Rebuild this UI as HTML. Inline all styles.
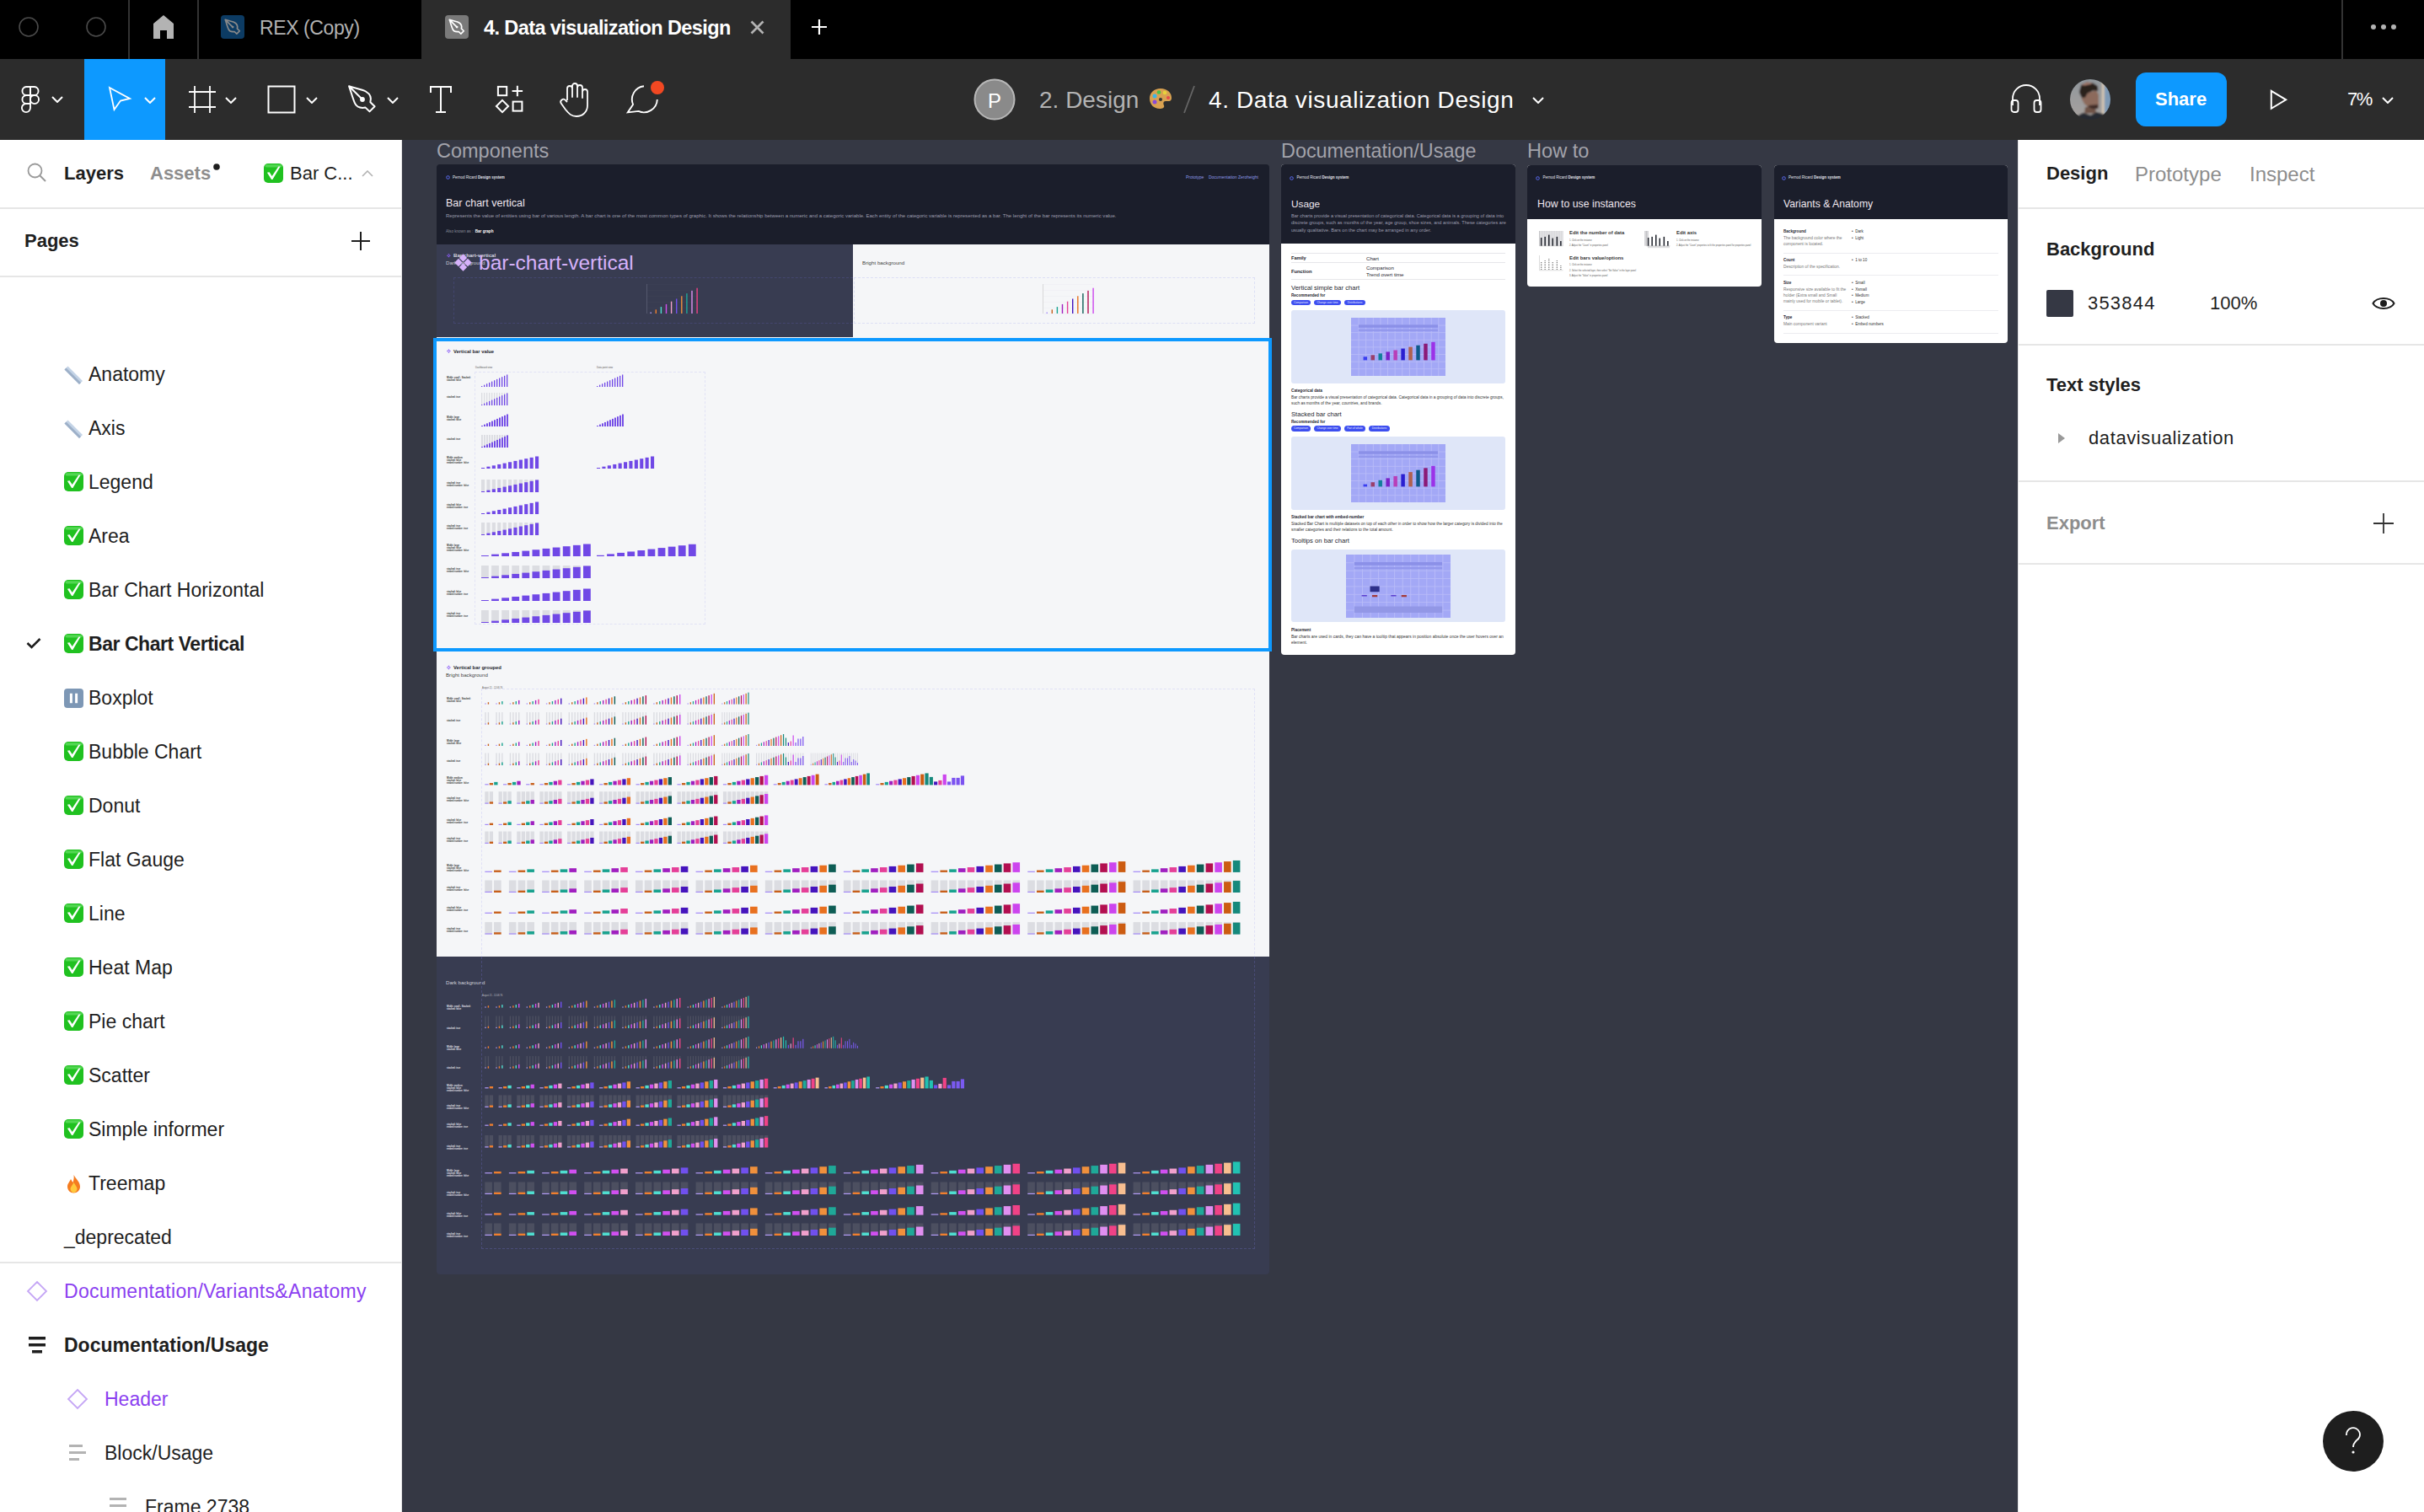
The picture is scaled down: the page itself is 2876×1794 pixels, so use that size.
<!DOCTYPE html>
<html><head><meta charset="utf-8"><title>Figma</title>
<style>
html,body{margin:0;padding:0;width:2876px;height:1794px;overflow:hidden;background:#353844}
body{position:relative;font-family:"Liberation Sans", sans-serif;}
.t{position:absolute;white-space:nowrap;}
.r{position:absolute;}
svg.r{display:block}
</style></head><body>
<div class="r" style="left:477px;top:166px;width:1917px;height:1628px;background:#353844;"></div>
<div class="t" style="left:518px;top:163.0px;font-size:23.5px;line-height:32px;color:#a3a3ab;font-weight:400;">Components</div>
<div class="t" style="left:1520px;top:163.0px;font-size:23.4px;line-height:32px;color:#a3a3ab;font-weight:400;">Documentation/Usage</div>
<div class="t" style="left:1812px;top:162.5px;font-size:23.6px;line-height:33px;color:#a3a3ab;font-weight:400;">How to</div>
<div class="r" style="left:518px;top:195px;width:988px;height:95px;background:#1b1e2b;border-radius:4px 4px 0 0"></div>
<svg class="r" style="left:529px;top:208px;overflow:visible" width="5" height="5" viewBox="0 0 5 5"><circle cx="2.5" cy="2.5" r="1.8" fill="none" stroke="#5b6cf5" stroke-width="1"/></svg>
<div class="t" style="left:537px;top:207.6px;font-size:4.5px;line-height:6px;color:#e6e6ee;font-weight:400;">Pernod Ricard <b>Design system</b></div>
<div class="t" style="left:1407px;top:207.1px;font-size:5.0px;line-height:7px;color:#8e9ae6;font-weight:400;">Prototype &nbsp;&nbsp; Documentation Zeroheight</div>
<div class="t" style="left:529px;top:233.1px;font-size:12.5px;line-height:17px;color:#f0e8f0;font-weight:400;">Bar chart vertical</div>
<div class="t" style="left:529px;top:252.0px;font-size:6.05px;line-height:8px;color:#9b9cad;font-weight:400;white-space:nowrap">Represents the value of entities using bar of various length. A bar chart is one of the most common types of graphic. It shows the relationship between a numeric and a categoric variable. Each entity of the categoric variable is represented as a bar. The lenght of the bar represents its numeric value.</div>
<div class="t" style="left:529px;top:272.2px;font-size:4.6px;line-height:6px;color:#8a8b99;font-weight:400;">Also known as : &nbsp;<span style="color:#fff;font-weight:700">Bar graph</span></div>
<div class="r" style="left:518px;top:290px;width:494px;height:110px;background:#383c51;"></div>
<div class="r" style="left:1012px;top:290px;width:494px;height:110px;background:#f5f6f8;"></div>
<div class="t" style="left:538px;top:299.4px;font-size:6.1px;line-height:8px;color:#d8d8e0;font-weight:700;">Bar chart-vertical</div>
<div class="t" style="left:529px;top:308.0px;font-size:6.1px;line-height:8px;color:#c9c9d3;font-weight:400;">Dark background</div>
<div class="t" style="left:1023px;top:308.0px;font-size:6.2px;line-height:8px;color:#444;font-weight:400;">Bright background</div>
<div class="r" style="left:538px;top:328.6px;width:474px;height:55.5px;background:transparent;border:1px dashed #43466e;border-right:none;box-sizing:border-box"></div>
<div class="r" style="left:1013px;top:328.6px;width:476px;height:55.5px;background:transparent;border:1px dashed #dcdff5;box-sizing:border-box"></div>
<svg class="r" style="left:0px;top:0px;overflow:visible" width="2876" height="1794" viewBox="0 0 2876 1794"><rect x="767.00" y="337.00" width="0.50" height="35.00" fill="#70728a"/><rect x="768.00" y="337.00" width="60.00" height="0.30" fill="#45485c"/><rect x="768.00" y="344.00" width="60.00" height="0.30" fill="#45485c"/><rect x="768.00" y="351.00" width="60.00" height="0.30" fill="#45485c"/><rect x="768.00" y="358.00" width="60.00" height="0.30" fill="#45485c"/><rect x="768.00" y="365.00" width="60.00" height="0.30" fill="#45485c"/><rect x="768.00" y="372.00" width="60.00" height="0.30" fill="#45485c"/><rect x="771.50" y="370.50" width="1.40" height="1.50" fill="#b49cf7"/><rect x="777.60" y="367.30" width="1.40" height="4.70" fill="#f07f2e"/><rect x="783.70" y="364.10" width="1.40" height="7.90" fill="#4fded0"/><rect x="789.80" y="360.90" width="1.40" height="11.10" fill="#d04ff0"/><rect x="795.90" y="357.70" width="1.40" height="14.30" fill="#f0a0cc"/><rect x="802.00" y="354.50" width="1.40" height="17.50" fill="#7050ee"/><rect x="808.10" y="351.30" width="1.40" height="20.70" fill="#f0903c"/><rect x="814.20" y="348.10" width="1.40" height="23.90" fill="#1fa898"/><rect x="820.30" y="344.90" width="1.40" height="27.10" fill="#e08ff0"/><rect x="826.40" y="341.70" width="1.40" height="30.30" fill="#f04286"/><rect x="1237.00" y="337.00" width="0.50" height="35.00" fill="#bbb"/><rect x="1238.00" y="337.00" width="60.00" height="0.30" fill="#e6e7ee"/><rect x="1238.00" y="344.00" width="60.00" height="0.30" fill="#e6e7ee"/><rect x="1238.00" y="351.00" width="60.00" height="0.30" fill="#e6e7ee"/><rect x="1238.00" y="358.00" width="60.00" height="0.30" fill="#e6e7ee"/><rect x="1238.00" y="365.00" width="60.00" height="0.30" fill="#e6e7ee"/><rect x="1238.00" y="372.00" width="60.00" height="0.30" fill="#e6e7ee"/><rect x="1241.50" y="370.50" width="1.40" height="1.50" fill="#a48af7"/><rect x="1247.60" y="367.30" width="1.40" height="4.70" fill="#c75f1a"/><rect x="1253.70" y="364.10" width="1.40" height="7.90" fill="#18a28f"/><rect x="1259.80" y="360.90" width="1.40" height="11.10" fill="#a01fc0"/><rect x="1265.90" y="357.70" width="1.40" height="14.30" fill="#e53f98"/><rect x="1272.00" y="354.50" width="1.40" height="17.50" fill="#4514bd"/><rect x="1278.10" y="351.30" width="1.40" height="20.70" fill="#e8701f"/><rect x="1284.20" y="348.10" width="1.40" height="23.90" fill="#0e5d55"/><rect x="1290.30" y="344.90" width="1.40" height="27.10" fill="#b20f50"/><rect x="1296.40" y="341.70" width="1.40" height="30.30" fill="#cc45ee"/></svg>
<svg class="r" style="left:0px;top:0px;overflow:visible" width="1" height="1"><path d="M532.40 300.90 L533.35 301.85 L532.40 302.79 L531.45 301.85 Z M532.40 303.61 L533.35 304.55 L532.40 305.50 L531.45 304.55 Z M531.05 302.25 L532.00 303.20 L531.05 304.14 L530.10 303.20 Z M533.75 302.25 L534.70 303.20 L533.75 304.14 L532.80 303.20 Z " fill="#8b5cf6"/></svg>
<svg class="r" style="left:539px;top:301.4px;overflow:visible" width="21" height="21" viewBox="0 0 21 21"><g fill="#d6b2fb"><path d="M10.5 0.3 L15.2 5 L10.5 9.7 L5.8 5Z"/><path d="M10.5 11.3 L15.2 16 L10.5 20.7 L5.8 16Z"/><path d="M5 5.8 L9.7 10.5 L5 15.2 L0.3 10.5Z"/><path d="M16 5.8 L20.7 10.5 L16 15.2 L11.3 10.5Z"/></g></svg>
<div class="t" style="left:568px;top:295.0px;font-size:24.5px;line-height:34px;color:#d6b2fb;font-weight:400;">bar-chart-vertical</div>
<div class="r" style="left:518px;top:400px;width:988px;height:373px;background:#f5f6f8;"></div>
<svg class="r" style="left:0px;top:0px;overflow:visible" width="1" height="1"><path d="M532.40 414.22 L533.38 415.20 L532.40 416.18 L531.42 415.20 Z M532.40 417.02 L533.38 418.00 L532.40 418.98 L531.42 418.00 Z M531.00 415.62 L531.98 416.60 L531.00 417.58 L530.02 416.60 Z M533.80 415.62 L534.78 416.60 L533.80 417.58 L532.82 416.60 Z " fill="#8b5cf6"/></svg>
<div class="t" style="left:538px;top:412.6px;font-size:5.85px;line-height:8px;color:#1e1e2e;font-weight:700;">Vertical bar value</div>
<div class="t" style="left:564px;top:434.5px;font-size:2.8px;line-height:3px;color:#555;font-weight:400;">Dashboard view</div>
<div class="t" style="left:708px;top:434.5px;font-size:2.8px;line-height:3px;color:#555;font-weight:400;">Data point view</div>
<div class="r" style="left:563px;top:441px;width:274px;height:300px;background:transparent;border:1px dashed #e2e3f6;box-sizing:border-box"></div>
<svg class="r" style="left:0px;top:0px;overflow:visible" width="2876" height="1794" viewBox="0 0 2876 1794"><rect x="571.00" y="458.00" width="1.30" height="1.00" fill="#7048e6"/><rect x="574.00" y="456.65" width="1.30" height="2.35" fill="#7048e6"/><rect x="577.00" y="455.30" width="1.30" height="3.70" fill="#7048e6"/><rect x="580.00" y="453.95" width="1.30" height="5.05" fill="#7048e6"/><rect x="583.00" y="452.60" width="1.30" height="6.40" fill="#7048e6"/><rect x="586.00" y="451.25" width="1.30" height="7.75" fill="#7048e6"/><rect x="589.00" y="449.90" width="1.30" height="9.10" fill="#7048e6"/><rect x="592.00" y="448.55" width="1.30" height="10.45" fill="#7048e6"/><rect x="595.00" y="447.20" width="1.30" height="11.80" fill="#7048e6"/><rect x="598.00" y="445.85" width="1.30" height="13.15" fill="#7048e6"/><rect x="601.00" y="444.50" width="1.30" height="14.50" fill="#7048e6"/><rect x="708.00" y="458.00" width="1.30" height="1.00" fill="#7048e6"/><rect x="711.00" y="456.65" width="1.30" height="2.35" fill="#7048e6"/><rect x="714.00" y="455.30" width="1.30" height="3.70" fill="#7048e6"/><rect x="717.00" y="453.95" width="1.30" height="5.05" fill="#7048e6"/><rect x="720.00" y="452.60" width="1.30" height="6.40" fill="#7048e6"/><rect x="723.00" y="451.25" width="1.30" height="7.75" fill="#7048e6"/><rect x="726.00" y="449.90" width="1.30" height="9.10" fill="#7048e6"/><rect x="729.00" y="448.55" width="1.30" height="10.45" fill="#7048e6"/><rect x="732.00" y="447.20" width="1.30" height="11.80" fill="#7048e6"/><rect x="735.00" y="445.85" width="1.30" height="13.15" fill="#7048e6"/><rect x="738.00" y="444.50" width="1.30" height="14.50" fill="#7048e6"/><rect x="571.00" y="466.00" width="1.30" height="15.00" fill="#dcdde2"/><rect x="571.00" y="480.00" width="1.30" height="1.00" fill="#7048e6"/><rect x="574.00" y="466.00" width="1.30" height="15.00" fill="#dcdde2"/><rect x="574.00" y="478.65" width="1.30" height="2.35" fill="#7048e6"/><rect x="577.00" y="466.00" width="1.30" height="15.00" fill="#dcdde2"/><rect x="577.00" y="477.30" width="1.30" height="3.70" fill="#7048e6"/><rect x="580.00" y="466.00" width="1.30" height="15.00" fill="#dcdde2"/><rect x="580.00" y="475.95" width="1.30" height="5.05" fill="#7048e6"/><rect x="583.00" y="466.00" width="1.30" height="15.00" fill="#dcdde2"/><rect x="583.00" y="474.60" width="1.30" height="6.40" fill="#7048e6"/><rect x="586.00" y="466.00" width="1.30" height="15.00" fill="#dcdde2"/><rect x="586.00" y="473.25" width="1.30" height="7.75" fill="#7048e6"/><rect x="589.00" y="466.00" width="1.30" height="15.00" fill="#dcdde2"/><rect x="589.00" y="471.90" width="1.30" height="9.10" fill="#7048e6"/><rect x="592.00" y="466.00" width="1.30" height="15.00" fill="#dcdde2"/><rect x="592.00" y="470.55" width="1.30" height="10.45" fill="#7048e6"/><rect x="595.00" y="466.00" width="1.30" height="15.00" fill="#dcdde2"/><rect x="595.00" y="469.20" width="1.30" height="11.80" fill="#7048e6"/><rect x="598.00" y="466.00" width="1.30" height="15.00" fill="#dcdde2"/><rect x="598.00" y="467.85" width="1.30" height="13.15" fill="#7048e6"/><rect x="601.00" y="466.00" width="1.30" height="15.00" fill="#dcdde2"/><rect x="601.00" y="466.50" width="1.30" height="14.50" fill="#7048e6"/><rect x="571.00" y="505.00" width="1.90" height="1.00" fill="#7048e6"/><rect x="574.00" y="503.65" width="1.90" height="2.35" fill="#7048e6"/><rect x="577.00" y="502.30" width="1.90" height="3.70" fill="#7048e6"/><rect x="580.00" y="500.95" width="1.90" height="5.05" fill="#7048e6"/><rect x="583.00" y="499.60" width="1.90" height="6.40" fill="#7048e6"/><rect x="586.00" y="498.25" width="1.90" height="7.75" fill="#7048e6"/><rect x="589.00" y="496.90" width="1.90" height="9.10" fill="#7048e6"/><rect x="592.00" y="495.55" width="1.90" height="10.45" fill="#7048e6"/><rect x="595.00" y="494.20" width="1.90" height="11.80" fill="#7048e6"/><rect x="598.00" y="492.85" width="1.90" height="13.15" fill="#7048e6"/><rect x="601.00" y="491.50" width="1.90" height="14.50" fill="#7048e6"/><rect x="708.00" y="505.00" width="1.90" height="1.00" fill="#7048e6"/><rect x="711.00" y="503.65" width="1.90" height="2.35" fill="#7048e6"/><rect x="714.00" y="502.30" width="1.90" height="3.70" fill="#7048e6"/><rect x="717.00" y="500.95" width="1.90" height="5.05" fill="#7048e6"/><rect x="720.00" y="499.60" width="1.90" height="6.40" fill="#7048e6"/><rect x="723.00" y="498.25" width="1.90" height="7.75" fill="#7048e6"/><rect x="726.00" y="496.90" width="1.90" height="9.10" fill="#7048e6"/><rect x="729.00" y="495.55" width="1.90" height="10.45" fill="#7048e6"/><rect x="732.00" y="494.20" width="1.90" height="11.80" fill="#7048e6"/><rect x="735.00" y="492.85" width="1.90" height="13.15" fill="#7048e6"/><rect x="738.00" y="491.50" width="1.90" height="14.50" fill="#7048e6"/><rect x="571.00" y="516.00" width="1.90" height="15.00" fill="#dcdde2"/><rect x="571.00" y="530.00" width="1.90" height="1.00" fill="#7048e6"/><rect x="574.00" y="516.00" width="1.90" height="15.00" fill="#dcdde2"/><rect x="574.00" y="528.65" width="1.90" height="2.35" fill="#7048e6"/><rect x="577.00" y="516.00" width="1.90" height="15.00" fill="#dcdde2"/><rect x="577.00" y="527.30" width="1.90" height="3.70" fill="#7048e6"/><rect x="580.00" y="516.00" width="1.90" height="15.00" fill="#dcdde2"/><rect x="580.00" y="525.95" width="1.90" height="5.05" fill="#7048e6"/><rect x="583.00" y="516.00" width="1.90" height="15.00" fill="#dcdde2"/><rect x="583.00" y="524.60" width="1.90" height="6.40" fill="#7048e6"/><rect x="586.00" y="516.00" width="1.90" height="15.00" fill="#dcdde2"/><rect x="586.00" y="523.25" width="1.90" height="7.75" fill="#7048e6"/><rect x="589.00" y="516.00" width="1.90" height="15.00" fill="#dcdde2"/><rect x="589.00" y="521.90" width="1.90" height="9.10" fill="#7048e6"/><rect x="592.00" y="516.00" width="1.90" height="15.00" fill="#dcdde2"/><rect x="592.00" y="520.55" width="1.90" height="10.45" fill="#7048e6"/><rect x="595.00" y="516.00" width="1.90" height="15.00" fill="#dcdde2"/><rect x="595.00" y="519.20" width="1.90" height="11.80" fill="#7048e6"/><rect x="598.00" y="516.00" width="1.90" height="15.00" fill="#dcdde2"/><rect x="598.00" y="517.85" width="1.90" height="13.15" fill="#7048e6"/><rect x="601.00" y="516.00" width="1.90" height="15.00" fill="#dcdde2"/><rect x="601.00" y="516.50" width="1.90" height="14.50" fill="#7048e6"/><rect x="571.00" y="555.00" width="4.10" height="1.00" fill="#7048e6"/><rect x="577.40" y="553.65" width="4.10" height="2.35" fill="#7048e6"/><rect x="583.80" y="552.30" width="4.10" height="3.70" fill="#7048e6"/><rect x="590.20" y="550.95" width="4.10" height="5.05" fill="#7048e6"/><rect x="596.60" y="549.60" width="4.10" height="6.40" fill="#7048e6"/><rect x="603.00" y="548.25" width="4.10" height="7.75" fill="#7048e6"/><rect x="609.40" y="546.90" width="4.10" height="9.10" fill="#7048e6"/><rect x="615.80" y="545.55" width="4.10" height="10.45" fill="#7048e6"/><rect x="622.20" y="544.20" width="4.10" height="11.80" fill="#7048e6"/><rect x="628.60" y="542.85" width="4.10" height="13.15" fill="#7048e6"/><rect x="635.00" y="541.50" width="4.10" height="14.50" fill="#7048e6"/><rect x="708.00" y="555.00" width="4.10" height="1.00" fill="#7048e6"/><rect x="714.40" y="553.65" width="4.10" height="2.35" fill="#7048e6"/><rect x="720.80" y="552.30" width="4.10" height="3.70" fill="#7048e6"/><rect x="727.20" y="550.95" width="4.10" height="5.05" fill="#7048e6"/><rect x="733.60" y="549.60" width="4.10" height="6.40" fill="#7048e6"/><rect x="740.00" y="548.25" width="4.10" height="7.75" fill="#7048e6"/><rect x="746.40" y="546.90" width="4.10" height="9.10" fill="#7048e6"/><rect x="752.80" y="545.55" width="4.10" height="10.45" fill="#7048e6"/><rect x="759.20" y="544.20" width="4.10" height="11.80" fill="#7048e6"/><rect x="765.60" y="542.85" width="4.10" height="13.15" fill="#7048e6"/><rect x="772.00" y="541.50" width="4.10" height="14.50" fill="#7048e6"/><rect x="571.00" y="569.00" width="4.10" height="15.00" fill="#dcdde2"/><rect x="571.00" y="583.00" width="4.10" height="1.00" fill="#7048e6"/><rect x="577.40" y="569.00" width="4.10" height="15.00" fill="#dcdde2"/><rect x="577.40" y="581.65" width="4.10" height="2.35" fill="#7048e6"/><rect x="583.80" y="569.00" width="4.10" height="15.00" fill="#dcdde2"/><rect x="583.80" y="580.30" width="4.10" height="3.70" fill="#7048e6"/><rect x="590.20" y="569.00" width="4.10" height="15.00" fill="#dcdde2"/><rect x="590.20" y="578.95" width="4.10" height="5.05" fill="#7048e6"/><rect x="596.60" y="569.00" width="4.10" height="15.00" fill="#dcdde2"/><rect x="596.60" y="577.60" width="4.10" height="6.40" fill="#7048e6"/><rect x="603.00" y="569.00" width="4.10" height="15.00" fill="#dcdde2"/><rect x="603.00" y="576.25" width="4.10" height="7.75" fill="#7048e6"/><rect x="609.40" y="569.00" width="4.10" height="15.00" fill="#dcdde2"/><rect x="609.40" y="574.90" width="4.10" height="9.10" fill="#7048e6"/><rect x="615.80" y="569.00" width="4.10" height="15.00" fill="#dcdde2"/><rect x="615.80" y="573.55" width="4.10" height="10.45" fill="#7048e6"/><rect x="622.20" y="569.00" width="4.10" height="15.00" fill="#dcdde2"/><rect x="622.20" y="572.20" width="4.10" height="11.80" fill="#7048e6"/><rect x="628.60" y="569.00" width="4.10" height="15.00" fill="#dcdde2"/><rect x="628.60" y="570.85" width="4.10" height="13.15" fill="#7048e6"/><rect x="635.00" y="569.00" width="4.10" height="15.00" fill="#dcdde2"/><rect x="635.00" y="569.50" width="4.10" height="14.50" fill="#7048e6"/><rect x="571.00" y="609.00" width="4.10" height="1.00" fill="#7048e6"/><rect x="577.40" y="607.65" width="4.10" height="2.35" fill="#7048e6"/><rect x="583.80" y="606.30" width="4.10" height="3.70" fill="#7048e6"/><rect x="590.20" y="604.95" width="4.10" height="5.05" fill="#7048e6"/><rect x="596.60" y="603.60" width="4.10" height="6.40" fill="#7048e6"/><rect x="603.00" y="602.25" width="4.10" height="7.75" fill="#7048e6"/><rect x="609.40" y="600.90" width="4.10" height="9.10" fill="#7048e6"/><rect x="615.80" y="599.55" width="4.10" height="10.45" fill="#7048e6"/><rect x="622.20" y="598.20" width="4.10" height="11.80" fill="#7048e6"/><rect x="628.60" y="596.85" width="4.10" height="13.15" fill="#7048e6"/><rect x="635.00" y="595.50" width="4.10" height="14.50" fill="#7048e6"/><rect x="571.00" y="620.00" width="4.10" height="15.00" fill="#dcdde2"/><rect x="571.00" y="634.00" width="4.10" height="1.00" fill="#7048e6"/><rect x="577.40" y="620.00" width="4.10" height="15.00" fill="#dcdde2"/><rect x="577.40" y="632.65" width="4.10" height="2.35" fill="#7048e6"/><rect x="583.80" y="620.00" width="4.10" height="15.00" fill="#dcdde2"/><rect x="583.80" y="631.30" width="4.10" height="3.70" fill="#7048e6"/><rect x="590.20" y="620.00" width="4.10" height="15.00" fill="#dcdde2"/><rect x="590.20" y="629.95" width="4.10" height="5.05" fill="#7048e6"/><rect x="596.60" y="620.00" width="4.10" height="15.00" fill="#dcdde2"/><rect x="596.60" y="628.60" width="4.10" height="6.40" fill="#7048e6"/><rect x="603.00" y="620.00" width="4.10" height="15.00" fill="#dcdde2"/><rect x="603.00" y="627.25" width="4.10" height="7.75" fill="#7048e6"/><rect x="609.40" y="620.00" width="4.10" height="15.00" fill="#dcdde2"/><rect x="609.40" y="625.90" width="4.10" height="9.10" fill="#7048e6"/><rect x="615.80" y="620.00" width="4.10" height="15.00" fill="#dcdde2"/><rect x="615.80" y="624.55" width="4.10" height="10.45" fill="#7048e6"/><rect x="622.20" y="620.00" width="4.10" height="15.00" fill="#dcdde2"/><rect x="622.20" y="623.20" width="4.10" height="11.80" fill="#7048e6"/><rect x="628.60" y="620.00" width="4.10" height="15.00" fill="#dcdde2"/><rect x="628.60" y="621.85" width="4.10" height="13.15" fill="#7048e6"/><rect x="635.00" y="620.00" width="4.10" height="15.00" fill="#dcdde2"/><rect x="635.00" y="620.50" width="4.10" height="14.50" fill="#7048e6"/><rect x="571.00" y="659.00" width="8.80" height="1.00" fill="#7048e6"/><rect x="583.10" y="657.65" width="8.80" height="2.35" fill="#7048e6"/><rect x="595.20" y="656.30" width="8.80" height="3.70" fill="#7048e6"/><rect x="607.30" y="654.95" width="8.80" height="5.05" fill="#7048e6"/><rect x="619.40" y="653.60" width="8.80" height="6.40" fill="#7048e6"/><rect x="631.50" y="652.25" width="8.80" height="7.75" fill="#7048e6"/><rect x="643.60" y="650.90" width="8.80" height="9.10" fill="#7048e6"/><rect x="655.70" y="649.55" width="8.80" height="10.45" fill="#7048e6"/><rect x="667.80" y="648.20" width="8.80" height="11.80" fill="#7048e6"/><rect x="679.90" y="646.85" width="8.80" height="13.15" fill="#7048e6"/><rect x="692.00" y="645.50" width="8.80" height="14.50" fill="#7048e6"/><rect x="708.00" y="658.80" width="8.80" height="1.20" fill="#7048e6"/><rect x="720.10" y="657.35" width="8.80" height="2.65" fill="#7048e6"/><rect x="732.20" y="655.90" width="8.80" height="4.10" fill="#7048e6"/><rect x="744.30" y="654.45" width="8.80" height="5.55" fill="#7048e6"/><rect x="756.40" y="653.00" width="8.80" height="7.00" fill="#7048e6"/><rect x="768.50" y="651.55" width="8.80" height="8.45" fill="#7048e6"/><rect x="780.60" y="650.10" width="8.80" height="9.90" fill="#7048e6"/><rect x="792.70" y="648.65" width="8.80" height="11.35" fill="#7048e6"/><rect x="804.80" y="647.20" width="8.80" height="12.80" fill="#7048e6"/><rect x="816.90" y="645.75" width="8.80" height="14.25" fill="#7048e6"/><rect x="571.00" y="671.00" width="8.80" height="15.00" fill="#dcdde2"/><rect x="571.00" y="685.00" width="8.80" height="1.00" fill="#7048e6"/><rect x="583.10" y="671.00" width="8.80" height="15.00" fill="#dcdde2"/><rect x="583.10" y="683.65" width="8.80" height="2.35" fill="#7048e6"/><rect x="595.20" y="671.00" width="8.80" height="15.00" fill="#dcdde2"/><rect x="595.20" y="682.30" width="8.80" height="3.70" fill="#7048e6"/><rect x="607.30" y="671.00" width="8.80" height="15.00" fill="#dcdde2"/><rect x="607.30" y="680.95" width="8.80" height="5.05" fill="#7048e6"/><rect x="619.40" y="671.00" width="8.80" height="15.00" fill="#dcdde2"/><rect x="619.40" y="679.60" width="8.80" height="6.40" fill="#7048e6"/><rect x="631.50" y="671.00" width="8.80" height="15.00" fill="#dcdde2"/><rect x="631.50" y="678.25" width="8.80" height="7.75" fill="#7048e6"/><rect x="643.60" y="671.00" width="8.80" height="15.00" fill="#dcdde2"/><rect x="643.60" y="676.90" width="8.80" height="9.10" fill="#7048e6"/><rect x="655.70" y="671.00" width="8.80" height="15.00" fill="#dcdde2"/><rect x="655.70" y="675.55" width="8.80" height="10.45" fill="#7048e6"/><rect x="667.80" y="671.00" width="8.80" height="15.00" fill="#dcdde2"/><rect x="667.80" y="674.20" width="8.80" height="11.80" fill="#7048e6"/><rect x="679.90" y="671.00" width="8.80" height="15.00" fill="#dcdde2"/><rect x="679.90" y="672.85" width="8.80" height="13.15" fill="#7048e6"/><rect x="692.00" y="671.00" width="8.80" height="15.00" fill="#dcdde2"/><rect x="692.00" y="671.50" width="8.80" height="14.50" fill="#7048e6"/><rect x="571.00" y="712.00" width="8.80" height="1.00" fill="#7048e6"/><rect x="583.10" y="710.65" width="8.80" height="2.35" fill="#7048e6"/><rect x="595.20" y="709.30" width="8.80" height="3.70" fill="#7048e6"/><rect x="607.30" y="707.95" width="8.80" height="5.05" fill="#7048e6"/><rect x="619.40" y="706.60" width="8.80" height="6.40" fill="#7048e6"/><rect x="631.50" y="705.25" width="8.80" height="7.75" fill="#7048e6"/><rect x="643.60" y="703.90" width="8.80" height="9.10" fill="#7048e6"/><rect x="655.70" y="702.55" width="8.80" height="10.45" fill="#7048e6"/><rect x="667.80" y="701.20" width="8.80" height="11.80" fill="#7048e6"/><rect x="679.90" y="699.85" width="8.80" height="13.15" fill="#7048e6"/><rect x="692.00" y="698.50" width="8.80" height="14.50" fill="#7048e6"/><rect x="571.00" y="724.00" width="8.80" height="15.00" fill="#dcdde2"/><rect x="571.00" y="738.00" width="8.80" height="1.00" fill="#7048e6"/><rect x="583.10" y="724.00" width="8.80" height="15.00" fill="#dcdde2"/><rect x="583.10" y="736.65" width="8.80" height="2.35" fill="#7048e6"/><rect x="595.20" y="724.00" width="8.80" height="15.00" fill="#dcdde2"/><rect x="595.20" y="735.30" width="8.80" height="3.70" fill="#7048e6"/><rect x="607.30" y="724.00" width="8.80" height="15.00" fill="#dcdde2"/><rect x="607.30" y="733.95" width="8.80" height="5.05" fill="#7048e6"/><rect x="619.40" y="724.00" width="8.80" height="15.00" fill="#dcdde2"/><rect x="619.40" y="732.60" width="8.80" height="6.40" fill="#7048e6"/><rect x="631.50" y="724.00" width="8.80" height="15.00" fill="#dcdde2"/><rect x="631.50" y="731.25" width="8.80" height="7.75" fill="#7048e6"/><rect x="643.60" y="724.00" width="8.80" height="15.00" fill="#dcdde2"/><rect x="643.60" y="729.90" width="8.80" height="9.10" fill="#7048e6"/><rect x="655.70" y="724.00" width="8.80" height="15.00" fill="#dcdde2"/><rect x="655.70" y="728.55" width="8.80" height="10.45" fill="#7048e6"/><rect x="667.80" y="724.00" width="8.80" height="15.00" fill="#dcdde2"/><rect x="667.80" y="727.20" width="8.80" height="11.80" fill="#7048e6"/><rect x="679.90" y="724.00" width="8.80" height="15.00" fill="#dcdde2"/><rect x="679.90" y="725.85" width="8.80" height="13.15" fill="#7048e6"/><rect x="692.00" y="724.00" width="8.80" height="15.00" fill="#dcdde2"/><rect x="692.00" y="724.50" width="8.80" height="14.50" fill="#7048e6"/></svg>
<div class="t" style="left:530px;top:446.5px;font-size:2.6px;line-height:3px;color:#333;font-weight:700">Width: small - Stacked:<br>stacked: false</div>
<div class="t" style="left:530px;top:470.0px;font-size:2.6px;line-height:3px;color:#333;font-weight:700">stacked: true</div>
<div class="t" style="left:530px;top:493.5px;font-size:2.6px;line-height:3px;color:#333;font-weight:700">Width: large<br>stacked: false</div>
<div class="t" style="left:530px;top:520.0px;font-size:2.6px;line-height:3px;color:#333;font-weight:700">stacked: true</div>
<div class="t" style="left:530px;top:542.0px;font-size:2.6px;line-height:3px;color:#333;font-weight:700">Width: medium<br>stacked: false<br>embed number: false</div>
<div class="t" style="left:530px;top:571.5px;font-size:2.6px;line-height:3px;color:#333;font-weight:700">stacked: true<br>embed number: false</div>
<div class="t" style="left:530px;top:597.5px;font-size:2.6px;line-height:3px;color:#333;font-weight:700">stacked: false<br>embed number: true</div>
<div class="t" style="left:530px;top:622.5px;font-size:2.6px;line-height:3px;color:#333;font-weight:700">stacked: true<br>embed number: true</div>
<div class="t" style="left:530px;top:646.0px;font-size:2.6px;line-height:3px;color:#333;font-weight:700">Width: large<br>stacked: false<br>embed number: false</div>
<div class="t" style="left:530px;top:673.5px;font-size:2.6px;line-height:3px;color:#333;font-weight:700">stacked: true<br>embed number: false</div>
<div class="t" style="left:530px;top:700.5px;font-size:2.6px;line-height:3px;color:#333;font-weight:700">stacked: false<br>embed number: true</div>
<div class="t" style="left:530px;top:726.5px;font-size:2.6px;line-height:3px;color:#333;font-weight:700">stacked: true<br>embed number: true</div>
<div class="r" style="left:518px;top:773px;width:988px;height:362px;background:#f5f6f8;"></div>
<svg class="r" style="left:0px;top:0px;overflow:visible" width="1" height="1"><path d="M532.40 789.62 L533.38 790.60 L532.40 791.58 L531.42 790.60 Z M532.40 792.42 L533.38 793.40 L532.40 794.38 L531.42 793.40 Z M531.00 791.02 L531.98 792.00 L531.00 792.98 L530.02 792.00 Z M533.80 791.02 L534.78 792.00 L533.80 792.98 L532.82 792.00 Z " fill="#8b5cf6"/></svg>
<div class="t" style="left:538px;top:788.0px;font-size:5.9px;line-height:8px;color:#1e1e2e;font-weight:700;">Vertical bar grouped</div>
<div class="t" style="left:529px;top:796.7px;font-size:6.15px;line-height:8px;color:#444;font-weight:400;">Bright background</div>
<div class="r" style="left:571px;top:817px;width:918px;height:330px;background:transparent;border-left:1px dashed #e0e1f6;border-top:1px dashed #e0e1f6;border-right:1px dashed #e0e1f6;box-sizing:border-box"></div>
<div class="t" style="left:572px;top:815.0px;font-size:2.6px;line-height:3px;color:#555;font-weight:400;">August 21 - 12.08.76</div>
<svg class="r" style="left:0px;top:0px;overflow:visible" width="2876" height="1794" viewBox="0 0 2876 1794"><rect x="575.30" y="834.40" width="1.40" height="1.20" fill="#a48af7"/><rect x="578.72" y="833.24" width="1.40" height="2.36" fill="#c75f1a"/><rect x="588.32" y="834.40" width="1.40" height="1.20" fill="#a48af7"/><rect x="591.74" y="833.24" width="1.40" height="2.36" fill="#c75f1a"/><rect x="595.16" y="832.08" width="1.40" height="3.52" fill="#18a28f"/><rect x="604.76" y="834.40" width="1.40" height="1.20" fill="#a48af7"/><rect x="608.18" y="833.24" width="1.40" height="2.36" fill="#c75f1a"/><rect x="611.60" y="832.08" width="1.40" height="3.52" fill="#18a28f"/><rect x="615.02" y="830.92" width="1.40" height="4.68" fill="#a01fc0"/><rect x="624.62" y="834.40" width="1.40" height="1.20" fill="#a48af7"/><rect x="628.04" y="833.24" width="1.40" height="2.36" fill="#c75f1a"/><rect x="631.46" y="832.08" width="1.40" height="3.52" fill="#18a28f"/><rect x="634.88" y="830.92" width="1.40" height="4.68" fill="#a01fc0"/><rect x="638.30" y="829.76" width="1.40" height="5.84" fill="#e53f98"/><rect x="647.90" y="834.40" width="1.40" height="1.20" fill="#a48af7"/><rect x="651.32" y="833.24" width="1.40" height="2.36" fill="#c75f1a"/><rect x="654.74" y="832.08" width="1.40" height="3.52" fill="#18a28f"/><rect x="658.16" y="830.92" width="1.40" height="4.68" fill="#a01fc0"/><rect x="661.58" y="829.76" width="1.40" height="5.84" fill="#e53f98"/><rect x="665.00" y="828.60" width="1.40" height="7.00" fill="#4514bd"/><rect x="674.60" y="834.40" width="1.40" height="1.20" fill="#a48af7"/><rect x="678.02" y="833.24" width="1.40" height="2.36" fill="#c75f1a"/><rect x="681.44" y="832.08" width="1.40" height="3.52" fill="#18a28f"/><rect x="684.86" y="830.92" width="1.40" height="4.68" fill="#a01fc0"/><rect x="688.28" y="829.76" width="1.40" height="5.84" fill="#e53f98"/><rect x="691.70" y="828.60" width="1.40" height="7.00" fill="#4514bd"/><rect x="695.12" y="827.44" width="1.40" height="8.16" fill="#e8701f"/><rect x="704.72" y="834.40" width="1.40" height="1.20" fill="#a48af7"/><rect x="708.14" y="833.24" width="1.40" height="2.36" fill="#c75f1a"/><rect x="711.56" y="832.08" width="1.40" height="3.52" fill="#18a28f"/><rect x="714.98" y="830.92" width="1.40" height="4.68" fill="#a01fc0"/><rect x="718.40" y="829.76" width="1.40" height="5.84" fill="#e53f98"/><rect x="721.82" y="828.60" width="1.40" height="7.00" fill="#4514bd"/><rect x="725.24" y="827.44" width="1.40" height="8.16" fill="#e8701f"/><rect x="728.66" y="826.28" width="1.40" height="9.32" fill="#0e5d55"/><rect x="738.26" y="834.40" width="1.40" height="1.20" fill="#a48af7"/><rect x="741.68" y="833.24" width="1.40" height="2.36" fill="#c75f1a"/><rect x="745.10" y="832.08" width="1.40" height="3.52" fill="#18a28f"/><rect x="748.52" y="830.92" width="1.40" height="4.68" fill="#a01fc0"/><rect x="751.94" y="829.76" width="1.40" height="5.84" fill="#e53f98"/><rect x="755.36" y="828.60" width="1.40" height="7.00" fill="#4514bd"/><rect x="758.78" y="827.44" width="1.40" height="8.16" fill="#e8701f"/><rect x="762.20" y="826.28" width="1.40" height="9.32" fill="#0e5d55"/><rect x="765.62" y="825.12" width="1.40" height="10.48" fill="#b20f50"/><rect x="775.22" y="834.40" width="1.40" height="1.20" fill="#a48af7"/><rect x="778.64" y="833.24" width="1.40" height="2.36" fill="#c75f1a"/><rect x="782.06" y="832.08" width="1.40" height="3.52" fill="#18a28f"/><rect x="785.48" y="830.92" width="1.40" height="4.68" fill="#a01fc0"/><rect x="788.90" y="829.76" width="1.40" height="5.84" fill="#e53f98"/><rect x="792.32" y="828.60" width="1.40" height="7.00" fill="#4514bd"/><rect x="795.74" y="827.44" width="1.40" height="8.16" fill="#e8701f"/><rect x="799.16" y="826.28" width="1.40" height="9.32" fill="#0e5d55"/><rect x="802.58" y="825.12" width="1.40" height="10.48" fill="#b20f50"/><rect x="806.00" y="823.96" width="1.40" height="11.64" fill="#cc45ee"/><rect x="815.60" y="834.40" width="1.27" height="1.20" fill="#a48af7"/><rect x="818.71" y="833.24" width="1.27" height="2.36" fill="#c75f1a"/><rect x="821.82" y="832.08" width="1.27" height="3.52" fill="#18a28f"/><rect x="824.93" y="830.92" width="1.27" height="4.68" fill="#a01fc0"/><rect x="828.04" y="829.76" width="1.27" height="5.84" fill="#e53f98"/><rect x="831.15" y="828.60" width="1.27" height="7.00" fill="#4514bd"/><rect x="834.26" y="827.44" width="1.27" height="8.16" fill="#e8701f"/><rect x="837.37" y="826.28" width="1.27" height="9.32" fill="#0e5d55"/><rect x="840.48" y="825.12" width="1.27" height="10.48" fill="#b20f50"/><rect x="843.59" y="823.96" width="1.27" height="11.64" fill="#cc45ee"/><rect x="846.70" y="822.80" width="1.27" height="12.80" fill="#cc5c12"/><rect x="856.30" y="834.40" width="1.16" height="1.20" fill="#a48af7"/><rect x="859.13" y="833.24" width="1.16" height="2.36" fill="#c75f1a"/><rect x="861.95" y="832.08" width="1.16" height="3.52" fill="#18a28f"/><rect x="864.78" y="830.92" width="1.16" height="4.68" fill="#a01fc0"/><rect x="867.61" y="829.76" width="1.16" height="5.84" fill="#e53f98"/><rect x="870.44" y="828.60" width="1.16" height="7.00" fill="#4514bd"/><rect x="873.26" y="827.44" width="1.16" height="8.16" fill="#e8701f"/><rect x="876.09" y="826.28" width="1.16" height="9.32" fill="#0e5d55"/><rect x="878.92" y="825.12" width="1.16" height="10.48" fill="#b20f50"/><rect x="881.75" y="823.96" width="1.16" height="11.64" fill="#cc45ee"/><rect x="884.57" y="822.80" width="1.16" height="12.80" fill="#cc5c12"/><rect x="887.40" y="821.64" width="1.16" height="13.96" fill="#15897c"/><rect x="575.30" y="845.10" width="1.40" height="14.50" fill="#dcdde2"/><rect x="575.30" y="858.40" width="1.40" height="1.20" fill="#a48af7"/><rect x="578.72" y="845.10" width="1.40" height="14.50" fill="#dcdde2"/><rect x="578.72" y="857.24" width="1.40" height="2.36" fill="#c75f1a"/><rect x="588.32" y="845.10" width="1.40" height="14.50" fill="#dcdde2"/><rect x="588.32" y="858.40" width="1.40" height="1.20" fill="#a48af7"/><rect x="591.74" y="845.10" width="1.40" height="14.50" fill="#dcdde2"/><rect x="591.74" y="857.24" width="1.40" height="2.36" fill="#c75f1a"/><rect x="595.16" y="845.10" width="1.40" height="14.50" fill="#dcdde2"/><rect x="595.16" y="856.08" width="1.40" height="3.52" fill="#18a28f"/><rect x="604.76" y="845.10" width="1.40" height="14.50" fill="#dcdde2"/><rect x="604.76" y="858.40" width="1.40" height="1.20" fill="#a48af7"/><rect x="608.18" y="845.10" width="1.40" height="14.50" fill="#dcdde2"/><rect x="608.18" y="857.24" width="1.40" height="2.36" fill="#c75f1a"/><rect x="611.60" y="845.10" width="1.40" height="14.50" fill="#dcdde2"/><rect x="611.60" y="856.08" width="1.40" height="3.52" fill="#18a28f"/><rect x="615.02" y="845.10" width="1.40" height="14.50" fill="#dcdde2"/><rect x="615.02" y="854.92" width="1.40" height="4.68" fill="#a01fc0"/><rect x="624.62" y="845.10" width="1.40" height="14.50" fill="#dcdde2"/><rect x="624.62" y="858.40" width="1.40" height="1.20" fill="#a48af7"/><rect x="628.04" y="845.10" width="1.40" height="14.50" fill="#dcdde2"/><rect x="628.04" y="857.24" width="1.40" height="2.36" fill="#c75f1a"/><rect x="631.46" y="845.10" width="1.40" height="14.50" fill="#dcdde2"/><rect x="631.46" y="856.08" width="1.40" height="3.52" fill="#18a28f"/><rect x="634.88" y="845.10" width="1.40" height="14.50" fill="#dcdde2"/><rect x="634.88" y="854.92" width="1.40" height="4.68" fill="#a01fc0"/><rect x="638.30" y="845.10" width="1.40" height="14.50" fill="#dcdde2"/><rect x="638.30" y="853.76" width="1.40" height="5.84" fill="#e53f98"/><rect x="647.90" y="845.10" width="1.40" height="14.50" fill="#dcdde2"/><rect x="647.90" y="858.40" width="1.40" height="1.20" fill="#a48af7"/><rect x="651.32" y="845.10" width="1.40" height="14.50" fill="#dcdde2"/><rect x="651.32" y="857.24" width="1.40" height="2.36" fill="#c75f1a"/><rect x="654.74" y="845.10" width="1.40" height="14.50" fill="#dcdde2"/><rect x="654.74" y="856.08" width="1.40" height="3.52" fill="#18a28f"/><rect x="658.16" y="845.10" width="1.40" height="14.50" fill="#dcdde2"/><rect x="658.16" y="854.92" width="1.40" height="4.68" fill="#a01fc0"/><rect x="661.58" y="845.10" width="1.40" height="14.50" fill="#dcdde2"/><rect x="661.58" y="853.76" width="1.40" height="5.84" fill="#e53f98"/><rect x="665.00" y="845.10" width="1.40" height="14.50" fill="#dcdde2"/><rect x="665.00" y="852.60" width="1.40" height="7.00" fill="#4514bd"/><rect x="674.60" y="845.10" width="1.40" height="14.50" fill="#dcdde2"/><rect x="674.60" y="858.40" width="1.40" height="1.20" fill="#a48af7"/><rect x="678.02" y="845.10" width="1.40" height="14.50" fill="#dcdde2"/><rect x="678.02" y="857.24" width="1.40" height="2.36" fill="#c75f1a"/><rect x="681.44" y="845.10" width="1.40" height="14.50" fill="#dcdde2"/><rect x="681.44" y="856.08" width="1.40" height="3.52" fill="#18a28f"/><rect x="684.86" y="845.10" width="1.40" height="14.50" fill="#dcdde2"/><rect x="684.86" y="854.92" width="1.40" height="4.68" fill="#a01fc0"/><rect x="688.28" y="845.10" width="1.40" height="14.50" fill="#dcdde2"/><rect x="688.28" y="853.76" width="1.40" height="5.84" fill="#e53f98"/><rect x="691.70" y="845.10" width="1.40" height="14.50" fill="#dcdde2"/><rect x="691.70" y="852.60" width="1.40" height="7.00" fill="#4514bd"/><rect x="695.12" y="845.10" width="1.40" height="14.50" fill="#dcdde2"/><rect x="695.12" y="851.44" width="1.40" height="8.16" fill="#e8701f"/><rect x="704.72" y="845.10" width="1.40" height="14.50" fill="#dcdde2"/><rect x="704.72" y="858.40" width="1.40" height="1.20" fill="#a48af7"/><rect x="708.14" y="845.10" width="1.40" height="14.50" fill="#dcdde2"/><rect x="708.14" y="857.24" width="1.40" height="2.36" fill="#c75f1a"/><rect x="711.56" y="845.10" width="1.40" height="14.50" fill="#dcdde2"/><rect x="711.56" y="856.08" width="1.40" height="3.52" fill="#18a28f"/><rect x="714.98" y="845.10" width="1.40" height="14.50" fill="#dcdde2"/><rect x="714.98" y="854.92" width="1.40" height="4.68" fill="#a01fc0"/><rect x="718.40" y="845.10" width="1.40" height="14.50" fill="#dcdde2"/><rect x="718.40" y="853.76" width="1.40" height="5.84" fill="#e53f98"/><rect x="721.82" y="845.10" width="1.40" height="14.50" fill="#dcdde2"/><rect x="721.82" y="852.60" width="1.40" height="7.00" fill="#4514bd"/><rect x="725.24" y="845.10" width="1.40" height="14.50" fill="#dcdde2"/><rect x="725.24" y="851.44" width="1.40" height="8.16" fill="#e8701f"/><rect x="728.66" y="845.10" width="1.40" height="14.50" fill="#dcdde2"/><rect x="728.66" y="850.28" width="1.40" height="9.32" fill="#0e5d55"/><rect x="738.26" y="845.10" width="1.40" height="14.50" fill="#dcdde2"/><rect x="738.26" y="858.40" width="1.40" height="1.20" fill="#a48af7"/><rect x="741.68" y="845.10" width="1.40" height="14.50" fill="#dcdde2"/><rect x="741.68" y="857.24" width="1.40" height="2.36" fill="#c75f1a"/><rect x="745.10" y="845.10" width="1.40" height="14.50" fill="#dcdde2"/><rect x="745.10" y="856.08" width="1.40" height="3.52" fill="#18a28f"/><rect x="748.52" y="845.10" width="1.40" height="14.50" fill="#dcdde2"/><rect x="748.52" y="854.92" width="1.40" height="4.68" fill="#a01fc0"/><rect x="751.94" y="845.10" width="1.40" height="14.50" fill="#dcdde2"/><rect x="751.94" y="853.76" width="1.40" height="5.84" fill="#e53f98"/><rect x="755.36" y="845.10" width="1.40" height="14.50" fill="#dcdde2"/><rect x="755.36" y="852.60" width="1.40" height="7.00" fill="#4514bd"/><rect x="758.78" y="845.10" width="1.40" height="14.50" fill="#dcdde2"/><rect x="758.78" y="851.44" width="1.40" height="8.16" fill="#e8701f"/><rect x="762.20" y="845.10" width="1.40" height="14.50" fill="#dcdde2"/><rect x="762.20" y="850.28" width="1.40" height="9.32" fill="#0e5d55"/><rect x="765.62" y="845.10" width="1.40" height="14.50" fill="#dcdde2"/><rect x="765.62" y="849.12" width="1.40" height="10.48" fill="#b20f50"/><rect x="775.22" y="845.10" width="1.40" height="14.50" fill="#dcdde2"/><rect x="775.22" y="858.40" width="1.40" height="1.20" fill="#a48af7"/><rect x="778.64" y="845.10" width="1.40" height="14.50" fill="#dcdde2"/><rect x="778.64" y="857.24" width="1.40" height="2.36" fill="#c75f1a"/><rect x="782.06" y="845.10" width="1.40" height="14.50" fill="#dcdde2"/><rect x="782.06" y="856.08" width="1.40" height="3.52" fill="#18a28f"/><rect x="785.48" y="845.10" width="1.40" height="14.50" fill="#dcdde2"/><rect x="785.48" y="854.92" width="1.40" height="4.68" fill="#a01fc0"/><rect x="788.90" y="845.10" width="1.40" height="14.50" fill="#dcdde2"/><rect x="788.90" y="853.76" width="1.40" height="5.84" fill="#e53f98"/><rect x="792.32" y="845.10" width="1.40" height="14.50" fill="#dcdde2"/><rect x="792.32" y="852.60" width="1.40" height="7.00" fill="#4514bd"/><rect x="795.74" y="845.10" width="1.40" height="14.50" fill="#dcdde2"/><rect x="795.74" y="851.44" width="1.40" height="8.16" fill="#e8701f"/><rect x="799.16" y="845.10" width="1.40" height="14.50" fill="#dcdde2"/><rect x="799.16" y="850.28" width="1.40" height="9.32" fill="#0e5d55"/><rect x="802.58" y="845.10" width="1.40" height="14.50" fill="#dcdde2"/><rect x="802.58" y="849.12" width="1.40" height="10.48" fill="#b20f50"/><rect x="806.00" y="845.10" width="1.40" height="14.50" fill="#dcdde2"/><rect x="806.00" y="847.96" width="1.40" height="11.64" fill="#cc45ee"/><rect x="815.60" y="845.10" width="1.27" height="14.50" fill="#dcdde2"/><rect x="815.60" y="858.40" width="1.27" height="1.20" fill="#a48af7"/><rect x="818.71" y="845.10" width="1.27" height="14.50" fill="#dcdde2"/><rect x="818.71" y="857.24" width="1.27" height="2.36" fill="#c75f1a"/><rect x="821.82" y="845.10" width="1.27" height="14.50" fill="#dcdde2"/><rect x="821.82" y="856.08" width="1.27" height="3.52" fill="#18a28f"/><rect x="824.93" y="845.10" width="1.27" height="14.50" fill="#dcdde2"/><rect x="824.93" y="854.92" width="1.27" height="4.68" fill="#a01fc0"/><rect x="828.04" y="845.10" width="1.27" height="14.50" fill="#dcdde2"/><rect x="828.04" y="853.76" width="1.27" height="5.84" fill="#e53f98"/><rect x="831.15" y="845.10" width="1.27" height="14.50" fill="#dcdde2"/><rect x="831.15" y="852.60" width="1.27" height="7.00" fill="#4514bd"/><rect x="834.26" y="845.10" width="1.27" height="14.50" fill="#dcdde2"/><rect x="834.26" y="851.44" width="1.27" height="8.16" fill="#e8701f"/><rect x="837.37" y="845.10" width="1.27" height="14.50" fill="#dcdde2"/><rect x="837.37" y="850.28" width="1.27" height="9.32" fill="#0e5d55"/><rect x="840.48" y="845.10" width="1.27" height="14.50" fill="#dcdde2"/><rect x="840.48" y="849.12" width="1.27" height="10.48" fill="#b20f50"/><rect x="843.59" y="845.10" width="1.27" height="14.50" fill="#dcdde2"/><rect x="843.59" y="847.96" width="1.27" height="11.64" fill="#cc45ee"/><rect x="846.70" y="845.10" width="1.27" height="14.50" fill="#dcdde2"/><rect x="846.70" y="846.80" width="1.27" height="12.80" fill="#cc5c12"/><rect x="856.30" y="845.10" width="1.16" height="14.50" fill="#dcdde2"/><rect x="856.30" y="858.40" width="1.16" height="1.20" fill="#a48af7"/><rect x="859.13" y="845.10" width="1.16" height="14.50" fill="#dcdde2"/><rect x="859.13" y="857.24" width="1.16" height="2.36" fill="#c75f1a"/><rect x="861.95" y="845.10" width="1.16" height="14.50" fill="#dcdde2"/><rect x="861.95" y="856.08" width="1.16" height="3.52" fill="#18a28f"/><rect x="864.78" y="845.10" width="1.16" height="14.50" fill="#dcdde2"/><rect x="864.78" y="854.92" width="1.16" height="4.68" fill="#a01fc0"/><rect x="867.61" y="845.10" width="1.16" height="14.50" fill="#dcdde2"/><rect x="867.61" y="853.76" width="1.16" height="5.84" fill="#e53f98"/><rect x="870.44" y="845.10" width="1.16" height="14.50" fill="#dcdde2"/><rect x="870.44" y="852.60" width="1.16" height="7.00" fill="#4514bd"/><rect x="873.26" y="845.10" width="1.16" height="14.50" fill="#dcdde2"/><rect x="873.26" y="851.44" width="1.16" height="8.16" fill="#e8701f"/><rect x="876.09" y="845.10" width="1.16" height="14.50" fill="#dcdde2"/><rect x="876.09" y="850.28" width="1.16" height="9.32" fill="#0e5d55"/><rect x="878.92" y="845.10" width="1.16" height="14.50" fill="#dcdde2"/><rect x="878.92" y="849.12" width="1.16" height="10.48" fill="#b20f50"/><rect x="881.75" y="845.10" width="1.16" height="14.50" fill="#dcdde2"/><rect x="881.75" y="847.96" width="1.16" height="11.64" fill="#cc45ee"/><rect x="884.57" y="845.10" width="1.16" height="14.50" fill="#dcdde2"/><rect x="884.57" y="846.80" width="1.16" height="12.80" fill="#cc5c12"/><rect x="887.40" y="845.10" width="1.16" height="14.50" fill="#dcdde2"/><rect x="887.40" y="845.64" width="1.16" height="13.96" fill="#15897c"/><rect x="575.30" y="883.80" width="1.40" height="1.20" fill="#a48af7"/><rect x="578.72" y="882.64" width="1.40" height="2.36" fill="#c75f1a"/><rect x="588.32" y="883.80" width="1.40" height="1.20" fill="#a48af7"/><rect x="591.74" y="882.64" width="1.40" height="2.36" fill="#c75f1a"/><rect x="595.16" y="881.48" width="1.40" height="3.52" fill="#18a28f"/><rect x="604.76" y="883.80" width="1.40" height="1.20" fill="#a48af7"/><rect x="608.18" y="882.64" width="1.40" height="2.36" fill="#c75f1a"/><rect x="611.60" y="881.48" width="1.40" height="3.52" fill="#18a28f"/><rect x="615.02" y="880.32" width="1.40" height="4.68" fill="#a01fc0"/><rect x="624.62" y="883.80" width="1.40" height="1.20" fill="#a48af7"/><rect x="628.04" y="882.64" width="1.40" height="2.36" fill="#c75f1a"/><rect x="631.46" y="881.48" width="1.40" height="3.52" fill="#18a28f"/><rect x="634.88" y="880.32" width="1.40" height="4.68" fill="#a01fc0"/><rect x="638.30" y="879.16" width="1.40" height="5.84" fill="#e53f98"/><rect x="647.90" y="883.80" width="1.40" height="1.20" fill="#a48af7"/><rect x="651.32" y="882.64" width="1.40" height="2.36" fill="#c75f1a"/><rect x="654.74" y="881.48" width="1.40" height="3.52" fill="#18a28f"/><rect x="658.16" y="880.32" width="1.40" height="4.68" fill="#a01fc0"/><rect x="661.58" y="879.16" width="1.40" height="5.84" fill="#e53f98"/><rect x="665.00" y="878.00" width="1.40" height="7.00" fill="#4514bd"/><rect x="674.60" y="883.80" width="1.40" height="1.20" fill="#a48af7"/><rect x="678.02" y="882.64" width="1.40" height="2.36" fill="#c75f1a"/><rect x="681.44" y="881.48" width="1.40" height="3.52" fill="#18a28f"/><rect x="684.86" y="880.32" width="1.40" height="4.68" fill="#a01fc0"/><rect x="688.28" y="879.16" width="1.40" height="5.84" fill="#e53f98"/><rect x="691.70" y="878.00" width="1.40" height="7.00" fill="#4514bd"/><rect x="695.12" y="876.84" width="1.40" height="8.16" fill="#e8701f"/><rect x="704.72" y="883.80" width="1.40" height="1.20" fill="#a48af7"/><rect x="708.14" y="882.64" width="1.40" height="2.36" fill="#c75f1a"/><rect x="711.56" y="881.48" width="1.40" height="3.52" fill="#18a28f"/><rect x="714.98" y="880.32" width="1.40" height="4.68" fill="#a01fc0"/><rect x="718.40" y="879.16" width="1.40" height="5.84" fill="#e53f98"/><rect x="721.82" y="878.00" width="1.40" height="7.00" fill="#4514bd"/><rect x="725.24" y="876.84" width="1.40" height="8.16" fill="#e8701f"/><rect x="728.66" y="875.68" width="1.40" height="9.32" fill="#0e5d55"/><rect x="738.26" y="883.80" width="1.40" height="1.20" fill="#a48af7"/><rect x="741.68" y="882.64" width="1.40" height="2.36" fill="#c75f1a"/><rect x="745.10" y="881.48" width="1.40" height="3.52" fill="#18a28f"/><rect x="748.52" y="880.32" width="1.40" height="4.68" fill="#a01fc0"/><rect x="751.94" y="879.16" width="1.40" height="5.84" fill="#e53f98"/><rect x="755.36" y="878.00" width="1.40" height="7.00" fill="#4514bd"/><rect x="758.78" y="876.84" width="1.40" height="8.16" fill="#e8701f"/><rect x="762.20" y="875.68" width="1.40" height="9.32" fill="#0e5d55"/><rect x="765.62" y="874.52" width="1.40" height="10.48" fill="#b20f50"/><rect x="775.22" y="883.80" width="1.40" height="1.20" fill="#a48af7"/><rect x="778.64" y="882.64" width="1.40" height="2.36" fill="#c75f1a"/><rect x="782.06" y="881.48" width="1.40" height="3.52" fill="#18a28f"/><rect x="785.48" y="880.32" width="1.40" height="4.68" fill="#a01fc0"/><rect x="788.90" y="879.16" width="1.40" height="5.84" fill="#e53f98"/><rect x="792.32" y="878.00" width="1.40" height="7.00" fill="#4514bd"/><rect x="795.74" y="876.84" width="1.40" height="8.16" fill="#e8701f"/><rect x="799.16" y="875.68" width="1.40" height="9.32" fill="#0e5d55"/><rect x="802.58" y="874.52" width="1.40" height="10.48" fill="#b20f50"/><rect x="806.00" y="873.36" width="1.40" height="11.64" fill="#cc45ee"/><rect x="815.60" y="883.80" width="1.27" height="1.20" fill="#a48af7"/><rect x="818.71" y="882.64" width="1.27" height="2.36" fill="#c75f1a"/><rect x="821.82" y="881.48" width="1.27" height="3.52" fill="#18a28f"/><rect x="824.93" y="880.32" width="1.27" height="4.68" fill="#a01fc0"/><rect x="828.04" y="879.16" width="1.27" height="5.84" fill="#e53f98"/><rect x="831.15" y="878.00" width="1.27" height="7.00" fill="#4514bd"/><rect x="834.26" y="876.84" width="1.27" height="8.16" fill="#e8701f"/><rect x="837.37" y="875.68" width="1.27" height="9.32" fill="#0e5d55"/><rect x="840.48" y="874.52" width="1.27" height="10.48" fill="#b20f50"/><rect x="843.59" y="873.36" width="1.27" height="11.64" fill="#cc45ee"/><rect x="846.70" y="872.20" width="1.27" height="12.80" fill="#cc5c12"/><rect x="856.30" y="883.80" width="1.16" height="1.20" fill="#a48af7"/><rect x="859.13" y="882.64" width="1.16" height="2.36" fill="#c75f1a"/><rect x="861.95" y="881.48" width="1.16" height="3.52" fill="#18a28f"/><rect x="864.78" y="880.32" width="1.16" height="4.68" fill="#a01fc0"/><rect x="867.61" y="879.16" width="1.16" height="5.84" fill="#e53f98"/><rect x="870.44" y="878.00" width="1.16" height="7.00" fill="#4514bd"/><rect x="873.26" y="876.84" width="1.16" height="8.16" fill="#e8701f"/><rect x="876.09" y="875.68" width="1.16" height="9.32" fill="#0e5d55"/><rect x="878.92" y="874.52" width="1.16" height="10.48" fill="#b20f50"/><rect x="881.75" y="873.36" width="1.16" height="11.64" fill="#cc45ee"/><rect x="884.57" y="872.20" width="1.16" height="12.80" fill="#cc5c12"/><rect x="887.40" y="871.04" width="1.16" height="13.96" fill="#15897c"/><rect x="897.00" y="883.80" width="1.19" height="1.20" fill="#a48af7"/><rect x="899.91" y="882.64" width="1.19" height="2.36" fill="#c75f1a"/><rect x="902.81" y="881.48" width="1.19" height="3.52" fill="#18a28f"/><rect x="905.72" y="880.32" width="1.19" height="4.68" fill="#a01fc0"/><rect x="908.62" y="879.16" width="1.19" height="5.84" fill="#e53f98"/><rect x="911.53" y="878.00" width="1.19" height="7.00" fill="#4514bd"/><rect x="914.43" y="876.84" width="1.19" height="8.16" fill="#e8701f"/><rect x="917.34" y="875.68" width="1.19" height="9.32" fill="#0e5d55"/><rect x="920.24" y="874.52" width="1.19" height="10.48" fill="#b20f50"/><rect x="923.15" y="873.36" width="1.19" height="11.64" fill="#cc45ee"/><rect x="926.05" y="872.20" width="1.19" height="12.80" fill="#cc5c12"/><rect x="928.96" y="871.04" width="1.19" height="13.96" fill="#15897c"/><rect x="931.86" y="875.50" width="1.19" height="9.50" fill="#15897c"/><rect x="934.77" y="881.00" width="1.19" height="4.00" fill="#4514bd"/><rect x="937.67" y="879.50" width="1.19" height="5.50" fill="#e53f98"/><rect x="940.58" y="872.50" width="1.19" height="12.50" fill="#cc45ee"/><rect x="943.48" y="881.00" width="1.19" height="4.00" fill="#7b52f0"/><rect x="946.39" y="876.50" width="1.19" height="8.50" fill="#7b52f0"/><rect x="949.29" y="876.50" width="1.19" height="8.50" fill="#7b52f0"/><rect x="952.20" y="874.00" width="1.19" height="11.00" fill="#7b52f0"/><rect x="575.30" y="893.50" width="1.40" height="14.50" fill="#dcdde2"/><rect x="575.30" y="906.80" width="1.40" height="1.20" fill="#a48af7"/><rect x="578.72" y="893.50" width="1.40" height="14.50" fill="#dcdde2"/><rect x="578.72" y="905.64" width="1.40" height="2.36" fill="#c75f1a"/><rect x="588.32" y="893.50" width="1.40" height="14.50" fill="#dcdde2"/><rect x="588.32" y="906.80" width="1.40" height="1.20" fill="#a48af7"/><rect x="591.74" y="893.50" width="1.40" height="14.50" fill="#dcdde2"/><rect x="591.74" y="905.64" width="1.40" height="2.36" fill="#c75f1a"/><rect x="595.16" y="893.50" width="1.40" height="14.50" fill="#dcdde2"/><rect x="595.16" y="904.48" width="1.40" height="3.52" fill="#18a28f"/><rect x="604.76" y="893.50" width="1.40" height="14.50" fill="#dcdde2"/><rect x="604.76" y="906.80" width="1.40" height="1.20" fill="#a48af7"/><rect x="608.18" y="893.50" width="1.40" height="14.50" fill="#dcdde2"/><rect x="608.18" y="905.64" width="1.40" height="2.36" fill="#c75f1a"/><rect x="611.60" y="893.50" width="1.40" height="14.50" fill="#dcdde2"/><rect x="611.60" y="904.48" width="1.40" height="3.52" fill="#18a28f"/><rect x="615.02" y="893.50" width="1.40" height="14.50" fill="#dcdde2"/><rect x="615.02" y="903.32" width="1.40" height="4.68" fill="#a01fc0"/><rect x="624.62" y="893.50" width="1.40" height="14.50" fill="#dcdde2"/><rect x="624.62" y="906.80" width="1.40" height="1.20" fill="#a48af7"/><rect x="628.04" y="893.50" width="1.40" height="14.50" fill="#dcdde2"/><rect x="628.04" y="905.64" width="1.40" height="2.36" fill="#c75f1a"/><rect x="631.46" y="893.50" width="1.40" height="14.50" fill="#dcdde2"/><rect x="631.46" y="904.48" width="1.40" height="3.52" fill="#18a28f"/><rect x="634.88" y="893.50" width="1.40" height="14.50" fill="#dcdde2"/><rect x="634.88" y="903.32" width="1.40" height="4.68" fill="#a01fc0"/><rect x="638.30" y="893.50" width="1.40" height="14.50" fill="#dcdde2"/><rect x="638.30" y="902.16" width="1.40" height="5.84" fill="#e53f98"/><rect x="647.90" y="893.50" width="1.40" height="14.50" fill="#dcdde2"/><rect x="647.90" y="906.80" width="1.40" height="1.20" fill="#a48af7"/><rect x="651.32" y="893.50" width="1.40" height="14.50" fill="#dcdde2"/><rect x="651.32" y="905.64" width="1.40" height="2.36" fill="#c75f1a"/><rect x="654.74" y="893.50" width="1.40" height="14.50" fill="#dcdde2"/><rect x="654.74" y="904.48" width="1.40" height="3.52" fill="#18a28f"/><rect x="658.16" y="893.50" width="1.40" height="14.50" fill="#dcdde2"/><rect x="658.16" y="903.32" width="1.40" height="4.68" fill="#a01fc0"/><rect x="661.58" y="893.50" width="1.40" height="14.50" fill="#dcdde2"/><rect x="661.58" y="902.16" width="1.40" height="5.84" fill="#e53f98"/><rect x="665.00" y="893.50" width="1.40" height="14.50" fill="#dcdde2"/><rect x="665.00" y="901.00" width="1.40" height="7.00" fill="#4514bd"/><rect x="674.60" y="893.50" width="1.40" height="14.50" fill="#dcdde2"/><rect x="674.60" y="906.80" width="1.40" height="1.20" fill="#a48af7"/><rect x="678.02" y="893.50" width="1.40" height="14.50" fill="#dcdde2"/><rect x="678.02" y="905.64" width="1.40" height="2.36" fill="#c75f1a"/><rect x="681.44" y="893.50" width="1.40" height="14.50" fill="#dcdde2"/><rect x="681.44" y="904.48" width="1.40" height="3.52" fill="#18a28f"/><rect x="684.86" y="893.50" width="1.40" height="14.50" fill="#dcdde2"/><rect x="684.86" y="903.32" width="1.40" height="4.68" fill="#a01fc0"/><rect x="688.28" y="893.50" width="1.40" height="14.50" fill="#dcdde2"/><rect x="688.28" y="902.16" width="1.40" height="5.84" fill="#e53f98"/><rect x="691.70" y="893.50" width="1.40" height="14.50" fill="#dcdde2"/><rect x="691.70" y="901.00" width="1.40" height="7.00" fill="#4514bd"/><rect x="695.12" y="893.50" width="1.40" height="14.50" fill="#dcdde2"/><rect x="695.12" y="899.84" width="1.40" height="8.16" fill="#e8701f"/><rect x="704.72" y="893.50" width="1.40" height="14.50" fill="#dcdde2"/><rect x="704.72" y="906.80" width="1.40" height="1.20" fill="#a48af7"/><rect x="708.14" y="893.50" width="1.40" height="14.50" fill="#dcdde2"/><rect x="708.14" y="905.64" width="1.40" height="2.36" fill="#c75f1a"/><rect x="711.56" y="893.50" width="1.40" height="14.50" fill="#dcdde2"/><rect x="711.56" y="904.48" width="1.40" height="3.52" fill="#18a28f"/><rect x="714.98" y="893.50" width="1.40" height="14.50" fill="#dcdde2"/><rect x="714.98" y="903.32" width="1.40" height="4.68" fill="#a01fc0"/><rect x="718.40" y="893.50" width="1.40" height="14.50" fill="#dcdde2"/><rect x="718.40" y="902.16" width="1.40" height="5.84" fill="#e53f98"/><rect x="721.82" y="893.50" width="1.40" height="14.50" fill="#dcdde2"/><rect x="721.82" y="901.00" width="1.40" height="7.00" fill="#4514bd"/><rect x="725.24" y="893.50" width="1.40" height="14.50" fill="#dcdde2"/><rect x="725.24" y="899.84" width="1.40" height="8.16" fill="#e8701f"/><rect x="728.66" y="893.50" width="1.40" height="14.50" fill="#dcdde2"/><rect x="728.66" y="898.68" width="1.40" height="9.32" fill="#0e5d55"/><rect x="738.26" y="893.50" width="1.40" height="14.50" fill="#dcdde2"/><rect x="738.26" y="906.80" width="1.40" height="1.20" fill="#a48af7"/><rect x="741.68" y="893.50" width="1.40" height="14.50" fill="#dcdde2"/><rect x="741.68" y="905.64" width="1.40" height="2.36" fill="#c75f1a"/><rect x="745.10" y="893.50" width="1.40" height="14.50" fill="#dcdde2"/><rect x="745.10" y="904.48" width="1.40" height="3.52" fill="#18a28f"/><rect x="748.52" y="893.50" width="1.40" height="14.50" fill="#dcdde2"/><rect x="748.52" y="903.32" width="1.40" height="4.68" fill="#a01fc0"/><rect x="751.94" y="893.50" width="1.40" height="14.50" fill="#dcdde2"/><rect x="751.94" y="902.16" width="1.40" height="5.84" fill="#e53f98"/><rect x="755.36" y="893.50" width="1.40" height="14.50" fill="#dcdde2"/><rect x="755.36" y="901.00" width="1.40" height="7.00" fill="#4514bd"/><rect x="758.78" y="893.50" width="1.40" height="14.50" fill="#dcdde2"/><rect x="758.78" y="899.84" width="1.40" height="8.16" fill="#e8701f"/><rect x="762.20" y="893.50" width="1.40" height="14.50" fill="#dcdde2"/><rect x="762.20" y="898.68" width="1.40" height="9.32" fill="#0e5d55"/><rect x="765.62" y="893.50" width="1.40" height="14.50" fill="#dcdde2"/><rect x="765.62" y="897.52" width="1.40" height="10.48" fill="#b20f50"/><rect x="775.22" y="893.50" width="1.40" height="14.50" fill="#dcdde2"/><rect x="775.22" y="906.80" width="1.40" height="1.20" fill="#a48af7"/><rect x="778.64" y="893.50" width="1.40" height="14.50" fill="#dcdde2"/><rect x="778.64" y="905.64" width="1.40" height="2.36" fill="#c75f1a"/><rect x="782.06" y="893.50" width="1.40" height="14.50" fill="#dcdde2"/><rect x="782.06" y="904.48" width="1.40" height="3.52" fill="#18a28f"/><rect x="785.48" y="893.50" width="1.40" height="14.50" fill="#dcdde2"/><rect x="785.48" y="903.32" width="1.40" height="4.68" fill="#a01fc0"/><rect x="788.90" y="893.50" width="1.40" height="14.50" fill="#dcdde2"/><rect x="788.90" y="902.16" width="1.40" height="5.84" fill="#e53f98"/><rect x="792.32" y="893.50" width="1.40" height="14.50" fill="#dcdde2"/><rect x="792.32" y="901.00" width="1.40" height="7.00" fill="#4514bd"/><rect x="795.74" y="893.50" width="1.40" height="14.50" fill="#dcdde2"/><rect x="795.74" y="899.84" width="1.40" height="8.16" fill="#e8701f"/><rect x="799.16" y="893.50" width="1.40" height="14.50" fill="#dcdde2"/><rect x="799.16" y="898.68" width="1.40" height="9.32" fill="#0e5d55"/><rect x="802.58" y="893.50" width="1.40" height="14.50" fill="#dcdde2"/><rect x="802.58" y="897.52" width="1.40" height="10.48" fill="#b20f50"/><rect x="806.00" y="893.50" width="1.40" height="14.50" fill="#dcdde2"/><rect x="806.00" y="896.36" width="1.40" height="11.64" fill="#cc45ee"/><rect x="815.60" y="893.50" width="1.27" height="14.50" fill="#dcdde2"/><rect x="815.60" y="906.80" width="1.27" height="1.20" fill="#a48af7"/><rect x="818.71" y="893.50" width="1.27" height="14.50" fill="#dcdde2"/><rect x="818.71" y="905.64" width="1.27" height="2.36" fill="#c75f1a"/><rect x="821.82" y="893.50" width="1.27" height="14.50" fill="#dcdde2"/><rect x="821.82" y="904.48" width="1.27" height="3.52" fill="#18a28f"/><rect x="824.93" y="893.50" width="1.27" height="14.50" fill="#dcdde2"/><rect x="824.93" y="903.32" width="1.27" height="4.68" fill="#a01fc0"/><rect x="828.04" y="893.50" width="1.27" height="14.50" fill="#dcdde2"/><rect x="828.04" y="902.16" width="1.27" height="5.84" fill="#e53f98"/><rect x="831.15" y="893.50" width="1.27" height="14.50" fill="#dcdde2"/><rect x="831.15" y="901.00" width="1.27" height="7.00" fill="#4514bd"/><rect x="834.26" y="893.50" width="1.27" height="14.50" fill="#dcdde2"/><rect x="834.26" y="899.84" width="1.27" height="8.16" fill="#e8701f"/><rect x="837.37" y="893.50" width="1.27" height="14.50" fill="#dcdde2"/><rect x="837.37" y="898.68" width="1.27" height="9.32" fill="#0e5d55"/><rect x="840.48" y="893.50" width="1.27" height="14.50" fill="#dcdde2"/><rect x="840.48" y="897.52" width="1.27" height="10.48" fill="#b20f50"/><rect x="843.59" y="893.50" width="1.27" height="14.50" fill="#dcdde2"/><rect x="843.59" y="896.36" width="1.27" height="11.64" fill="#cc45ee"/><rect x="846.70" y="893.50" width="1.27" height="14.50" fill="#dcdde2"/><rect x="846.70" y="895.20" width="1.27" height="12.80" fill="#cc5c12"/><rect x="856.30" y="893.50" width="1.16" height="14.50" fill="#dcdde2"/><rect x="856.30" y="906.80" width="1.16" height="1.20" fill="#a48af7"/><rect x="859.13" y="893.50" width="1.16" height="14.50" fill="#dcdde2"/><rect x="859.13" y="905.64" width="1.16" height="2.36" fill="#c75f1a"/><rect x="861.95" y="893.50" width="1.16" height="14.50" fill="#dcdde2"/><rect x="861.95" y="904.48" width="1.16" height="3.52" fill="#18a28f"/><rect x="864.78" y="893.50" width="1.16" height="14.50" fill="#dcdde2"/><rect x="864.78" y="903.32" width="1.16" height="4.68" fill="#a01fc0"/><rect x="867.61" y="893.50" width="1.16" height="14.50" fill="#dcdde2"/><rect x="867.61" y="902.16" width="1.16" height="5.84" fill="#e53f98"/><rect x="870.44" y="893.50" width="1.16" height="14.50" fill="#dcdde2"/><rect x="870.44" y="901.00" width="1.16" height="7.00" fill="#4514bd"/><rect x="873.26" y="893.50" width="1.16" height="14.50" fill="#dcdde2"/><rect x="873.26" y="899.84" width="1.16" height="8.16" fill="#e8701f"/><rect x="876.09" y="893.50" width="1.16" height="14.50" fill="#dcdde2"/><rect x="876.09" y="898.68" width="1.16" height="9.32" fill="#0e5d55"/><rect x="878.92" y="893.50" width="1.16" height="14.50" fill="#dcdde2"/><rect x="878.92" y="897.52" width="1.16" height="10.48" fill="#b20f50"/><rect x="881.75" y="893.50" width="1.16" height="14.50" fill="#dcdde2"/><rect x="881.75" y="896.36" width="1.16" height="11.64" fill="#cc45ee"/><rect x="884.57" y="893.50" width="1.16" height="14.50" fill="#dcdde2"/><rect x="884.57" y="895.20" width="1.16" height="12.80" fill="#cc5c12"/><rect x="887.40" y="893.50" width="1.16" height="14.50" fill="#dcdde2"/><rect x="887.40" y="894.04" width="1.16" height="13.96" fill="#15897c"/><rect x="897.00" y="893.50" width="1.19" height="14.50" fill="#dcdde2"/><rect x="897.00" y="906.80" width="1.19" height="1.20" fill="#a48af7"/><rect x="899.91" y="893.50" width="1.19" height="14.50" fill="#dcdde2"/><rect x="899.91" y="905.64" width="1.19" height="2.36" fill="#c75f1a"/><rect x="902.81" y="893.50" width="1.19" height="14.50" fill="#dcdde2"/><rect x="902.81" y="904.48" width="1.19" height="3.52" fill="#18a28f"/><rect x="905.72" y="893.50" width="1.19" height="14.50" fill="#dcdde2"/><rect x="905.72" y="903.32" width="1.19" height="4.68" fill="#a01fc0"/><rect x="908.62" y="893.50" width="1.19" height="14.50" fill="#dcdde2"/><rect x="908.62" y="902.16" width="1.19" height="5.84" fill="#e53f98"/><rect x="911.53" y="893.50" width="1.19" height="14.50" fill="#dcdde2"/><rect x="911.53" y="901.00" width="1.19" height="7.00" fill="#4514bd"/><rect x="914.43" y="893.50" width="1.19" height="14.50" fill="#dcdde2"/><rect x="914.43" y="899.84" width="1.19" height="8.16" fill="#e8701f"/><rect x="917.34" y="893.50" width="1.19" height="14.50" fill="#dcdde2"/><rect x="917.34" y="898.68" width="1.19" height="9.32" fill="#0e5d55"/><rect x="920.24" y="893.50" width="1.19" height="14.50" fill="#dcdde2"/><rect x="920.24" y="897.52" width="1.19" height="10.48" fill="#b20f50"/><rect x="923.15" y="893.50" width="1.19" height="14.50" fill="#dcdde2"/><rect x="923.15" y="896.36" width="1.19" height="11.64" fill="#cc45ee"/><rect x="926.05" y="893.50" width="1.19" height="14.50" fill="#dcdde2"/><rect x="926.05" y="895.20" width="1.19" height="12.80" fill="#cc5c12"/><rect x="928.96" y="893.50" width="1.19" height="14.50" fill="#dcdde2"/><rect x="928.96" y="894.04" width="1.19" height="13.96" fill="#15897c"/><rect x="931.86" y="893.50" width="1.19" height="14.50" fill="#dcdde2"/><rect x="931.86" y="898.50" width="1.19" height="9.50" fill="#15897c"/><rect x="934.77" y="893.50" width="1.19" height="14.50" fill="#dcdde2"/><rect x="934.77" y="904.00" width="1.19" height="4.00" fill="#4514bd"/><rect x="937.67" y="893.50" width="1.19" height="14.50" fill="#dcdde2"/><rect x="937.67" y="902.50" width="1.19" height="5.50" fill="#e53f98"/><rect x="940.58" y="893.50" width="1.19" height="14.50" fill="#dcdde2"/><rect x="940.58" y="895.50" width="1.19" height="12.50" fill="#cc45ee"/><rect x="943.48" y="893.50" width="1.19" height="14.50" fill="#dcdde2"/><rect x="943.48" y="904.00" width="1.19" height="4.00" fill="#7b52f0"/><rect x="946.39" y="893.50" width="1.19" height="14.50" fill="#dcdde2"/><rect x="946.39" y="899.50" width="1.19" height="8.50" fill="#7b52f0"/><rect x="949.29" y="893.50" width="1.19" height="14.50" fill="#dcdde2"/><rect x="949.29" y="899.50" width="1.19" height="8.50" fill="#7b52f0"/><rect x="952.20" y="893.50" width="1.19" height="14.50" fill="#dcdde2"/><rect x="952.20" y="897.00" width="1.19" height="11.00" fill="#7b52f0"/><rect x="961.80" y="893.50" width="0.98" height="14.50" fill="#dcdde2"/><rect x="961.80" y="906.80" width="0.98" height="1.20" fill="#a48af7"/><rect x="964.20" y="893.50" width="0.98" height="14.50" fill="#dcdde2"/><rect x="964.20" y="905.64" width="0.98" height="2.36" fill="#c75f1a"/><rect x="966.60" y="893.50" width="0.98" height="14.50" fill="#dcdde2"/><rect x="966.60" y="904.48" width="0.98" height="3.52" fill="#18a28f"/><rect x="969.00" y="893.50" width="0.98" height="14.50" fill="#dcdde2"/><rect x="969.00" y="903.32" width="0.98" height="4.68" fill="#a01fc0"/><rect x="971.40" y="893.50" width="0.98" height="14.50" fill="#dcdde2"/><rect x="971.40" y="902.16" width="0.98" height="5.84" fill="#e53f98"/><rect x="973.80" y="893.50" width="0.98" height="14.50" fill="#dcdde2"/><rect x="973.80" y="901.00" width="0.98" height="7.00" fill="#4514bd"/><rect x="976.20" y="893.50" width="0.98" height="14.50" fill="#dcdde2"/><rect x="976.20" y="899.84" width="0.98" height="8.16" fill="#e8701f"/><rect x="978.60" y="893.50" width="0.98" height="14.50" fill="#dcdde2"/><rect x="978.60" y="898.68" width="0.98" height="9.32" fill="#0e5d55"/><rect x="981.00" y="893.50" width="0.98" height="14.50" fill="#dcdde2"/><rect x="981.00" y="897.52" width="0.98" height="10.48" fill="#b20f50"/><rect x="983.40" y="893.50" width="0.98" height="14.50" fill="#dcdde2"/><rect x="983.40" y="896.36" width="0.98" height="11.64" fill="#cc45ee"/><rect x="985.80" y="893.50" width="0.98" height="14.50" fill="#dcdde2"/><rect x="985.80" y="895.20" width="0.98" height="12.80" fill="#cc5c12"/><rect x="988.20" y="893.50" width="0.98" height="14.50" fill="#dcdde2"/><rect x="988.20" y="894.04" width="0.98" height="13.96" fill="#15897c"/><rect x="990.60" y="893.50" width="0.98" height="14.50" fill="#dcdde2"/><rect x="990.60" y="898.50" width="0.98" height="9.50" fill="#15897c"/><rect x="993.00" y="893.50" width="0.98" height="14.50" fill="#dcdde2"/><rect x="993.00" y="904.00" width="0.98" height="4.00" fill="#4514bd"/><rect x="995.40" y="893.50" width="0.98" height="14.50" fill="#dcdde2"/><rect x="995.40" y="902.50" width="0.98" height="5.50" fill="#e53f98"/><rect x="997.80" y="893.50" width="0.98" height="14.50" fill="#dcdde2"/><rect x="997.80" y="895.50" width="0.98" height="12.50" fill="#cc45ee"/><rect x="1000.20" y="893.50" width="0.98" height="14.50" fill="#dcdde2"/><rect x="1000.20" y="904.00" width="0.98" height="4.00" fill="#7b52f0"/><rect x="1002.60" y="893.50" width="0.98" height="14.50" fill="#dcdde2"/><rect x="1002.60" y="899.50" width="0.98" height="8.50" fill="#7b52f0"/><rect x="1005.00" y="893.50" width="0.98" height="14.50" fill="#dcdde2"/><rect x="1005.00" y="899.50" width="0.98" height="8.50" fill="#7b52f0"/><rect x="1007.40" y="893.50" width="0.98" height="14.50" fill="#dcdde2"/><rect x="1007.40" y="897.00" width="0.98" height="11.00" fill="#7b52f0"/><rect x="1009.80" y="893.50" width="0.98" height="14.50" fill="#dcdde2"/><rect x="1009.80" y="904.00" width="0.98" height="4.00" fill="#7b52f0"/><rect x="1012.20" y="893.50" width="0.98" height="14.50" fill="#dcdde2"/><rect x="1012.20" y="901.00" width="0.98" height="7.00" fill="#7b52f0"/><rect x="1014.60" y="893.50" width="0.98" height="14.50" fill="#dcdde2"/><rect x="1014.60" y="902.50" width="0.98" height="5.50" fill="#7b52f0"/><rect x="1017.00" y="893.50" width="0.98" height="14.50" fill="#dcdde2"/><rect x="1017.00" y="905.00" width="0.98" height="3.00" fill="#7b52f0"/><rect x="575.30" y="930.20" width="4.30" height="1.20" fill="#a48af7"/><rect x="580.75" y="929.04" width="4.30" height="2.36" fill="#c75f1a"/><rect x="586.20" y="927.88" width="4.30" height="3.52" fill="#18a28f"/><rect x="597.00" y="930.20" width="4.30" height="1.20" fill="#a48af7"/><rect x="602.45" y="929.04" width="4.30" height="2.36" fill="#c75f1a"/><rect x="607.90" y="927.88" width="4.30" height="3.52" fill="#18a28f"/><rect x="613.35" y="926.72" width="4.30" height="4.68" fill="#a01fc0"/><rect x="624.15" y="930.20" width="4.30" height="1.20" fill="#a48af7"/><rect x="629.60" y="929.04" width="4.30" height="2.36" fill="#c75f1a"/><rect x="640.40" y="930.20" width="4.30" height="1.20" fill="#a48af7"/><rect x="645.85" y="929.04" width="4.30" height="2.36" fill="#c75f1a"/><rect x="651.30" y="927.88" width="4.30" height="3.52" fill="#18a28f"/><rect x="656.75" y="926.72" width="4.30" height="4.68" fill="#a01fc0"/><rect x="662.20" y="925.56" width="4.30" height="5.84" fill="#e53f98"/><rect x="673.00" y="930.20" width="4.30" height="1.20" fill="#a48af7"/><rect x="678.45" y="929.04" width="4.30" height="2.36" fill="#c75f1a"/><rect x="683.90" y="927.88" width="4.30" height="3.52" fill="#18a28f"/><rect x="689.35" y="926.72" width="4.30" height="4.68" fill="#a01fc0"/><rect x="694.80" y="925.56" width="4.30" height="5.84" fill="#e53f98"/><rect x="700.25" y="924.40" width="4.30" height="7.00" fill="#4514bd"/><rect x="711.05" y="930.20" width="4.30" height="1.20" fill="#a48af7"/><rect x="716.50" y="929.04" width="4.30" height="2.36" fill="#c75f1a"/><rect x="721.95" y="927.88" width="4.30" height="3.52" fill="#18a28f"/><rect x="727.40" y="926.72" width="4.30" height="4.68" fill="#a01fc0"/><rect x="732.85" y="925.56" width="4.30" height="5.84" fill="#e53f98"/><rect x="738.30" y="924.40" width="4.30" height="7.00" fill="#4514bd"/><rect x="743.75" y="923.24" width="4.30" height="8.16" fill="#e8701f"/><rect x="754.55" y="930.20" width="4.30" height="1.20" fill="#a48af7"/><rect x="760.00" y="929.04" width="4.30" height="2.36" fill="#c75f1a"/><rect x="765.45" y="927.88" width="4.30" height="3.52" fill="#18a28f"/><rect x="770.90" y="926.72" width="4.30" height="4.68" fill="#a01fc0"/><rect x="776.35" y="925.56" width="4.30" height="5.84" fill="#e53f98"/><rect x="781.80" y="924.40" width="4.30" height="7.00" fill="#4514bd"/><rect x="787.25" y="923.24" width="4.30" height="8.16" fill="#e8701f"/><rect x="792.70" y="922.08" width="4.30" height="9.32" fill="#0e5d55"/><rect x="803.50" y="930.20" width="4.30" height="1.20" fill="#a48af7"/><rect x="808.95" y="929.04" width="4.30" height="2.36" fill="#c75f1a"/><rect x="814.40" y="927.88" width="4.30" height="3.52" fill="#18a28f"/><rect x="819.85" y="926.72" width="4.30" height="4.68" fill="#a01fc0"/><rect x="825.30" y="925.56" width="4.30" height="5.84" fill="#e53f98"/><rect x="830.75" y="924.40" width="4.30" height="7.00" fill="#4514bd"/><rect x="836.20" y="923.24" width="4.30" height="8.16" fill="#e8701f"/><rect x="841.65" y="922.08" width="4.30" height="9.32" fill="#0e5d55"/><rect x="847.10" y="920.92" width="4.30" height="10.48" fill="#b20f50"/><rect x="857.90" y="930.20" width="4.30" height="1.20" fill="#a48af7"/><rect x="863.35" y="929.04" width="4.30" height="2.36" fill="#c75f1a"/><rect x="868.80" y="927.88" width="4.30" height="3.52" fill="#18a28f"/><rect x="874.25" y="926.72" width="4.30" height="4.68" fill="#a01fc0"/><rect x="879.70" y="925.56" width="4.30" height="5.84" fill="#e53f98"/><rect x="885.15" y="924.40" width="4.30" height="7.00" fill="#4514bd"/><rect x="890.60" y="923.24" width="4.30" height="8.16" fill="#e8701f"/><rect x="896.05" y="922.08" width="4.30" height="9.32" fill="#0e5d55"/><rect x="901.50" y="920.92" width="4.30" height="10.48" fill="#b20f50"/><rect x="906.95" y="919.76" width="4.30" height="11.64" fill="#cc45ee"/><rect x="917.75" y="930.20" width="3.94" height="1.20" fill="#a48af7"/><rect x="922.74" y="929.04" width="3.94" height="2.36" fill="#c75f1a"/><rect x="927.73" y="927.88" width="3.94" height="3.52" fill="#18a28f"/><rect x="932.72" y="926.72" width="3.94" height="4.68" fill="#a01fc0"/><rect x="937.71" y="925.56" width="3.94" height="5.84" fill="#e53f98"/><rect x="942.70" y="924.40" width="3.94" height="7.00" fill="#4514bd"/><rect x="947.69" y="923.24" width="3.94" height="8.16" fill="#e8701f"/><rect x="952.68" y="922.08" width="3.94" height="9.32" fill="#0e5d55"/><rect x="957.67" y="920.92" width="3.94" height="10.48" fill="#b20f50"/><rect x="962.66" y="919.76" width="3.94" height="11.64" fill="#cc45ee"/><rect x="967.65" y="918.60" width="3.94" height="12.80" fill="#cc5c12"/><rect x="978.45" y="930.20" width="3.58" height="1.20" fill="#a48af7"/><rect x="982.99" y="929.04" width="3.58" height="2.36" fill="#c75f1a"/><rect x="987.52" y="927.88" width="3.58" height="3.52" fill="#18a28f"/><rect x="992.06" y="926.72" width="3.58" height="4.68" fill="#a01fc0"/><rect x="996.60" y="925.56" width="3.58" height="5.84" fill="#e53f98"/><rect x="1001.13" y="924.40" width="3.58" height="7.00" fill="#4514bd"/><rect x="1005.67" y="923.24" width="3.58" height="8.16" fill="#e8701f"/><rect x="1010.20" y="922.08" width="3.58" height="9.32" fill="#0e5d55"/><rect x="1014.74" y="920.92" width="3.58" height="10.48" fill="#b20f50"/><rect x="1019.28" y="919.76" width="3.58" height="11.64" fill="#cc45ee"/><rect x="1023.81" y="918.60" width="3.58" height="12.80" fill="#cc5c12"/><rect x="1028.35" y="917.44" width="3.58" height="13.96" fill="#15897c"/><rect x="1039.15" y="930.20" width="4.18" height="1.20" fill="#a48af7"/><rect x="1044.45" y="929.04" width="4.18" height="2.36" fill="#c75f1a"/><rect x="1049.75" y="927.88" width="4.18" height="3.52" fill="#18a28f"/><rect x="1055.05" y="926.72" width="4.18" height="4.68" fill="#a01fc0"/><rect x="1060.35" y="925.56" width="4.18" height="5.84" fill="#e53f98"/><rect x="1065.65" y="924.40" width="4.18" height="7.00" fill="#4514bd"/><rect x="1070.95" y="923.24" width="4.18" height="8.16" fill="#e8701f"/><rect x="1076.25" y="922.08" width="4.18" height="9.32" fill="#0e5d55"/><rect x="1081.55" y="920.92" width="4.18" height="10.48" fill="#b20f50"/><rect x="1086.85" y="919.76" width="4.18" height="11.64" fill="#cc45ee"/><rect x="1092.15" y="918.60" width="4.18" height="12.80" fill="#cc5c12"/><rect x="1097.45" y="917.44" width="4.18" height="13.96" fill="#15897c"/><rect x="1102.75" y="921.90" width="4.18" height="9.50" fill="#15897c"/><rect x="1108.05" y="927.40" width="4.18" height="4.00" fill="#4514bd"/><rect x="1113.35" y="925.90" width="4.18" height="5.50" fill="#e53f98"/><rect x="1118.65" y="918.90" width="4.18" height="12.50" fill="#cc45ee"/><rect x="1123.95" y="927.40" width="4.18" height="4.00" fill="#7b52f0"/><rect x="1129.25" y="922.90" width="4.18" height="8.50" fill="#7b52f0"/><rect x="1134.55" y="922.90" width="4.18" height="8.50" fill="#7b52f0"/><rect x="1139.85" y="920.40" width="4.18" height="11.00" fill="#7b52f0"/><rect x="575.30" y="939.20" width="4.30" height="14.50" fill="#dcdde2"/><rect x="575.30" y="952.50" width="4.30" height="1.20" fill="#a48af7"/><rect x="580.75" y="939.20" width="4.30" height="14.50" fill="#dcdde2"/><rect x="580.75" y="951.34" width="4.30" height="2.36" fill="#c75f1a"/><rect x="591.55" y="939.20" width="4.30" height="14.50" fill="#dcdde2"/><rect x="591.55" y="952.50" width="4.30" height="1.20" fill="#a48af7"/><rect x="597.00" y="939.20" width="4.30" height="14.50" fill="#dcdde2"/><rect x="597.00" y="951.34" width="4.30" height="2.36" fill="#c75f1a"/><rect x="602.45" y="939.20" width="4.30" height="14.50" fill="#dcdde2"/><rect x="602.45" y="950.18" width="4.30" height="3.52" fill="#18a28f"/><rect x="613.25" y="939.20" width="4.30" height="14.50" fill="#dcdde2"/><rect x="613.25" y="952.50" width="4.30" height="1.20" fill="#a48af7"/><rect x="618.70" y="939.20" width="4.30" height="14.50" fill="#dcdde2"/><rect x="618.70" y="951.34" width="4.30" height="2.36" fill="#c75f1a"/><rect x="624.15" y="939.20" width="4.30" height="14.50" fill="#dcdde2"/><rect x="624.15" y="950.18" width="4.30" height="3.52" fill="#18a28f"/><rect x="629.60" y="939.20" width="4.30" height="14.50" fill="#dcdde2"/><rect x="629.60" y="949.02" width="4.30" height="4.68" fill="#a01fc0"/><rect x="640.40" y="939.20" width="4.30" height="14.50" fill="#dcdde2"/><rect x="640.40" y="952.50" width="4.30" height="1.20" fill="#a48af7"/><rect x="645.85" y="939.20" width="4.30" height="14.50" fill="#dcdde2"/><rect x="645.85" y="951.34" width="4.30" height="2.36" fill="#c75f1a"/><rect x="651.30" y="939.20" width="4.30" height="14.50" fill="#dcdde2"/><rect x="651.30" y="950.18" width="4.30" height="3.52" fill="#18a28f"/><rect x="656.75" y="939.20" width="4.30" height="14.50" fill="#dcdde2"/><rect x="656.75" y="949.02" width="4.30" height="4.68" fill="#a01fc0"/><rect x="662.20" y="939.20" width="4.30" height="14.50" fill="#dcdde2"/><rect x="662.20" y="947.86" width="4.30" height="5.84" fill="#e53f98"/><rect x="673.00" y="939.20" width="4.30" height="14.50" fill="#dcdde2"/><rect x="673.00" y="952.50" width="4.30" height="1.20" fill="#a48af7"/><rect x="678.45" y="939.20" width="4.30" height="14.50" fill="#dcdde2"/><rect x="678.45" y="951.34" width="4.30" height="2.36" fill="#c75f1a"/><rect x="683.90" y="939.20" width="4.30" height="14.50" fill="#dcdde2"/><rect x="683.90" y="950.18" width="4.30" height="3.52" fill="#18a28f"/><rect x="689.35" y="939.20" width="4.30" height="14.50" fill="#dcdde2"/><rect x="689.35" y="949.02" width="4.30" height="4.68" fill="#a01fc0"/><rect x="694.80" y="939.20" width="4.30" height="14.50" fill="#dcdde2"/><rect x="694.80" y="947.86" width="4.30" height="5.84" fill="#e53f98"/><rect x="700.25" y="939.20" width="4.30" height="14.50" fill="#dcdde2"/><rect x="700.25" y="946.70" width="4.30" height="7.00" fill="#4514bd"/><rect x="711.05" y="939.20" width="4.30" height="14.50" fill="#dcdde2"/><rect x="711.05" y="952.50" width="4.30" height="1.20" fill="#a48af7"/><rect x="716.50" y="939.20" width="4.30" height="14.50" fill="#dcdde2"/><rect x="716.50" y="951.34" width="4.30" height="2.36" fill="#c75f1a"/><rect x="721.95" y="939.20" width="4.30" height="14.50" fill="#dcdde2"/><rect x="721.95" y="950.18" width="4.30" height="3.52" fill="#18a28f"/><rect x="727.40" y="939.20" width="4.30" height="14.50" fill="#dcdde2"/><rect x="727.40" y="949.02" width="4.30" height="4.68" fill="#a01fc0"/><rect x="732.85" y="939.20" width="4.30" height="14.50" fill="#dcdde2"/><rect x="732.85" y="947.86" width="4.30" height="5.84" fill="#e53f98"/><rect x="738.30" y="939.20" width="4.30" height="14.50" fill="#dcdde2"/><rect x="738.30" y="946.70" width="4.30" height="7.00" fill="#4514bd"/><rect x="743.75" y="939.20" width="4.30" height="14.50" fill="#dcdde2"/><rect x="743.75" y="945.54" width="4.30" height="8.16" fill="#e8701f"/><rect x="754.55" y="939.20" width="4.30" height="14.50" fill="#dcdde2"/><rect x="754.55" y="952.50" width="4.30" height="1.20" fill="#a48af7"/><rect x="760.00" y="939.20" width="4.30" height="14.50" fill="#dcdde2"/><rect x="760.00" y="951.34" width="4.30" height="2.36" fill="#c75f1a"/><rect x="765.45" y="939.20" width="4.30" height="14.50" fill="#dcdde2"/><rect x="765.45" y="950.18" width="4.30" height="3.52" fill="#18a28f"/><rect x="770.90" y="939.20" width="4.30" height="14.50" fill="#dcdde2"/><rect x="770.90" y="949.02" width="4.30" height="4.68" fill="#a01fc0"/><rect x="776.35" y="939.20" width="4.30" height="14.50" fill="#dcdde2"/><rect x="776.35" y="947.86" width="4.30" height="5.84" fill="#e53f98"/><rect x="781.80" y="939.20" width="4.30" height="14.50" fill="#dcdde2"/><rect x="781.80" y="946.70" width="4.30" height="7.00" fill="#4514bd"/><rect x="787.25" y="939.20" width="4.30" height="14.50" fill="#dcdde2"/><rect x="787.25" y="945.54" width="4.30" height="8.16" fill="#e8701f"/><rect x="792.70" y="939.20" width="4.30" height="14.50" fill="#dcdde2"/><rect x="792.70" y="944.38" width="4.30" height="9.32" fill="#0e5d55"/><rect x="803.50" y="939.20" width="4.30" height="14.50" fill="#dcdde2"/><rect x="803.50" y="952.50" width="4.30" height="1.20" fill="#a48af7"/><rect x="808.95" y="939.20" width="4.30" height="14.50" fill="#dcdde2"/><rect x="808.95" y="951.34" width="4.30" height="2.36" fill="#c75f1a"/><rect x="814.40" y="939.20" width="4.30" height="14.50" fill="#dcdde2"/><rect x="814.40" y="950.18" width="4.30" height="3.52" fill="#18a28f"/><rect x="819.85" y="939.20" width="4.30" height="14.50" fill="#dcdde2"/><rect x="819.85" y="949.02" width="4.30" height="4.68" fill="#a01fc0"/><rect x="825.30" y="939.20" width="4.30" height="14.50" fill="#dcdde2"/><rect x="825.30" y="947.86" width="4.30" height="5.84" fill="#e53f98"/><rect x="830.75" y="939.20" width="4.30" height="14.50" fill="#dcdde2"/><rect x="830.75" y="946.70" width="4.30" height="7.00" fill="#4514bd"/><rect x="836.20" y="939.20" width="4.30" height="14.50" fill="#dcdde2"/><rect x="836.20" y="945.54" width="4.30" height="8.16" fill="#e8701f"/><rect x="841.65" y="939.20" width="4.30" height="14.50" fill="#dcdde2"/><rect x="841.65" y="944.38" width="4.30" height="9.32" fill="#0e5d55"/><rect x="847.10" y="939.20" width="4.30" height="14.50" fill="#dcdde2"/><rect x="847.10" y="943.22" width="4.30" height="10.48" fill="#b20f50"/><rect x="857.90" y="939.20" width="4.30" height="14.50" fill="#dcdde2"/><rect x="857.90" y="952.50" width="4.30" height="1.20" fill="#a48af7"/><rect x="863.35" y="939.20" width="4.30" height="14.50" fill="#dcdde2"/><rect x="863.35" y="951.34" width="4.30" height="2.36" fill="#c75f1a"/><rect x="868.80" y="939.20" width="4.30" height="14.50" fill="#dcdde2"/><rect x="868.80" y="950.18" width="4.30" height="3.52" fill="#18a28f"/><rect x="874.25" y="939.20" width="4.30" height="14.50" fill="#dcdde2"/><rect x="874.25" y="949.02" width="4.30" height="4.68" fill="#a01fc0"/><rect x="879.70" y="939.20" width="4.30" height="14.50" fill="#dcdde2"/><rect x="879.70" y="947.86" width="4.30" height="5.84" fill="#e53f98"/><rect x="885.15" y="939.20" width="4.30" height="14.50" fill="#dcdde2"/><rect x="885.15" y="946.70" width="4.30" height="7.00" fill="#4514bd"/><rect x="890.60" y="939.20" width="4.30" height="14.50" fill="#dcdde2"/><rect x="890.60" y="945.54" width="4.30" height="8.16" fill="#e8701f"/><rect x="896.05" y="939.20" width="4.30" height="14.50" fill="#dcdde2"/><rect x="896.05" y="944.38" width="4.30" height="9.32" fill="#0e5d55"/><rect x="901.50" y="939.20" width="4.30" height="14.50" fill="#dcdde2"/><rect x="901.50" y="943.22" width="4.30" height="10.48" fill="#b20f50"/><rect x="906.95" y="939.20" width="4.30" height="14.50" fill="#dcdde2"/><rect x="906.95" y="942.06" width="4.30" height="11.64" fill="#cc45ee"/><rect x="575.30" y="977.80" width="4.30" height="1.20" fill="#a48af7"/><rect x="580.75" y="976.64" width="4.30" height="2.36" fill="#c75f1a"/><rect x="591.55" y="977.80" width="4.30" height="1.20" fill="#a48af7"/><rect x="597.00" y="976.64" width="4.30" height="2.36" fill="#c75f1a"/><rect x="602.45" y="975.48" width="4.30" height="3.52" fill="#18a28f"/><rect x="613.25" y="977.80" width="4.30" height="1.20" fill="#a48af7"/><rect x="618.70" y="976.64" width="4.30" height="2.36" fill="#c75f1a"/><rect x="624.15" y="975.48" width="4.30" height="3.52" fill="#18a28f"/><rect x="629.60" y="974.32" width="4.30" height="4.68" fill="#a01fc0"/><rect x="640.40" y="977.80" width="4.30" height="1.20" fill="#a48af7"/><rect x="645.85" y="976.64" width="4.30" height="2.36" fill="#c75f1a"/><rect x="651.30" y="975.48" width="4.30" height="3.52" fill="#18a28f"/><rect x="656.75" y="974.32" width="4.30" height="4.68" fill="#a01fc0"/><rect x="662.20" y="973.16" width="4.30" height="5.84" fill="#e53f98"/><rect x="673.00" y="977.80" width="4.30" height="1.20" fill="#a48af7"/><rect x="678.45" y="976.64" width="4.30" height="2.36" fill="#c75f1a"/><rect x="683.90" y="975.48" width="4.30" height="3.52" fill="#18a28f"/><rect x="689.35" y="974.32" width="4.30" height="4.68" fill="#a01fc0"/><rect x="694.80" y="973.16" width="4.30" height="5.84" fill="#e53f98"/><rect x="700.25" y="972.00" width="4.30" height="7.00" fill="#4514bd"/><rect x="711.05" y="977.80" width="4.30" height="1.20" fill="#a48af7"/><rect x="716.50" y="976.64" width="4.30" height="2.36" fill="#c75f1a"/><rect x="721.95" y="975.48" width="4.30" height="3.52" fill="#18a28f"/><rect x="727.40" y="974.32" width="4.30" height="4.68" fill="#a01fc0"/><rect x="732.85" y="973.16" width="4.30" height="5.84" fill="#e53f98"/><rect x="738.30" y="972.00" width="4.30" height="7.00" fill="#4514bd"/><rect x="743.75" y="970.84" width="4.30" height="8.16" fill="#e8701f"/><rect x="754.55" y="977.80" width="4.30" height="1.20" fill="#a48af7"/><rect x="760.00" y="976.64" width="4.30" height="2.36" fill="#c75f1a"/><rect x="765.45" y="975.48" width="4.30" height="3.52" fill="#18a28f"/><rect x="770.90" y="974.32" width="4.30" height="4.68" fill="#a01fc0"/><rect x="776.35" y="973.16" width="4.30" height="5.84" fill="#e53f98"/><rect x="781.80" y="972.00" width="4.30" height="7.00" fill="#4514bd"/><rect x="787.25" y="970.84" width="4.30" height="8.16" fill="#e8701f"/><rect x="792.70" y="969.68" width="4.30" height="9.32" fill="#0e5d55"/><rect x="803.50" y="977.80" width="4.30" height="1.20" fill="#a48af7"/><rect x="808.95" y="976.64" width="4.30" height="2.36" fill="#c75f1a"/><rect x="814.40" y="975.48" width="4.30" height="3.52" fill="#18a28f"/><rect x="819.85" y="974.32" width="4.30" height="4.68" fill="#a01fc0"/><rect x="825.30" y="973.16" width="4.30" height="5.84" fill="#e53f98"/><rect x="830.75" y="972.00" width="4.30" height="7.00" fill="#4514bd"/><rect x="836.20" y="970.84" width="4.30" height="8.16" fill="#e8701f"/><rect x="841.65" y="969.68" width="4.30" height="9.32" fill="#0e5d55"/><rect x="847.10" y="968.52" width="4.30" height="10.48" fill="#b20f50"/><rect x="857.90" y="977.80" width="4.30" height="1.20" fill="#a48af7"/><rect x="863.35" y="976.64" width="4.30" height="2.36" fill="#c75f1a"/><rect x="868.80" y="975.48" width="4.30" height="3.52" fill="#18a28f"/><rect x="874.25" y="974.32" width="4.30" height="4.68" fill="#a01fc0"/><rect x="879.70" y="973.16" width="4.30" height="5.84" fill="#e53f98"/><rect x="885.15" y="972.00" width="4.30" height="7.00" fill="#4514bd"/><rect x="890.60" y="970.84" width="4.30" height="8.16" fill="#e8701f"/><rect x="896.05" y="969.68" width="4.30" height="9.32" fill="#0e5d55"/><rect x="901.50" y="968.52" width="4.30" height="10.48" fill="#b20f50"/><rect x="906.95" y="967.36" width="4.30" height="11.64" fill="#cc45ee"/><rect x="575.30" y="986.50" width="4.30" height="14.50" fill="#dcdde2"/><rect x="575.30" y="999.80" width="4.30" height="1.20" fill="#a48af7"/><rect x="580.75" y="986.50" width="4.30" height="14.50" fill="#dcdde2"/><rect x="580.75" y="998.64" width="4.30" height="2.36" fill="#c75f1a"/><rect x="591.55" y="986.50" width="4.30" height="14.50" fill="#dcdde2"/><rect x="591.55" y="999.80" width="4.30" height="1.20" fill="#a48af7"/><rect x="597.00" y="986.50" width="4.30" height="14.50" fill="#dcdde2"/><rect x="597.00" y="998.64" width="4.30" height="2.36" fill="#c75f1a"/><rect x="602.45" y="986.50" width="4.30" height="14.50" fill="#dcdde2"/><rect x="602.45" y="997.48" width="4.30" height="3.52" fill="#18a28f"/><rect x="613.25" y="986.50" width="4.30" height="14.50" fill="#dcdde2"/><rect x="613.25" y="999.80" width="4.30" height="1.20" fill="#a48af7"/><rect x="618.70" y="986.50" width="4.30" height="14.50" fill="#dcdde2"/><rect x="618.70" y="998.64" width="4.30" height="2.36" fill="#c75f1a"/><rect x="624.15" y="986.50" width="4.30" height="14.50" fill="#dcdde2"/><rect x="624.15" y="997.48" width="4.30" height="3.52" fill="#18a28f"/><rect x="629.60" y="986.50" width="4.30" height="14.50" fill="#dcdde2"/><rect x="629.60" y="996.32" width="4.30" height="4.68" fill="#a01fc0"/><rect x="640.40" y="986.50" width="4.30" height="14.50" fill="#dcdde2"/><rect x="640.40" y="999.80" width="4.30" height="1.20" fill="#a48af7"/><rect x="645.85" y="986.50" width="4.30" height="14.50" fill="#dcdde2"/><rect x="645.85" y="998.64" width="4.30" height="2.36" fill="#c75f1a"/><rect x="651.30" y="986.50" width="4.30" height="14.50" fill="#dcdde2"/><rect x="651.30" y="997.48" width="4.30" height="3.52" fill="#18a28f"/><rect x="656.75" y="986.50" width="4.30" height="14.50" fill="#dcdde2"/><rect x="656.75" y="996.32" width="4.30" height="4.68" fill="#a01fc0"/><rect x="662.20" y="986.50" width="4.30" height="14.50" fill="#dcdde2"/><rect x="662.20" y="995.16" width="4.30" height="5.84" fill="#e53f98"/><rect x="673.00" y="986.50" width="4.30" height="14.50" fill="#dcdde2"/><rect x="673.00" y="999.80" width="4.30" height="1.20" fill="#a48af7"/><rect x="678.45" y="986.50" width="4.30" height="14.50" fill="#dcdde2"/><rect x="678.45" y="998.64" width="4.30" height="2.36" fill="#c75f1a"/><rect x="683.90" y="986.50" width="4.30" height="14.50" fill="#dcdde2"/><rect x="683.90" y="997.48" width="4.30" height="3.52" fill="#18a28f"/><rect x="689.35" y="986.50" width="4.30" height="14.50" fill="#dcdde2"/><rect x="689.35" y="996.32" width="4.30" height="4.68" fill="#a01fc0"/><rect x="694.80" y="986.50" width="4.30" height="14.50" fill="#dcdde2"/><rect x="694.80" y="995.16" width="4.30" height="5.84" fill="#e53f98"/><rect x="700.25" y="986.50" width="4.30" height="14.50" fill="#dcdde2"/><rect x="700.25" y="994.00" width="4.30" height="7.00" fill="#4514bd"/><rect x="711.05" y="986.50" width="4.30" height="14.50" fill="#dcdde2"/><rect x="711.05" y="999.80" width="4.30" height="1.20" fill="#a48af7"/><rect x="716.50" y="986.50" width="4.30" height="14.50" fill="#dcdde2"/><rect x="716.50" y="998.64" width="4.30" height="2.36" fill="#c75f1a"/><rect x="721.95" y="986.50" width="4.30" height="14.50" fill="#dcdde2"/><rect x="721.95" y="997.48" width="4.30" height="3.52" fill="#18a28f"/><rect x="727.40" y="986.50" width="4.30" height="14.50" fill="#dcdde2"/><rect x="727.40" y="996.32" width="4.30" height="4.68" fill="#a01fc0"/><rect x="732.85" y="986.50" width="4.30" height="14.50" fill="#dcdde2"/><rect x="732.85" y="995.16" width="4.30" height="5.84" fill="#e53f98"/><rect x="738.30" y="986.50" width="4.30" height="14.50" fill="#dcdde2"/><rect x="738.30" y="994.00" width="4.30" height="7.00" fill="#4514bd"/><rect x="743.75" y="986.50" width="4.30" height="14.50" fill="#dcdde2"/><rect x="743.75" y="992.84" width="4.30" height="8.16" fill="#e8701f"/><rect x="754.55" y="986.50" width="4.30" height="14.50" fill="#dcdde2"/><rect x="754.55" y="999.80" width="4.30" height="1.20" fill="#a48af7"/><rect x="760.00" y="986.50" width="4.30" height="14.50" fill="#dcdde2"/><rect x="760.00" y="998.64" width="4.30" height="2.36" fill="#c75f1a"/><rect x="765.45" y="986.50" width="4.30" height="14.50" fill="#dcdde2"/><rect x="765.45" y="997.48" width="4.30" height="3.52" fill="#18a28f"/><rect x="770.90" y="986.50" width="4.30" height="14.50" fill="#dcdde2"/><rect x="770.90" y="996.32" width="4.30" height="4.68" fill="#a01fc0"/><rect x="776.35" y="986.50" width="4.30" height="14.50" fill="#dcdde2"/><rect x="776.35" y="995.16" width="4.30" height="5.84" fill="#e53f98"/><rect x="781.80" y="986.50" width="4.30" height="14.50" fill="#dcdde2"/><rect x="781.80" y="994.00" width="4.30" height="7.00" fill="#4514bd"/><rect x="787.25" y="986.50" width="4.30" height="14.50" fill="#dcdde2"/><rect x="787.25" y="992.84" width="4.30" height="8.16" fill="#e8701f"/><rect x="792.70" y="986.50" width="4.30" height="14.50" fill="#dcdde2"/><rect x="792.70" y="991.68" width="4.30" height="9.32" fill="#0e5d55"/><rect x="803.50" y="986.50" width="4.30" height="14.50" fill="#dcdde2"/><rect x="803.50" y="999.80" width="4.30" height="1.20" fill="#a48af7"/><rect x="808.95" y="986.50" width="4.30" height="14.50" fill="#dcdde2"/><rect x="808.95" y="998.64" width="4.30" height="2.36" fill="#c75f1a"/><rect x="814.40" y="986.50" width="4.30" height="14.50" fill="#dcdde2"/><rect x="814.40" y="997.48" width="4.30" height="3.52" fill="#18a28f"/><rect x="819.85" y="986.50" width="4.30" height="14.50" fill="#dcdde2"/><rect x="819.85" y="996.32" width="4.30" height="4.68" fill="#a01fc0"/><rect x="825.30" y="986.50" width="4.30" height="14.50" fill="#dcdde2"/><rect x="825.30" y="995.16" width="4.30" height="5.84" fill="#e53f98"/><rect x="830.75" y="986.50" width="4.30" height="14.50" fill="#dcdde2"/><rect x="830.75" y="994.00" width="4.30" height="7.00" fill="#4514bd"/><rect x="836.20" y="986.50" width="4.30" height="14.50" fill="#dcdde2"/><rect x="836.20" y="992.84" width="4.30" height="8.16" fill="#e8701f"/><rect x="841.65" y="986.50" width="4.30" height="14.50" fill="#dcdde2"/><rect x="841.65" y="991.68" width="4.30" height="9.32" fill="#0e5d55"/><rect x="847.10" y="986.50" width="4.30" height="14.50" fill="#dcdde2"/><rect x="847.10" y="990.52" width="4.30" height="10.48" fill="#b20f50"/><rect x="857.90" y="986.50" width="4.30" height="14.50" fill="#dcdde2"/><rect x="857.90" y="999.80" width="4.30" height="1.20" fill="#a48af7"/><rect x="863.35" y="986.50" width="4.30" height="14.50" fill="#dcdde2"/><rect x="863.35" y="998.64" width="4.30" height="2.36" fill="#c75f1a"/><rect x="868.80" y="986.50" width="4.30" height="14.50" fill="#dcdde2"/><rect x="868.80" y="997.48" width="4.30" height="3.52" fill="#18a28f"/><rect x="874.25" y="986.50" width="4.30" height="14.50" fill="#dcdde2"/><rect x="874.25" y="996.32" width="4.30" height="4.68" fill="#a01fc0"/><rect x="879.70" y="986.50" width="4.30" height="14.50" fill="#dcdde2"/><rect x="879.70" y="995.16" width="4.30" height="5.84" fill="#e53f98"/><rect x="885.15" y="986.50" width="4.30" height="14.50" fill="#dcdde2"/><rect x="885.15" y="994.00" width="4.30" height="7.00" fill="#4514bd"/><rect x="890.60" y="986.50" width="4.30" height="14.50" fill="#dcdde2"/><rect x="890.60" y="992.84" width="4.30" height="8.16" fill="#e8701f"/><rect x="896.05" y="986.50" width="4.30" height="14.50" fill="#dcdde2"/><rect x="896.05" y="991.68" width="4.30" height="9.32" fill="#0e5d55"/><rect x="901.50" y="986.50" width="4.30" height="14.50" fill="#dcdde2"/><rect x="901.50" y="990.52" width="4.30" height="10.48" fill="#b20f50"/><rect x="906.95" y="986.50" width="4.30" height="14.50" fill="#dcdde2"/><rect x="906.95" y="989.36" width="4.30" height="11.64" fill="#cc45ee"/><rect x="575.30" y="1033.70" width="8.60" height="1.20" fill="#a48af7"/><rect x="586.05" y="1032.54" width="8.60" height="2.36" fill="#c75f1a"/><rect x="603.85" y="1033.70" width="8.60" height="1.20" fill="#a48af7"/><rect x="614.60" y="1032.54" width="8.60" height="2.36" fill="#c75f1a"/><rect x="625.35" y="1031.38" width="8.60" height="3.52" fill="#18a28f"/><rect x="643.15" y="1033.70" width="8.60" height="1.20" fill="#a48af7"/><rect x="653.90" y="1032.54" width="8.60" height="2.36" fill="#c75f1a"/><rect x="664.65" y="1031.38" width="8.60" height="3.52" fill="#18a28f"/><rect x="675.40" y="1030.22" width="8.60" height="4.68" fill="#a01fc0"/><rect x="693.20" y="1033.70" width="8.60" height="1.20" fill="#a48af7"/><rect x="703.95" y="1032.54" width="8.60" height="2.36" fill="#c75f1a"/><rect x="714.70" y="1031.38" width="8.60" height="3.52" fill="#18a28f"/><rect x="725.45" y="1030.22" width="8.60" height="4.68" fill="#a01fc0"/><rect x="736.20" y="1029.06" width="8.60" height="5.84" fill="#e53f98"/><rect x="754.00" y="1033.70" width="8.60" height="1.20" fill="#a48af7"/><rect x="764.75" y="1032.54" width="8.60" height="2.36" fill="#c75f1a"/><rect x="775.50" y="1031.38" width="8.60" height="3.52" fill="#18a28f"/><rect x="786.25" y="1030.22" width="8.60" height="4.68" fill="#a01fc0"/><rect x="797.00" y="1029.06" width="8.60" height="5.84" fill="#e53f98"/><rect x="807.75" y="1027.90" width="8.60" height="7.00" fill="#4514bd"/><rect x="825.55" y="1033.70" width="8.60" height="1.20" fill="#a48af7"/><rect x="836.30" y="1032.54" width="8.60" height="2.36" fill="#c75f1a"/><rect x="847.05" y="1031.38" width="8.60" height="3.52" fill="#18a28f"/><rect x="857.80" y="1030.22" width="8.60" height="4.68" fill="#a01fc0"/><rect x="868.55" y="1029.06" width="8.60" height="5.84" fill="#e53f98"/><rect x="879.30" y="1027.90" width="8.60" height="7.00" fill="#4514bd"/><rect x="890.05" y="1026.74" width="8.60" height="8.16" fill="#e8701f"/><rect x="907.85" y="1033.70" width="8.60" height="1.20" fill="#a48af7"/><rect x="918.60" y="1032.54" width="8.60" height="2.36" fill="#c75f1a"/><rect x="929.35" y="1031.38" width="8.60" height="3.52" fill="#18a28f"/><rect x="940.10" y="1030.22" width="8.60" height="4.68" fill="#a01fc0"/><rect x="950.85" y="1029.06" width="8.60" height="5.84" fill="#e53f98"/><rect x="961.60" y="1027.90" width="8.60" height="7.00" fill="#4514bd"/><rect x="972.35" y="1026.74" width="8.60" height="8.16" fill="#e8701f"/><rect x="983.10" y="1025.58" width="8.60" height="9.32" fill="#0e5d55"/><rect x="1000.90" y="1033.70" width="8.60" height="1.20" fill="#a48af7"/><rect x="1011.65" y="1032.54" width="8.60" height="2.36" fill="#c75f1a"/><rect x="1022.40" y="1031.38" width="8.60" height="3.52" fill="#18a28f"/><rect x="1033.15" y="1030.22" width="8.60" height="4.68" fill="#a01fc0"/><rect x="1043.90" y="1029.06" width="8.60" height="5.84" fill="#e53f98"/><rect x="1054.65" y="1027.90" width="8.60" height="7.00" fill="#4514bd"/><rect x="1065.40" y="1026.74" width="8.60" height="8.16" fill="#e8701f"/><rect x="1076.15" y="1025.58" width="8.60" height="9.32" fill="#0e5d55"/><rect x="1086.90" y="1024.42" width="8.60" height="10.48" fill="#b20f50"/><rect x="1104.70" y="1033.70" width="8.60" height="1.20" fill="#a48af7"/><rect x="1115.45" y="1032.54" width="8.60" height="2.36" fill="#c75f1a"/><rect x="1126.20" y="1031.38" width="8.60" height="3.52" fill="#18a28f"/><rect x="1136.95" y="1030.22" width="8.60" height="4.68" fill="#a01fc0"/><rect x="1147.70" y="1029.06" width="8.60" height="5.84" fill="#e53f98"/><rect x="1158.45" y="1027.90" width="8.60" height="7.00" fill="#4514bd"/><rect x="1169.20" y="1026.74" width="8.60" height="8.16" fill="#e8701f"/><rect x="1179.95" y="1025.58" width="8.60" height="9.32" fill="#0e5d55"/><rect x="1190.70" y="1024.42" width="8.60" height="10.48" fill="#b20f50"/><rect x="1201.45" y="1023.26" width="8.60" height="11.64" fill="#cc45ee"/><rect x="1219.25" y="1033.70" width="8.60" height="1.20" fill="#a48af7"/><rect x="1230.00" y="1032.54" width="8.60" height="2.36" fill="#c75f1a"/><rect x="1240.75" y="1031.38" width="8.60" height="3.52" fill="#18a28f"/><rect x="1251.50" y="1030.22" width="8.60" height="4.68" fill="#a01fc0"/><rect x="1262.25" y="1029.06" width="8.60" height="5.84" fill="#e53f98"/><rect x="1273.00" y="1027.90" width="8.60" height="7.00" fill="#4514bd"/><rect x="1283.75" y="1026.74" width="8.60" height="8.16" fill="#e8701f"/><rect x="1294.50" y="1025.58" width="8.60" height="9.32" fill="#0e5d55"/><rect x="1305.25" y="1024.42" width="8.60" height="10.48" fill="#b20f50"/><rect x="1316.00" y="1023.26" width="8.60" height="11.64" fill="#cc45ee"/><rect x="1326.75" y="1022.10" width="8.60" height="12.80" fill="#cc5c12"/><rect x="1344.55" y="1033.70" width="8.60" height="1.20" fill="#a48af7"/><rect x="1355.30" y="1032.54" width="8.60" height="2.36" fill="#c75f1a"/><rect x="1366.05" y="1031.38" width="8.60" height="3.52" fill="#18a28f"/><rect x="1376.80" y="1030.22" width="8.60" height="4.68" fill="#a01fc0"/><rect x="1387.55" y="1029.06" width="8.60" height="5.84" fill="#e53f98"/><rect x="1398.30" y="1027.90" width="8.60" height="7.00" fill="#4514bd"/><rect x="1409.05" y="1026.74" width="8.60" height="8.16" fill="#e8701f"/><rect x="1419.80" y="1025.58" width="8.60" height="9.32" fill="#0e5d55"/><rect x="1430.55" y="1024.42" width="8.60" height="10.48" fill="#b20f50"/><rect x="1441.30" y="1023.26" width="8.60" height="11.64" fill="#cc45ee"/><rect x="1452.05" y="1022.10" width="8.60" height="12.80" fill="#cc5c12"/><rect x="1462.80" y="1020.94" width="8.60" height="13.96" fill="#15897c"/><rect x="575.30" y="1044.50" width="8.60" height="14.50" fill="#dcdde2"/><rect x="575.30" y="1057.80" width="8.60" height="1.20" fill="#a48af7"/><rect x="586.05" y="1044.50" width="8.60" height="14.50" fill="#dcdde2"/><rect x="586.05" y="1056.64" width="8.60" height="2.36" fill="#c75f1a"/><rect x="603.85" y="1044.50" width="8.60" height="14.50" fill="#dcdde2"/><rect x="603.85" y="1057.80" width="8.60" height="1.20" fill="#a48af7"/><rect x="614.60" y="1044.50" width="8.60" height="14.50" fill="#dcdde2"/><rect x="614.60" y="1056.64" width="8.60" height="2.36" fill="#c75f1a"/><rect x="625.35" y="1044.50" width="8.60" height="14.50" fill="#dcdde2"/><rect x="625.35" y="1055.48" width="8.60" height="3.52" fill="#18a28f"/><rect x="643.15" y="1044.50" width="8.60" height="14.50" fill="#dcdde2"/><rect x="643.15" y="1057.80" width="8.60" height="1.20" fill="#a48af7"/><rect x="653.90" y="1044.50" width="8.60" height="14.50" fill="#dcdde2"/><rect x="653.90" y="1056.64" width="8.60" height="2.36" fill="#c75f1a"/><rect x="664.65" y="1044.50" width="8.60" height="14.50" fill="#dcdde2"/><rect x="664.65" y="1055.48" width="8.60" height="3.52" fill="#18a28f"/><rect x="675.40" y="1044.50" width="8.60" height="14.50" fill="#dcdde2"/><rect x="675.40" y="1054.32" width="8.60" height="4.68" fill="#a01fc0"/><rect x="693.20" y="1044.50" width="8.60" height="14.50" fill="#dcdde2"/><rect x="693.20" y="1057.80" width="8.60" height="1.20" fill="#a48af7"/><rect x="703.95" y="1044.50" width="8.60" height="14.50" fill="#dcdde2"/><rect x="703.95" y="1056.64" width="8.60" height="2.36" fill="#c75f1a"/><rect x="714.70" y="1044.50" width="8.60" height="14.50" fill="#dcdde2"/><rect x="714.70" y="1055.48" width="8.60" height="3.52" fill="#18a28f"/><rect x="725.45" y="1044.50" width="8.60" height="14.50" fill="#dcdde2"/><rect x="725.45" y="1054.32" width="8.60" height="4.68" fill="#a01fc0"/><rect x="736.20" y="1044.50" width="8.60" height="14.50" fill="#dcdde2"/><rect x="736.20" y="1053.16" width="8.60" height="5.84" fill="#e53f98"/><rect x="754.00" y="1044.50" width="8.60" height="14.50" fill="#dcdde2"/><rect x="754.00" y="1057.80" width="8.60" height="1.20" fill="#a48af7"/><rect x="764.75" y="1044.50" width="8.60" height="14.50" fill="#dcdde2"/><rect x="764.75" y="1056.64" width="8.60" height="2.36" fill="#c75f1a"/><rect x="775.50" y="1044.50" width="8.60" height="14.50" fill="#dcdde2"/><rect x="775.50" y="1055.48" width="8.60" height="3.52" fill="#18a28f"/><rect x="786.25" y="1044.50" width="8.60" height="14.50" fill="#dcdde2"/><rect x="786.25" y="1054.32" width="8.60" height="4.68" fill="#a01fc0"/><rect x="797.00" y="1044.50" width="8.60" height="14.50" fill="#dcdde2"/><rect x="797.00" y="1053.16" width="8.60" height="5.84" fill="#e53f98"/><rect x="807.75" y="1044.50" width="8.60" height="14.50" fill="#dcdde2"/><rect x="807.75" y="1052.00" width="8.60" height="7.00" fill="#4514bd"/><rect x="825.55" y="1044.50" width="8.60" height="14.50" fill="#dcdde2"/><rect x="825.55" y="1057.80" width="8.60" height="1.20" fill="#a48af7"/><rect x="836.30" y="1044.50" width="8.60" height="14.50" fill="#dcdde2"/><rect x="836.30" y="1056.64" width="8.60" height="2.36" fill="#c75f1a"/><rect x="847.05" y="1044.50" width="8.60" height="14.50" fill="#dcdde2"/><rect x="847.05" y="1055.48" width="8.60" height="3.52" fill="#18a28f"/><rect x="857.80" y="1044.50" width="8.60" height="14.50" fill="#dcdde2"/><rect x="857.80" y="1054.32" width="8.60" height="4.68" fill="#a01fc0"/><rect x="868.55" y="1044.50" width="8.60" height="14.50" fill="#dcdde2"/><rect x="868.55" y="1053.16" width="8.60" height="5.84" fill="#e53f98"/><rect x="879.30" y="1044.50" width="8.60" height="14.50" fill="#dcdde2"/><rect x="879.30" y="1052.00" width="8.60" height="7.00" fill="#4514bd"/><rect x="890.05" y="1044.50" width="8.60" height="14.50" fill="#dcdde2"/><rect x="890.05" y="1050.84" width="8.60" height="8.16" fill="#e8701f"/><rect x="907.85" y="1044.50" width="8.60" height="14.50" fill="#dcdde2"/><rect x="907.85" y="1057.80" width="8.60" height="1.20" fill="#a48af7"/><rect x="918.60" y="1044.50" width="8.60" height="14.50" fill="#dcdde2"/><rect x="918.60" y="1056.64" width="8.60" height="2.36" fill="#c75f1a"/><rect x="929.35" y="1044.50" width="8.60" height="14.50" fill="#dcdde2"/><rect x="929.35" y="1055.48" width="8.60" height="3.52" fill="#18a28f"/><rect x="940.10" y="1044.50" width="8.60" height="14.50" fill="#dcdde2"/><rect x="940.10" y="1054.32" width="8.60" height="4.68" fill="#a01fc0"/><rect x="950.85" y="1044.50" width="8.60" height="14.50" fill="#dcdde2"/><rect x="950.85" y="1053.16" width="8.60" height="5.84" fill="#e53f98"/><rect x="961.60" y="1044.50" width="8.60" height="14.50" fill="#dcdde2"/><rect x="961.60" y="1052.00" width="8.60" height="7.00" fill="#4514bd"/><rect x="972.35" y="1044.50" width="8.60" height="14.50" fill="#dcdde2"/><rect x="972.35" y="1050.84" width="8.60" height="8.16" fill="#e8701f"/><rect x="983.10" y="1044.50" width="8.60" height="14.50" fill="#dcdde2"/><rect x="983.10" y="1049.68" width="8.60" height="9.32" fill="#0e5d55"/><rect x="1000.90" y="1044.50" width="8.60" height="14.50" fill="#dcdde2"/><rect x="1000.90" y="1057.80" width="8.60" height="1.20" fill="#a48af7"/><rect x="1011.65" y="1044.50" width="8.60" height="14.50" fill="#dcdde2"/><rect x="1011.65" y="1056.64" width="8.60" height="2.36" fill="#c75f1a"/><rect x="1022.40" y="1044.50" width="8.60" height="14.50" fill="#dcdde2"/><rect x="1022.40" y="1055.48" width="8.60" height="3.52" fill="#18a28f"/><rect x="1033.15" y="1044.50" width="8.60" height="14.50" fill="#dcdde2"/><rect x="1033.15" y="1054.32" width="8.60" height="4.68" fill="#a01fc0"/><rect x="1043.90" y="1044.50" width="8.60" height="14.50" fill="#dcdde2"/><rect x="1043.90" y="1053.16" width="8.60" height="5.84" fill="#e53f98"/><rect x="1054.65" y="1044.50" width="8.60" height="14.50" fill="#dcdde2"/><rect x="1054.65" y="1052.00" width="8.60" height="7.00" fill="#4514bd"/><rect x="1065.40" y="1044.50" width="8.60" height="14.50" fill="#dcdde2"/><rect x="1065.40" y="1050.84" width="8.60" height="8.16" fill="#e8701f"/><rect x="1076.15" y="1044.50" width="8.60" height="14.50" fill="#dcdde2"/><rect x="1076.15" y="1049.68" width="8.60" height="9.32" fill="#0e5d55"/><rect x="1086.90" y="1044.50" width="8.60" height="14.50" fill="#dcdde2"/><rect x="1086.90" y="1048.52" width="8.60" height="10.48" fill="#b20f50"/><rect x="1104.70" y="1044.50" width="8.60" height="14.50" fill="#dcdde2"/><rect x="1104.70" y="1057.80" width="8.60" height="1.20" fill="#a48af7"/><rect x="1115.45" y="1044.50" width="8.60" height="14.50" fill="#dcdde2"/><rect x="1115.45" y="1056.64" width="8.60" height="2.36" fill="#c75f1a"/><rect x="1126.20" y="1044.50" width="8.60" height="14.50" fill="#dcdde2"/><rect x="1126.20" y="1055.48" width="8.60" height="3.52" fill="#18a28f"/><rect x="1136.95" y="1044.50" width="8.60" height="14.50" fill="#dcdde2"/><rect x="1136.95" y="1054.32" width="8.60" height="4.68" fill="#a01fc0"/><rect x="1147.70" y="1044.50" width="8.60" height="14.50" fill="#dcdde2"/><rect x="1147.70" y="1053.16" width="8.60" height="5.84" fill="#e53f98"/><rect x="1158.45" y="1044.50" width="8.60" height="14.50" fill="#dcdde2"/><rect x="1158.45" y="1052.00" width="8.60" height="7.00" fill="#4514bd"/><rect x="1169.20" y="1044.50" width="8.60" height="14.50" fill="#dcdde2"/><rect x="1169.20" y="1050.84" width="8.60" height="8.16" fill="#e8701f"/><rect x="1179.95" y="1044.50" width="8.60" height="14.50" fill="#dcdde2"/><rect x="1179.95" y="1049.68" width="8.60" height="9.32" fill="#0e5d55"/><rect x="1190.70" y="1044.50" width="8.60" height="14.50" fill="#dcdde2"/><rect x="1190.70" y="1048.52" width="8.60" height="10.48" fill="#b20f50"/><rect x="1201.45" y="1044.50" width="8.60" height="14.50" fill="#dcdde2"/><rect x="1201.45" y="1047.36" width="8.60" height="11.64" fill="#cc45ee"/><rect x="1219.25" y="1044.50" width="8.60" height="14.50" fill="#dcdde2"/><rect x="1219.25" y="1057.80" width="8.60" height="1.20" fill="#a48af7"/><rect x="1230.00" y="1044.50" width="8.60" height="14.50" fill="#dcdde2"/><rect x="1230.00" y="1056.64" width="8.60" height="2.36" fill="#c75f1a"/><rect x="1240.75" y="1044.50" width="8.60" height="14.50" fill="#dcdde2"/><rect x="1240.75" y="1055.48" width="8.60" height="3.52" fill="#18a28f"/><rect x="1251.50" y="1044.50" width="8.60" height="14.50" fill="#dcdde2"/><rect x="1251.50" y="1054.32" width="8.60" height="4.68" fill="#a01fc0"/><rect x="1262.25" y="1044.50" width="8.60" height="14.50" fill="#dcdde2"/><rect x="1262.25" y="1053.16" width="8.60" height="5.84" fill="#e53f98"/><rect x="1273.00" y="1044.50" width="8.60" height="14.50" fill="#dcdde2"/><rect x="1273.00" y="1052.00" width="8.60" height="7.00" fill="#4514bd"/><rect x="1283.75" y="1044.50" width="8.60" height="14.50" fill="#dcdde2"/><rect x="1283.75" y="1050.84" width="8.60" height="8.16" fill="#e8701f"/><rect x="1294.50" y="1044.50" width="8.60" height="14.50" fill="#dcdde2"/><rect x="1294.50" y="1049.68" width="8.60" height="9.32" fill="#0e5d55"/><rect x="1305.25" y="1044.50" width="8.60" height="14.50" fill="#dcdde2"/><rect x="1305.25" y="1048.52" width="8.60" height="10.48" fill="#b20f50"/><rect x="1316.00" y="1044.50" width="8.60" height="14.50" fill="#dcdde2"/><rect x="1316.00" y="1047.36" width="8.60" height="11.64" fill="#cc45ee"/><rect x="1326.75" y="1044.50" width="8.60" height="14.50" fill="#dcdde2"/><rect x="1326.75" y="1046.20" width="8.60" height="12.80" fill="#cc5c12"/><rect x="1344.55" y="1044.50" width="8.60" height="14.50" fill="#dcdde2"/><rect x="1344.55" y="1057.80" width="8.60" height="1.20" fill="#a48af7"/><rect x="1355.30" y="1044.50" width="8.60" height="14.50" fill="#dcdde2"/><rect x="1355.30" y="1056.64" width="8.60" height="2.36" fill="#c75f1a"/><rect x="1366.05" y="1044.50" width="8.60" height="14.50" fill="#dcdde2"/><rect x="1366.05" y="1055.48" width="8.60" height="3.52" fill="#18a28f"/><rect x="1376.80" y="1044.50" width="8.60" height="14.50" fill="#dcdde2"/><rect x="1376.80" y="1054.32" width="8.60" height="4.68" fill="#a01fc0"/><rect x="1387.55" y="1044.50" width="8.60" height="14.50" fill="#dcdde2"/><rect x="1387.55" y="1053.16" width="8.60" height="5.84" fill="#e53f98"/><rect x="1398.30" y="1044.50" width="8.60" height="14.50" fill="#dcdde2"/><rect x="1398.30" y="1052.00" width="8.60" height="7.00" fill="#4514bd"/><rect x="1409.05" y="1044.50" width="8.60" height="14.50" fill="#dcdde2"/><rect x="1409.05" y="1050.84" width="8.60" height="8.16" fill="#e8701f"/><rect x="1419.80" y="1044.50" width="8.60" height="14.50" fill="#dcdde2"/><rect x="1419.80" y="1049.68" width="8.60" height="9.32" fill="#0e5d55"/><rect x="1430.55" y="1044.50" width="8.60" height="14.50" fill="#dcdde2"/><rect x="1430.55" y="1048.52" width="8.60" height="10.48" fill="#b20f50"/><rect x="1441.30" y="1044.50" width="8.60" height="14.50" fill="#dcdde2"/><rect x="1441.30" y="1047.36" width="8.60" height="11.64" fill="#cc45ee"/><rect x="1452.05" y="1044.50" width="8.60" height="14.50" fill="#dcdde2"/><rect x="1452.05" y="1046.20" width="8.60" height="12.80" fill="#cc5c12"/><rect x="1462.80" y="1044.50" width="8.60" height="14.50" fill="#dcdde2"/><rect x="1462.80" y="1045.04" width="8.60" height="13.96" fill="#15897c"/><rect x="575.30" y="1082.70" width="8.60" height="1.20" fill="#a48af7"/><rect x="586.05" y="1081.54" width="8.60" height="2.36" fill="#c75f1a"/><rect x="603.85" y="1082.70" width="8.60" height="1.20" fill="#a48af7"/><rect x="614.60" y="1081.54" width="8.60" height="2.36" fill="#c75f1a"/><rect x="625.35" y="1080.38" width="8.60" height="3.52" fill="#18a28f"/><rect x="643.15" y="1082.70" width="8.60" height="1.20" fill="#a48af7"/><rect x="653.90" y="1081.54" width="8.60" height="2.36" fill="#c75f1a"/><rect x="664.65" y="1080.38" width="8.60" height="3.52" fill="#18a28f"/><rect x="675.40" y="1079.22" width="8.60" height="4.68" fill="#a01fc0"/><rect x="693.20" y="1082.70" width="8.60" height="1.20" fill="#a48af7"/><rect x="703.95" y="1081.54" width="8.60" height="2.36" fill="#c75f1a"/><rect x="714.70" y="1080.38" width="8.60" height="3.52" fill="#18a28f"/><rect x="725.45" y="1079.22" width="8.60" height="4.68" fill="#a01fc0"/><rect x="736.20" y="1078.06" width="8.60" height="5.84" fill="#e53f98"/><rect x="754.00" y="1082.70" width="8.60" height="1.20" fill="#a48af7"/><rect x="764.75" y="1081.54" width="8.60" height="2.36" fill="#c75f1a"/><rect x="775.50" y="1080.38" width="8.60" height="3.52" fill="#18a28f"/><rect x="786.25" y="1079.22" width="8.60" height="4.68" fill="#a01fc0"/><rect x="797.00" y="1078.06" width="8.60" height="5.84" fill="#e53f98"/><rect x="807.75" y="1076.90" width="8.60" height="7.00" fill="#4514bd"/><rect x="825.55" y="1082.70" width="8.60" height="1.20" fill="#a48af7"/><rect x="836.30" y="1081.54" width="8.60" height="2.36" fill="#c75f1a"/><rect x="847.05" y="1080.38" width="8.60" height="3.52" fill="#18a28f"/><rect x="857.80" y="1079.22" width="8.60" height="4.68" fill="#a01fc0"/><rect x="868.55" y="1078.06" width="8.60" height="5.84" fill="#e53f98"/><rect x="879.30" y="1076.90" width="8.60" height="7.00" fill="#4514bd"/><rect x="890.05" y="1075.74" width="8.60" height="8.16" fill="#e8701f"/><rect x="907.85" y="1082.70" width="8.60" height="1.20" fill="#a48af7"/><rect x="918.60" y="1081.54" width="8.60" height="2.36" fill="#c75f1a"/><rect x="929.35" y="1080.38" width="8.60" height="3.52" fill="#18a28f"/><rect x="940.10" y="1079.22" width="8.60" height="4.68" fill="#a01fc0"/><rect x="950.85" y="1078.06" width="8.60" height="5.84" fill="#e53f98"/><rect x="961.60" y="1076.90" width="8.60" height="7.00" fill="#4514bd"/><rect x="972.35" y="1075.74" width="8.60" height="8.16" fill="#e8701f"/><rect x="983.10" y="1074.58" width="8.60" height="9.32" fill="#0e5d55"/><rect x="1000.90" y="1082.70" width="8.60" height="1.20" fill="#a48af7"/><rect x="1011.65" y="1081.54" width="8.60" height="2.36" fill="#c75f1a"/><rect x="1022.40" y="1080.38" width="8.60" height="3.52" fill="#18a28f"/><rect x="1033.15" y="1079.22" width="8.60" height="4.68" fill="#a01fc0"/><rect x="1043.90" y="1078.06" width="8.60" height="5.84" fill="#e53f98"/><rect x="1054.65" y="1076.90" width="8.60" height="7.00" fill="#4514bd"/><rect x="1065.40" y="1075.74" width="8.60" height="8.16" fill="#e8701f"/><rect x="1076.15" y="1074.58" width="8.60" height="9.32" fill="#0e5d55"/><rect x="1086.90" y="1073.42" width="8.60" height="10.48" fill="#b20f50"/><rect x="1104.70" y="1082.70" width="8.60" height="1.20" fill="#a48af7"/><rect x="1115.45" y="1081.54" width="8.60" height="2.36" fill="#c75f1a"/><rect x="1126.20" y="1080.38" width="8.60" height="3.52" fill="#18a28f"/><rect x="1136.95" y="1079.22" width="8.60" height="4.68" fill="#a01fc0"/><rect x="1147.70" y="1078.06" width="8.60" height="5.84" fill="#e53f98"/><rect x="1158.45" y="1076.90" width="8.60" height="7.00" fill="#4514bd"/><rect x="1169.20" y="1075.74" width="8.60" height="8.16" fill="#e8701f"/><rect x="1179.95" y="1074.58" width="8.60" height="9.32" fill="#0e5d55"/><rect x="1190.70" y="1073.42" width="8.60" height="10.48" fill="#b20f50"/><rect x="1201.45" y="1072.26" width="8.60" height="11.64" fill="#cc45ee"/><rect x="1219.25" y="1082.70" width="8.60" height="1.20" fill="#a48af7"/><rect x="1230.00" y="1081.54" width="8.60" height="2.36" fill="#c75f1a"/><rect x="1240.75" y="1080.38" width="8.60" height="3.52" fill="#18a28f"/><rect x="1251.50" y="1079.22" width="8.60" height="4.68" fill="#a01fc0"/><rect x="1262.25" y="1078.06" width="8.60" height="5.84" fill="#e53f98"/><rect x="1273.00" y="1076.90" width="8.60" height="7.00" fill="#4514bd"/><rect x="1283.75" y="1075.74" width="8.60" height="8.16" fill="#e8701f"/><rect x="1294.50" y="1074.58" width="8.60" height="9.32" fill="#0e5d55"/><rect x="1305.25" y="1073.42" width="8.60" height="10.48" fill="#b20f50"/><rect x="1316.00" y="1072.26" width="8.60" height="11.64" fill="#cc45ee"/><rect x="1326.75" y="1071.10" width="8.60" height="12.80" fill="#cc5c12"/><rect x="1344.55" y="1082.70" width="8.60" height="1.20" fill="#a48af7"/><rect x="1355.30" y="1081.54" width="8.60" height="2.36" fill="#c75f1a"/><rect x="1366.05" y="1080.38" width="8.60" height="3.52" fill="#18a28f"/><rect x="1376.80" y="1079.22" width="8.60" height="4.68" fill="#a01fc0"/><rect x="1387.55" y="1078.06" width="8.60" height="5.84" fill="#e53f98"/><rect x="1398.30" y="1076.90" width="8.60" height="7.00" fill="#4514bd"/><rect x="1409.05" y="1075.74" width="8.60" height="8.16" fill="#e8701f"/><rect x="1419.80" y="1074.58" width="8.60" height="9.32" fill="#0e5d55"/><rect x="1430.55" y="1073.42" width="8.60" height="10.48" fill="#b20f50"/><rect x="1441.30" y="1072.26" width="8.60" height="11.64" fill="#cc45ee"/><rect x="1452.05" y="1071.10" width="8.60" height="12.80" fill="#cc5c12"/><rect x="1462.80" y="1069.94" width="8.60" height="13.96" fill="#15897c"/><rect x="575.30" y="1094.10" width="8.60" height="14.50" fill="#dcdde2"/><rect x="575.30" y="1107.40" width="8.60" height="1.20" fill="#a48af7"/><rect x="586.05" y="1094.10" width="8.60" height="14.50" fill="#dcdde2"/><rect x="586.05" y="1106.24" width="8.60" height="2.36" fill="#c75f1a"/><rect x="603.85" y="1094.10" width="8.60" height="14.50" fill="#dcdde2"/><rect x="603.85" y="1107.40" width="8.60" height="1.20" fill="#a48af7"/><rect x="614.60" y="1094.10" width="8.60" height="14.50" fill="#dcdde2"/><rect x="614.60" y="1106.24" width="8.60" height="2.36" fill="#c75f1a"/><rect x="625.35" y="1094.10" width="8.60" height="14.50" fill="#dcdde2"/><rect x="625.35" y="1105.08" width="8.60" height="3.52" fill="#18a28f"/><rect x="643.15" y="1094.10" width="8.60" height="14.50" fill="#dcdde2"/><rect x="643.15" y="1107.40" width="8.60" height="1.20" fill="#a48af7"/><rect x="653.90" y="1094.10" width="8.60" height="14.50" fill="#dcdde2"/><rect x="653.90" y="1106.24" width="8.60" height="2.36" fill="#c75f1a"/><rect x="664.65" y="1094.10" width="8.60" height="14.50" fill="#dcdde2"/><rect x="664.65" y="1105.08" width="8.60" height="3.52" fill="#18a28f"/><rect x="675.40" y="1094.10" width="8.60" height="14.50" fill="#dcdde2"/><rect x="675.40" y="1103.92" width="8.60" height="4.68" fill="#a01fc0"/><rect x="693.20" y="1094.10" width="8.60" height="14.50" fill="#dcdde2"/><rect x="693.20" y="1107.40" width="8.60" height="1.20" fill="#a48af7"/><rect x="703.95" y="1094.10" width="8.60" height="14.50" fill="#dcdde2"/><rect x="703.95" y="1106.24" width="8.60" height="2.36" fill="#c75f1a"/><rect x="714.70" y="1094.10" width="8.60" height="14.50" fill="#dcdde2"/><rect x="714.70" y="1105.08" width="8.60" height="3.52" fill="#18a28f"/><rect x="725.45" y="1094.10" width="8.60" height="14.50" fill="#dcdde2"/><rect x="725.45" y="1103.92" width="8.60" height="4.68" fill="#a01fc0"/><rect x="736.20" y="1094.10" width="8.60" height="14.50" fill="#dcdde2"/><rect x="736.20" y="1102.76" width="8.60" height="5.84" fill="#e53f98"/><rect x="754.00" y="1094.10" width="8.60" height="14.50" fill="#dcdde2"/><rect x="754.00" y="1107.40" width="8.60" height="1.20" fill="#a48af7"/><rect x="764.75" y="1094.10" width="8.60" height="14.50" fill="#dcdde2"/><rect x="764.75" y="1106.24" width="8.60" height="2.36" fill="#c75f1a"/><rect x="775.50" y="1094.10" width="8.60" height="14.50" fill="#dcdde2"/><rect x="775.50" y="1105.08" width="8.60" height="3.52" fill="#18a28f"/><rect x="786.25" y="1094.10" width="8.60" height="14.50" fill="#dcdde2"/><rect x="786.25" y="1103.92" width="8.60" height="4.68" fill="#a01fc0"/><rect x="797.00" y="1094.10" width="8.60" height="14.50" fill="#dcdde2"/><rect x="797.00" y="1102.76" width="8.60" height="5.84" fill="#e53f98"/><rect x="807.75" y="1094.10" width="8.60" height="14.50" fill="#dcdde2"/><rect x="807.75" y="1101.60" width="8.60" height="7.00" fill="#4514bd"/><rect x="825.55" y="1094.10" width="8.60" height="14.50" fill="#dcdde2"/><rect x="825.55" y="1107.40" width="8.60" height="1.20" fill="#a48af7"/><rect x="836.30" y="1094.10" width="8.60" height="14.50" fill="#dcdde2"/><rect x="836.30" y="1106.24" width="8.60" height="2.36" fill="#c75f1a"/><rect x="847.05" y="1094.10" width="8.60" height="14.50" fill="#dcdde2"/><rect x="847.05" y="1105.08" width="8.60" height="3.52" fill="#18a28f"/><rect x="857.80" y="1094.10" width="8.60" height="14.50" fill="#dcdde2"/><rect x="857.80" y="1103.92" width="8.60" height="4.68" fill="#a01fc0"/><rect x="868.55" y="1094.10" width="8.60" height="14.50" fill="#dcdde2"/><rect x="868.55" y="1102.76" width="8.60" height="5.84" fill="#e53f98"/><rect x="879.30" y="1094.10" width="8.60" height="14.50" fill="#dcdde2"/><rect x="879.30" y="1101.60" width="8.60" height="7.00" fill="#4514bd"/><rect x="890.05" y="1094.10" width="8.60" height="14.50" fill="#dcdde2"/><rect x="890.05" y="1100.44" width="8.60" height="8.16" fill="#e8701f"/><rect x="907.85" y="1094.10" width="8.60" height="14.50" fill="#dcdde2"/><rect x="907.85" y="1107.40" width="8.60" height="1.20" fill="#a48af7"/><rect x="918.60" y="1094.10" width="8.60" height="14.50" fill="#dcdde2"/><rect x="918.60" y="1106.24" width="8.60" height="2.36" fill="#c75f1a"/><rect x="929.35" y="1094.10" width="8.60" height="14.50" fill="#dcdde2"/><rect x="929.35" y="1105.08" width="8.60" height="3.52" fill="#18a28f"/><rect x="940.10" y="1094.10" width="8.60" height="14.50" fill="#dcdde2"/><rect x="940.10" y="1103.92" width="8.60" height="4.68" fill="#a01fc0"/><rect x="950.85" y="1094.10" width="8.60" height="14.50" fill="#dcdde2"/><rect x="950.85" y="1102.76" width="8.60" height="5.84" fill="#e53f98"/><rect x="961.60" y="1094.10" width="8.60" height="14.50" fill="#dcdde2"/><rect x="961.60" y="1101.60" width="8.60" height="7.00" fill="#4514bd"/><rect x="972.35" y="1094.10" width="8.60" height="14.50" fill="#dcdde2"/><rect x="972.35" y="1100.44" width="8.60" height="8.16" fill="#e8701f"/><rect x="983.10" y="1094.10" width="8.60" height="14.50" fill="#dcdde2"/><rect x="983.10" y="1099.28" width="8.60" height="9.32" fill="#0e5d55"/><rect x="1000.90" y="1094.10" width="8.60" height="14.50" fill="#dcdde2"/><rect x="1000.90" y="1107.40" width="8.60" height="1.20" fill="#a48af7"/><rect x="1011.65" y="1094.10" width="8.60" height="14.50" fill="#dcdde2"/><rect x="1011.65" y="1106.24" width="8.60" height="2.36" fill="#c75f1a"/><rect x="1022.40" y="1094.10" width="8.60" height="14.50" fill="#dcdde2"/><rect x="1022.40" y="1105.08" width="8.60" height="3.52" fill="#18a28f"/><rect x="1033.15" y="1094.10" width="8.60" height="14.50" fill="#dcdde2"/><rect x="1033.15" y="1103.92" width="8.60" height="4.68" fill="#a01fc0"/><rect x="1043.90" y="1094.10" width="8.60" height="14.50" fill="#dcdde2"/><rect x="1043.90" y="1102.76" width="8.60" height="5.84" fill="#e53f98"/><rect x="1054.65" y="1094.10" width="8.60" height="14.50" fill="#dcdde2"/><rect x="1054.65" y="1101.60" width="8.60" height="7.00" fill="#4514bd"/><rect x="1065.40" y="1094.10" width="8.60" height="14.50" fill="#dcdde2"/><rect x="1065.40" y="1100.44" width="8.60" height="8.16" fill="#e8701f"/><rect x="1076.15" y="1094.10" width="8.60" height="14.50" fill="#dcdde2"/><rect x="1076.15" y="1099.28" width="8.60" height="9.32" fill="#0e5d55"/><rect x="1086.90" y="1094.10" width="8.60" height="14.50" fill="#dcdde2"/><rect x="1086.90" y="1098.12" width="8.60" height="10.48" fill="#b20f50"/><rect x="1104.70" y="1094.10" width="8.60" height="14.50" fill="#dcdde2"/><rect x="1104.70" y="1107.40" width="8.60" height="1.20" fill="#a48af7"/><rect x="1115.45" y="1094.10" width="8.60" height="14.50" fill="#dcdde2"/><rect x="1115.45" y="1106.24" width="8.60" height="2.36" fill="#c75f1a"/><rect x="1126.20" y="1094.10" width="8.60" height="14.50" fill="#dcdde2"/><rect x="1126.20" y="1105.08" width="8.60" height="3.52" fill="#18a28f"/><rect x="1136.95" y="1094.10" width="8.60" height="14.50" fill="#dcdde2"/><rect x="1136.95" y="1103.92" width="8.60" height="4.68" fill="#a01fc0"/><rect x="1147.70" y="1094.10" width="8.60" height="14.50" fill="#dcdde2"/><rect x="1147.70" y="1102.76" width="8.60" height="5.84" fill="#e53f98"/><rect x="1158.45" y="1094.10" width="8.60" height="14.50" fill="#dcdde2"/><rect x="1158.45" y="1101.60" width="8.60" height="7.00" fill="#4514bd"/><rect x="1169.20" y="1094.10" width="8.60" height="14.50" fill="#dcdde2"/><rect x="1169.20" y="1100.44" width="8.60" height="8.16" fill="#e8701f"/><rect x="1179.95" y="1094.10" width="8.60" height="14.50" fill="#dcdde2"/><rect x="1179.95" y="1099.28" width="8.60" height="9.32" fill="#0e5d55"/><rect x="1190.70" y="1094.10" width="8.60" height="14.50" fill="#dcdde2"/><rect x="1190.70" y="1098.12" width="8.60" height="10.48" fill="#b20f50"/><rect x="1201.45" y="1094.10" width="8.60" height="14.50" fill="#dcdde2"/><rect x="1201.45" y="1096.96" width="8.60" height="11.64" fill="#cc45ee"/><rect x="1219.25" y="1094.10" width="8.60" height="14.50" fill="#dcdde2"/><rect x="1219.25" y="1107.40" width="8.60" height="1.20" fill="#a48af7"/><rect x="1230.00" y="1094.10" width="8.60" height="14.50" fill="#dcdde2"/><rect x="1230.00" y="1106.24" width="8.60" height="2.36" fill="#c75f1a"/><rect x="1240.75" y="1094.10" width="8.60" height="14.50" fill="#dcdde2"/><rect x="1240.75" y="1105.08" width="8.60" height="3.52" fill="#18a28f"/><rect x="1251.50" y="1094.10" width="8.60" height="14.50" fill="#dcdde2"/><rect x="1251.50" y="1103.92" width="8.60" height="4.68" fill="#a01fc0"/><rect x="1262.25" y="1094.10" width="8.60" height="14.50" fill="#dcdde2"/><rect x="1262.25" y="1102.76" width="8.60" height="5.84" fill="#e53f98"/><rect x="1273.00" y="1094.10" width="8.60" height="14.50" fill="#dcdde2"/><rect x="1273.00" y="1101.60" width="8.60" height="7.00" fill="#4514bd"/><rect x="1283.75" y="1094.10" width="8.60" height="14.50" fill="#dcdde2"/><rect x="1283.75" y="1100.44" width="8.60" height="8.16" fill="#e8701f"/><rect x="1294.50" y="1094.10" width="8.60" height="14.50" fill="#dcdde2"/><rect x="1294.50" y="1099.28" width="8.60" height="9.32" fill="#0e5d55"/><rect x="1305.25" y="1094.10" width="8.60" height="14.50" fill="#dcdde2"/><rect x="1305.25" y="1098.12" width="8.60" height="10.48" fill="#b20f50"/><rect x="1316.00" y="1094.10" width="8.60" height="14.50" fill="#dcdde2"/><rect x="1316.00" y="1096.96" width="8.60" height="11.64" fill="#cc45ee"/><rect x="1326.75" y="1094.10" width="8.60" height="14.50" fill="#dcdde2"/><rect x="1326.75" y="1095.80" width="8.60" height="12.80" fill="#cc5c12"/><rect x="1344.55" y="1094.10" width="8.60" height="14.50" fill="#dcdde2"/><rect x="1344.55" y="1107.40" width="8.60" height="1.20" fill="#a48af7"/><rect x="1355.30" y="1094.10" width="8.60" height="14.50" fill="#dcdde2"/><rect x="1355.30" y="1106.24" width="8.60" height="2.36" fill="#c75f1a"/><rect x="1366.05" y="1094.10" width="8.60" height="14.50" fill="#dcdde2"/><rect x="1366.05" y="1105.08" width="8.60" height="3.52" fill="#18a28f"/><rect x="1376.80" y="1094.10" width="8.60" height="14.50" fill="#dcdde2"/><rect x="1376.80" y="1103.92" width="8.60" height="4.68" fill="#a01fc0"/><rect x="1387.55" y="1094.10" width="8.60" height="14.50" fill="#dcdde2"/><rect x="1387.55" y="1102.76" width="8.60" height="5.84" fill="#e53f98"/><rect x="1398.30" y="1094.10" width="8.60" height="14.50" fill="#dcdde2"/><rect x="1398.30" y="1101.60" width="8.60" height="7.00" fill="#4514bd"/><rect x="1409.05" y="1094.10" width="8.60" height="14.50" fill="#dcdde2"/><rect x="1409.05" y="1100.44" width="8.60" height="8.16" fill="#e8701f"/><rect x="1419.80" y="1094.10" width="8.60" height="14.50" fill="#dcdde2"/><rect x="1419.80" y="1099.28" width="8.60" height="9.32" fill="#0e5d55"/><rect x="1430.55" y="1094.10" width="8.60" height="14.50" fill="#dcdde2"/><rect x="1430.55" y="1098.12" width="8.60" height="10.48" fill="#b20f50"/><rect x="1441.30" y="1094.10" width="8.60" height="14.50" fill="#dcdde2"/><rect x="1441.30" y="1096.96" width="8.60" height="11.64" fill="#cc45ee"/><rect x="1452.05" y="1094.10" width="8.60" height="14.50" fill="#dcdde2"/><rect x="1452.05" y="1095.80" width="8.60" height="12.80" fill="#cc5c12"/><rect x="1462.80" y="1094.10" width="8.60" height="14.50" fill="#dcdde2"/><rect x="1462.80" y="1094.64" width="8.60" height="13.96" fill="#15897c"/></svg>
<div class="t" style="left:530px;top:828.1px;font-size:2.6px;line-height:3px;color:#333;font-weight:700">Width: small - Stacked:<br>stacked: false</div>
<div class="t" style="left:530px;top:853.6px;font-size:2.6px;line-height:3px;color:#333;font-weight:700">stacked: true</div>
<div class="t" style="left:530px;top:877.5px;font-size:2.6px;line-height:3px;color:#333;font-weight:700">Width: large<br>stacked: false</div>
<div class="t" style="left:530px;top:902.0px;font-size:2.6px;line-height:3px;color:#333;font-weight:700">stacked: true</div>
<div class="t" style="left:530px;top:922.4px;font-size:2.6px;line-height:3px;color:#333;font-weight:700">Width: medium<br>stacked: false<br>embed number: false</div>
<div class="t" style="left:530px;top:946.2px;font-size:2.6px;line-height:3px;color:#333;font-weight:700">stacked: true<br>embed number: false</div>
<div class="t" style="left:530px;top:971.5px;font-size:2.6px;line-height:3px;color:#333;font-weight:700">stacked: false<br>embed number: true</div>
<div class="t" style="left:530px;top:993.5px;font-size:2.6px;line-height:3px;color:#333;font-weight:700">stacked: true<br>embed number: true</div>
<div class="t" style="left:530px;top:1025.9px;font-size:2.6px;line-height:3px;color:#333;font-weight:700">Width: large<br>stacked: false<br>embed number: false</div>
<div class="t" style="left:530px;top:1051.5px;font-size:2.6px;line-height:3px;color:#333;font-weight:700">stacked: true<br>embed number: false</div>
<div class="t" style="left:530px;top:1076.4px;font-size:2.6px;line-height:3px;color:#333;font-weight:700">stacked: false<br>embed number: true</div>
<div class="t" style="left:530px;top:1101.1px;font-size:2.6px;line-height:3px;color:#333;font-weight:700">stacked: true<br>embed number: true</div>
<div class="r" style="left:518px;top:1135px;width:988px;height:377px;background:#383c51;border-radius:0 0 4px 4px"></div>
<div class="t" style="left:529px;top:1161.7px;font-size:6.1px;line-height:8px;color:#d0d0da;font-weight:400;">Dark background</div>
<div class="t" style="left:572px;top:1180.1px;font-size:2.6px;line-height:3px;color:#c0c0c8;font-weight:400;">August 21 - 12.08.76</div>
<div class="r" style="left:571px;top:1135px;width:918px;height:347px;background:transparent;border-left:1px dashed #4a4c78;border-bottom:1px dashed #4a4c78;border-right:1px dashed #4a4c78;box-sizing:border-box"></div>
<svg class="r" style="left:0px;top:0px;overflow:visible" width="2876" height="1794" viewBox="0 0 2876 1794"><rect x="575.30" y="1194.40" width="1.40" height="1.20" fill="#b49cf7"/><rect x="578.72" y="1193.24" width="1.40" height="2.36" fill="#f07f2e"/><rect x="588.32" y="1194.40" width="1.40" height="1.20" fill="#b49cf7"/><rect x="591.74" y="1193.24" width="1.40" height="2.36" fill="#f07f2e"/><rect x="595.16" y="1192.08" width="1.40" height="3.52" fill="#4fded0"/><rect x="604.76" y="1194.40" width="1.40" height="1.20" fill="#b49cf7"/><rect x="608.18" y="1193.24" width="1.40" height="2.36" fill="#f07f2e"/><rect x="611.60" y="1192.08" width="1.40" height="3.52" fill="#4fded0"/><rect x="615.02" y="1190.92" width="1.40" height="4.68" fill="#d04ff0"/><rect x="624.62" y="1194.40" width="1.40" height="1.20" fill="#b49cf7"/><rect x="628.04" y="1193.24" width="1.40" height="2.36" fill="#f07f2e"/><rect x="631.46" y="1192.08" width="1.40" height="3.52" fill="#4fded0"/><rect x="634.88" y="1190.92" width="1.40" height="4.68" fill="#d04ff0"/><rect x="638.30" y="1189.76" width="1.40" height="5.84" fill="#f0a0cc"/><rect x="647.90" y="1194.40" width="1.40" height="1.20" fill="#b49cf7"/><rect x="651.32" y="1193.24" width="1.40" height="2.36" fill="#f07f2e"/><rect x="654.74" y="1192.08" width="1.40" height="3.52" fill="#4fded0"/><rect x="658.16" y="1190.92" width="1.40" height="4.68" fill="#d04ff0"/><rect x="661.58" y="1189.76" width="1.40" height="5.84" fill="#f0a0cc"/><rect x="665.00" y="1188.60" width="1.40" height="7.00" fill="#7050ee"/><rect x="674.60" y="1194.40" width="1.40" height="1.20" fill="#b49cf7"/><rect x="678.02" y="1193.24" width="1.40" height="2.36" fill="#f07f2e"/><rect x="681.44" y="1192.08" width="1.40" height="3.52" fill="#4fded0"/><rect x="684.86" y="1190.92" width="1.40" height="4.68" fill="#d04ff0"/><rect x="688.28" y="1189.76" width="1.40" height="5.84" fill="#f0a0cc"/><rect x="691.70" y="1188.60" width="1.40" height="7.00" fill="#7050ee"/><rect x="695.12" y="1187.44" width="1.40" height="8.16" fill="#f0903c"/><rect x="704.72" y="1194.40" width="1.40" height="1.20" fill="#b49cf7"/><rect x="708.14" y="1193.24" width="1.40" height="2.36" fill="#f07f2e"/><rect x="711.56" y="1192.08" width="1.40" height="3.52" fill="#4fded0"/><rect x="714.98" y="1190.92" width="1.40" height="4.68" fill="#d04ff0"/><rect x="718.40" y="1189.76" width="1.40" height="5.84" fill="#f0a0cc"/><rect x="721.82" y="1188.60" width="1.40" height="7.00" fill="#7050ee"/><rect x="725.24" y="1187.44" width="1.40" height="8.16" fill="#f0903c"/><rect x="728.66" y="1186.28" width="1.40" height="9.32" fill="#1fa898"/><rect x="738.26" y="1194.40" width="1.40" height="1.20" fill="#b49cf7"/><rect x="741.68" y="1193.24" width="1.40" height="2.36" fill="#f07f2e"/><rect x="745.10" y="1192.08" width="1.40" height="3.52" fill="#4fded0"/><rect x="748.52" y="1190.92" width="1.40" height="4.68" fill="#d04ff0"/><rect x="751.94" y="1189.76" width="1.40" height="5.84" fill="#f0a0cc"/><rect x="755.36" y="1188.60" width="1.40" height="7.00" fill="#7050ee"/><rect x="758.78" y="1187.44" width="1.40" height="8.16" fill="#f0903c"/><rect x="762.20" y="1186.28" width="1.40" height="9.32" fill="#1fa898"/><rect x="765.62" y="1185.12" width="1.40" height="10.48" fill="#e08ff0"/><rect x="775.22" y="1194.40" width="1.40" height="1.20" fill="#b49cf7"/><rect x="778.64" y="1193.24" width="1.40" height="2.36" fill="#f07f2e"/><rect x="782.06" y="1192.08" width="1.40" height="3.52" fill="#4fded0"/><rect x="785.48" y="1190.92" width="1.40" height="4.68" fill="#d04ff0"/><rect x="788.90" y="1189.76" width="1.40" height="5.84" fill="#f0a0cc"/><rect x="792.32" y="1188.60" width="1.40" height="7.00" fill="#7050ee"/><rect x="795.74" y="1187.44" width="1.40" height="8.16" fill="#f0903c"/><rect x="799.16" y="1186.28" width="1.40" height="9.32" fill="#1fa898"/><rect x="802.58" y="1185.12" width="1.40" height="10.48" fill="#e08ff0"/><rect x="806.00" y="1183.96" width="1.40" height="11.64" fill="#f04286"/><rect x="815.60" y="1194.40" width="1.27" height="1.20" fill="#b49cf7"/><rect x="818.71" y="1193.24" width="1.27" height="2.36" fill="#f07f2e"/><rect x="821.82" y="1192.08" width="1.27" height="3.52" fill="#4fded0"/><rect x="824.93" y="1190.92" width="1.27" height="4.68" fill="#d04ff0"/><rect x="828.04" y="1189.76" width="1.27" height="5.84" fill="#f0a0cc"/><rect x="831.15" y="1188.60" width="1.27" height="7.00" fill="#7050ee"/><rect x="834.26" y="1187.44" width="1.27" height="8.16" fill="#f0903c"/><rect x="837.37" y="1186.28" width="1.27" height="9.32" fill="#1fa898"/><rect x="840.48" y="1185.12" width="1.27" height="10.48" fill="#e08ff0"/><rect x="843.59" y="1183.96" width="1.27" height="11.64" fill="#f04286"/><rect x="846.70" y="1182.80" width="1.27" height="12.80" fill="#f7be90"/><rect x="856.30" y="1194.40" width="1.16" height="1.20" fill="#b49cf7"/><rect x="859.13" y="1193.24" width="1.16" height="2.36" fill="#f07f2e"/><rect x="861.95" y="1192.08" width="1.16" height="3.52" fill="#4fded0"/><rect x="864.78" y="1190.92" width="1.16" height="4.68" fill="#d04ff0"/><rect x="867.61" y="1189.76" width="1.16" height="5.84" fill="#f0a0cc"/><rect x="870.44" y="1188.60" width="1.16" height="7.00" fill="#7050ee"/><rect x="873.26" y="1187.44" width="1.16" height="8.16" fill="#f0903c"/><rect x="876.09" y="1186.28" width="1.16" height="9.32" fill="#1fa898"/><rect x="878.92" y="1185.12" width="1.16" height="10.48" fill="#e08ff0"/><rect x="881.75" y="1183.96" width="1.16" height="11.64" fill="#f04286"/><rect x="884.57" y="1182.80" width="1.16" height="12.80" fill="#f7be90"/><rect x="887.40" y="1181.64" width="1.16" height="13.96" fill="#22c2b2"/><rect x="575.30" y="1205.50" width="1.40" height="14.50" fill="#4c4f60"/><rect x="575.30" y="1218.80" width="1.40" height="1.20" fill="#b49cf7"/><rect x="578.72" y="1205.50" width="1.40" height="14.50" fill="#4c4f60"/><rect x="578.72" y="1217.64" width="1.40" height="2.36" fill="#f07f2e"/><rect x="588.32" y="1205.50" width="1.40" height="14.50" fill="#4c4f60"/><rect x="588.32" y="1218.80" width="1.40" height="1.20" fill="#b49cf7"/><rect x="591.74" y="1205.50" width="1.40" height="14.50" fill="#4c4f60"/><rect x="591.74" y="1217.64" width="1.40" height="2.36" fill="#f07f2e"/><rect x="595.16" y="1205.50" width="1.40" height="14.50" fill="#4c4f60"/><rect x="595.16" y="1216.48" width="1.40" height="3.52" fill="#4fded0"/><rect x="604.76" y="1205.50" width="1.40" height="14.50" fill="#4c4f60"/><rect x="604.76" y="1218.80" width="1.40" height="1.20" fill="#b49cf7"/><rect x="608.18" y="1205.50" width="1.40" height="14.50" fill="#4c4f60"/><rect x="608.18" y="1217.64" width="1.40" height="2.36" fill="#f07f2e"/><rect x="611.60" y="1205.50" width="1.40" height="14.50" fill="#4c4f60"/><rect x="611.60" y="1216.48" width="1.40" height="3.52" fill="#4fded0"/><rect x="615.02" y="1205.50" width="1.40" height="14.50" fill="#4c4f60"/><rect x="615.02" y="1215.32" width="1.40" height="4.68" fill="#d04ff0"/><rect x="624.62" y="1205.50" width="1.40" height="14.50" fill="#4c4f60"/><rect x="624.62" y="1218.80" width="1.40" height="1.20" fill="#b49cf7"/><rect x="628.04" y="1205.50" width="1.40" height="14.50" fill="#4c4f60"/><rect x="628.04" y="1217.64" width="1.40" height="2.36" fill="#f07f2e"/><rect x="631.46" y="1205.50" width="1.40" height="14.50" fill="#4c4f60"/><rect x="631.46" y="1216.48" width="1.40" height="3.52" fill="#4fded0"/><rect x="634.88" y="1205.50" width="1.40" height="14.50" fill="#4c4f60"/><rect x="634.88" y="1215.32" width="1.40" height="4.68" fill="#d04ff0"/><rect x="638.30" y="1205.50" width="1.40" height="14.50" fill="#4c4f60"/><rect x="638.30" y="1214.16" width="1.40" height="5.84" fill="#f0a0cc"/><rect x="647.90" y="1205.50" width="1.40" height="14.50" fill="#4c4f60"/><rect x="647.90" y="1218.80" width="1.40" height="1.20" fill="#b49cf7"/><rect x="651.32" y="1205.50" width="1.40" height="14.50" fill="#4c4f60"/><rect x="651.32" y="1217.64" width="1.40" height="2.36" fill="#f07f2e"/><rect x="654.74" y="1205.50" width="1.40" height="14.50" fill="#4c4f60"/><rect x="654.74" y="1216.48" width="1.40" height="3.52" fill="#4fded0"/><rect x="658.16" y="1205.50" width="1.40" height="14.50" fill="#4c4f60"/><rect x="658.16" y="1215.32" width="1.40" height="4.68" fill="#d04ff0"/><rect x="661.58" y="1205.50" width="1.40" height="14.50" fill="#4c4f60"/><rect x="661.58" y="1214.16" width="1.40" height="5.84" fill="#f0a0cc"/><rect x="665.00" y="1205.50" width="1.40" height="14.50" fill="#4c4f60"/><rect x="665.00" y="1213.00" width="1.40" height="7.00" fill="#7050ee"/><rect x="674.60" y="1205.50" width="1.40" height="14.50" fill="#4c4f60"/><rect x="674.60" y="1218.80" width="1.40" height="1.20" fill="#b49cf7"/><rect x="678.02" y="1205.50" width="1.40" height="14.50" fill="#4c4f60"/><rect x="678.02" y="1217.64" width="1.40" height="2.36" fill="#f07f2e"/><rect x="681.44" y="1205.50" width="1.40" height="14.50" fill="#4c4f60"/><rect x="681.44" y="1216.48" width="1.40" height="3.52" fill="#4fded0"/><rect x="684.86" y="1205.50" width="1.40" height="14.50" fill="#4c4f60"/><rect x="684.86" y="1215.32" width="1.40" height="4.68" fill="#d04ff0"/><rect x="688.28" y="1205.50" width="1.40" height="14.50" fill="#4c4f60"/><rect x="688.28" y="1214.16" width="1.40" height="5.84" fill="#f0a0cc"/><rect x="691.70" y="1205.50" width="1.40" height="14.50" fill="#4c4f60"/><rect x="691.70" y="1213.00" width="1.40" height="7.00" fill="#7050ee"/><rect x="695.12" y="1205.50" width="1.40" height="14.50" fill="#4c4f60"/><rect x="695.12" y="1211.84" width="1.40" height="8.16" fill="#f0903c"/><rect x="704.72" y="1205.50" width="1.40" height="14.50" fill="#4c4f60"/><rect x="704.72" y="1218.80" width="1.40" height="1.20" fill="#b49cf7"/><rect x="708.14" y="1205.50" width="1.40" height="14.50" fill="#4c4f60"/><rect x="708.14" y="1217.64" width="1.40" height="2.36" fill="#f07f2e"/><rect x="711.56" y="1205.50" width="1.40" height="14.50" fill="#4c4f60"/><rect x="711.56" y="1216.48" width="1.40" height="3.52" fill="#4fded0"/><rect x="714.98" y="1205.50" width="1.40" height="14.50" fill="#4c4f60"/><rect x="714.98" y="1215.32" width="1.40" height="4.68" fill="#d04ff0"/><rect x="718.40" y="1205.50" width="1.40" height="14.50" fill="#4c4f60"/><rect x="718.40" y="1214.16" width="1.40" height="5.84" fill="#f0a0cc"/><rect x="721.82" y="1205.50" width="1.40" height="14.50" fill="#4c4f60"/><rect x="721.82" y="1213.00" width="1.40" height="7.00" fill="#7050ee"/><rect x="725.24" y="1205.50" width="1.40" height="14.50" fill="#4c4f60"/><rect x="725.24" y="1211.84" width="1.40" height="8.16" fill="#f0903c"/><rect x="728.66" y="1205.50" width="1.40" height="14.50" fill="#4c4f60"/><rect x="728.66" y="1210.68" width="1.40" height="9.32" fill="#1fa898"/><rect x="738.26" y="1205.50" width="1.40" height="14.50" fill="#4c4f60"/><rect x="738.26" y="1218.80" width="1.40" height="1.20" fill="#b49cf7"/><rect x="741.68" y="1205.50" width="1.40" height="14.50" fill="#4c4f60"/><rect x="741.68" y="1217.64" width="1.40" height="2.36" fill="#f07f2e"/><rect x="745.10" y="1205.50" width="1.40" height="14.50" fill="#4c4f60"/><rect x="745.10" y="1216.48" width="1.40" height="3.52" fill="#4fded0"/><rect x="748.52" y="1205.50" width="1.40" height="14.50" fill="#4c4f60"/><rect x="748.52" y="1215.32" width="1.40" height="4.68" fill="#d04ff0"/><rect x="751.94" y="1205.50" width="1.40" height="14.50" fill="#4c4f60"/><rect x="751.94" y="1214.16" width="1.40" height="5.84" fill="#f0a0cc"/><rect x="755.36" y="1205.50" width="1.40" height="14.50" fill="#4c4f60"/><rect x="755.36" y="1213.00" width="1.40" height="7.00" fill="#7050ee"/><rect x="758.78" y="1205.50" width="1.40" height="14.50" fill="#4c4f60"/><rect x="758.78" y="1211.84" width="1.40" height="8.16" fill="#f0903c"/><rect x="762.20" y="1205.50" width="1.40" height="14.50" fill="#4c4f60"/><rect x="762.20" y="1210.68" width="1.40" height="9.32" fill="#1fa898"/><rect x="765.62" y="1205.50" width="1.40" height="14.50" fill="#4c4f60"/><rect x="765.62" y="1209.52" width="1.40" height="10.48" fill="#e08ff0"/><rect x="775.22" y="1205.50" width="1.40" height="14.50" fill="#4c4f60"/><rect x="775.22" y="1218.80" width="1.40" height="1.20" fill="#b49cf7"/><rect x="778.64" y="1205.50" width="1.40" height="14.50" fill="#4c4f60"/><rect x="778.64" y="1217.64" width="1.40" height="2.36" fill="#f07f2e"/><rect x="782.06" y="1205.50" width="1.40" height="14.50" fill="#4c4f60"/><rect x="782.06" y="1216.48" width="1.40" height="3.52" fill="#4fded0"/><rect x="785.48" y="1205.50" width="1.40" height="14.50" fill="#4c4f60"/><rect x="785.48" y="1215.32" width="1.40" height="4.68" fill="#d04ff0"/><rect x="788.90" y="1205.50" width="1.40" height="14.50" fill="#4c4f60"/><rect x="788.90" y="1214.16" width="1.40" height="5.84" fill="#f0a0cc"/><rect x="792.32" y="1205.50" width="1.40" height="14.50" fill="#4c4f60"/><rect x="792.32" y="1213.00" width="1.40" height="7.00" fill="#7050ee"/><rect x="795.74" y="1205.50" width="1.40" height="14.50" fill="#4c4f60"/><rect x="795.74" y="1211.84" width="1.40" height="8.16" fill="#f0903c"/><rect x="799.16" y="1205.50" width="1.40" height="14.50" fill="#4c4f60"/><rect x="799.16" y="1210.68" width="1.40" height="9.32" fill="#1fa898"/><rect x="802.58" y="1205.50" width="1.40" height="14.50" fill="#4c4f60"/><rect x="802.58" y="1209.52" width="1.40" height="10.48" fill="#e08ff0"/><rect x="806.00" y="1205.50" width="1.40" height="14.50" fill="#4c4f60"/><rect x="806.00" y="1208.36" width="1.40" height="11.64" fill="#f04286"/><rect x="815.60" y="1205.50" width="1.27" height="14.50" fill="#4c4f60"/><rect x="815.60" y="1218.80" width="1.27" height="1.20" fill="#b49cf7"/><rect x="818.71" y="1205.50" width="1.27" height="14.50" fill="#4c4f60"/><rect x="818.71" y="1217.64" width="1.27" height="2.36" fill="#f07f2e"/><rect x="821.82" y="1205.50" width="1.27" height="14.50" fill="#4c4f60"/><rect x="821.82" y="1216.48" width="1.27" height="3.52" fill="#4fded0"/><rect x="824.93" y="1205.50" width="1.27" height="14.50" fill="#4c4f60"/><rect x="824.93" y="1215.32" width="1.27" height="4.68" fill="#d04ff0"/><rect x="828.04" y="1205.50" width="1.27" height="14.50" fill="#4c4f60"/><rect x="828.04" y="1214.16" width="1.27" height="5.84" fill="#f0a0cc"/><rect x="831.15" y="1205.50" width="1.27" height="14.50" fill="#4c4f60"/><rect x="831.15" y="1213.00" width="1.27" height="7.00" fill="#7050ee"/><rect x="834.26" y="1205.50" width="1.27" height="14.50" fill="#4c4f60"/><rect x="834.26" y="1211.84" width="1.27" height="8.16" fill="#f0903c"/><rect x="837.37" y="1205.50" width="1.27" height="14.50" fill="#4c4f60"/><rect x="837.37" y="1210.68" width="1.27" height="9.32" fill="#1fa898"/><rect x="840.48" y="1205.50" width="1.27" height="14.50" fill="#4c4f60"/><rect x="840.48" y="1209.52" width="1.27" height="10.48" fill="#e08ff0"/><rect x="843.59" y="1205.50" width="1.27" height="14.50" fill="#4c4f60"/><rect x="843.59" y="1208.36" width="1.27" height="11.64" fill="#f04286"/><rect x="846.70" y="1205.50" width="1.27" height="14.50" fill="#4c4f60"/><rect x="846.70" y="1207.20" width="1.27" height="12.80" fill="#f7be90"/><rect x="856.30" y="1205.50" width="1.16" height="14.50" fill="#4c4f60"/><rect x="856.30" y="1218.80" width="1.16" height="1.20" fill="#b49cf7"/><rect x="859.13" y="1205.50" width="1.16" height="14.50" fill="#4c4f60"/><rect x="859.13" y="1217.64" width="1.16" height="2.36" fill="#f07f2e"/><rect x="861.95" y="1205.50" width="1.16" height="14.50" fill="#4c4f60"/><rect x="861.95" y="1216.48" width="1.16" height="3.52" fill="#4fded0"/><rect x="864.78" y="1205.50" width="1.16" height="14.50" fill="#4c4f60"/><rect x="864.78" y="1215.32" width="1.16" height="4.68" fill="#d04ff0"/><rect x="867.61" y="1205.50" width="1.16" height="14.50" fill="#4c4f60"/><rect x="867.61" y="1214.16" width="1.16" height="5.84" fill="#f0a0cc"/><rect x="870.44" y="1205.50" width="1.16" height="14.50" fill="#4c4f60"/><rect x="870.44" y="1213.00" width="1.16" height="7.00" fill="#7050ee"/><rect x="873.26" y="1205.50" width="1.16" height="14.50" fill="#4c4f60"/><rect x="873.26" y="1211.84" width="1.16" height="8.16" fill="#f0903c"/><rect x="876.09" y="1205.50" width="1.16" height="14.50" fill="#4c4f60"/><rect x="876.09" y="1210.68" width="1.16" height="9.32" fill="#1fa898"/><rect x="878.92" y="1205.50" width="1.16" height="14.50" fill="#4c4f60"/><rect x="878.92" y="1209.52" width="1.16" height="10.48" fill="#e08ff0"/><rect x="881.75" y="1205.50" width="1.16" height="14.50" fill="#4c4f60"/><rect x="881.75" y="1208.36" width="1.16" height="11.64" fill="#f04286"/><rect x="884.57" y="1205.50" width="1.16" height="14.50" fill="#4c4f60"/><rect x="884.57" y="1207.20" width="1.16" height="12.80" fill="#f7be90"/><rect x="887.40" y="1205.50" width="1.16" height="14.50" fill="#4c4f60"/><rect x="887.40" y="1206.04" width="1.16" height="13.96" fill="#22c2b2"/><rect x="575.30" y="1242.60" width="1.40" height="1.20" fill="#b49cf7"/><rect x="578.72" y="1241.44" width="1.40" height="2.36" fill="#f07f2e"/><rect x="588.32" y="1242.60" width="1.40" height="1.20" fill="#b49cf7"/><rect x="591.74" y="1241.44" width="1.40" height="2.36" fill="#f07f2e"/><rect x="595.16" y="1240.28" width="1.40" height="3.52" fill="#4fded0"/><rect x="604.76" y="1242.60" width="1.40" height="1.20" fill="#b49cf7"/><rect x="608.18" y="1241.44" width="1.40" height="2.36" fill="#f07f2e"/><rect x="611.60" y="1240.28" width="1.40" height="3.52" fill="#4fded0"/><rect x="615.02" y="1239.12" width="1.40" height="4.68" fill="#d04ff0"/><rect x="624.62" y="1242.60" width="1.40" height="1.20" fill="#b49cf7"/><rect x="628.04" y="1241.44" width="1.40" height="2.36" fill="#f07f2e"/><rect x="631.46" y="1240.28" width="1.40" height="3.52" fill="#4fded0"/><rect x="634.88" y="1239.12" width="1.40" height="4.68" fill="#d04ff0"/><rect x="638.30" y="1237.96" width="1.40" height="5.84" fill="#f0a0cc"/><rect x="647.90" y="1242.60" width="1.40" height="1.20" fill="#b49cf7"/><rect x="651.32" y="1241.44" width="1.40" height="2.36" fill="#f07f2e"/><rect x="654.74" y="1240.28" width="1.40" height="3.52" fill="#4fded0"/><rect x="658.16" y="1239.12" width="1.40" height="4.68" fill="#d04ff0"/><rect x="661.58" y="1237.96" width="1.40" height="5.84" fill="#f0a0cc"/><rect x="665.00" y="1236.80" width="1.40" height="7.00" fill="#7050ee"/><rect x="674.60" y="1242.60" width="1.40" height="1.20" fill="#b49cf7"/><rect x="678.02" y="1241.44" width="1.40" height="2.36" fill="#f07f2e"/><rect x="681.44" y="1240.28" width="1.40" height="3.52" fill="#4fded0"/><rect x="684.86" y="1239.12" width="1.40" height="4.68" fill="#d04ff0"/><rect x="688.28" y="1237.96" width="1.40" height="5.84" fill="#f0a0cc"/><rect x="691.70" y="1236.80" width="1.40" height="7.00" fill="#7050ee"/><rect x="695.12" y="1235.64" width="1.40" height="8.16" fill="#f0903c"/><rect x="704.72" y="1242.60" width="1.40" height="1.20" fill="#b49cf7"/><rect x="708.14" y="1241.44" width="1.40" height="2.36" fill="#f07f2e"/><rect x="711.56" y="1240.28" width="1.40" height="3.52" fill="#4fded0"/><rect x="714.98" y="1239.12" width="1.40" height="4.68" fill="#d04ff0"/><rect x="718.40" y="1237.96" width="1.40" height="5.84" fill="#f0a0cc"/><rect x="721.82" y="1236.80" width="1.40" height="7.00" fill="#7050ee"/><rect x="725.24" y="1235.64" width="1.40" height="8.16" fill="#f0903c"/><rect x="728.66" y="1234.48" width="1.40" height="9.32" fill="#1fa898"/><rect x="738.26" y="1242.60" width="1.40" height="1.20" fill="#b49cf7"/><rect x="741.68" y="1241.44" width="1.40" height="2.36" fill="#f07f2e"/><rect x="745.10" y="1240.28" width="1.40" height="3.52" fill="#4fded0"/><rect x="748.52" y="1239.12" width="1.40" height="4.68" fill="#d04ff0"/><rect x="751.94" y="1237.96" width="1.40" height="5.84" fill="#f0a0cc"/><rect x="755.36" y="1236.80" width="1.40" height="7.00" fill="#7050ee"/><rect x="758.78" y="1235.64" width="1.40" height="8.16" fill="#f0903c"/><rect x="762.20" y="1234.48" width="1.40" height="9.32" fill="#1fa898"/><rect x="765.62" y="1233.32" width="1.40" height="10.48" fill="#e08ff0"/><rect x="775.22" y="1242.60" width="1.40" height="1.20" fill="#b49cf7"/><rect x="778.64" y="1241.44" width="1.40" height="2.36" fill="#f07f2e"/><rect x="782.06" y="1240.28" width="1.40" height="3.52" fill="#4fded0"/><rect x="785.48" y="1239.12" width="1.40" height="4.68" fill="#d04ff0"/><rect x="788.90" y="1237.96" width="1.40" height="5.84" fill="#f0a0cc"/><rect x="792.32" y="1236.80" width="1.40" height="7.00" fill="#7050ee"/><rect x="795.74" y="1235.64" width="1.40" height="8.16" fill="#f0903c"/><rect x="799.16" y="1234.48" width="1.40" height="9.32" fill="#1fa898"/><rect x="802.58" y="1233.32" width="1.40" height="10.48" fill="#e08ff0"/><rect x="806.00" y="1232.16" width="1.40" height="11.64" fill="#f04286"/><rect x="815.60" y="1242.60" width="1.27" height="1.20" fill="#b49cf7"/><rect x="818.71" y="1241.44" width="1.27" height="2.36" fill="#f07f2e"/><rect x="821.82" y="1240.28" width="1.27" height="3.52" fill="#4fded0"/><rect x="824.93" y="1239.12" width="1.27" height="4.68" fill="#d04ff0"/><rect x="828.04" y="1237.96" width="1.27" height="5.84" fill="#f0a0cc"/><rect x="831.15" y="1236.80" width="1.27" height="7.00" fill="#7050ee"/><rect x="834.26" y="1235.64" width="1.27" height="8.16" fill="#f0903c"/><rect x="837.37" y="1234.48" width="1.27" height="9.32" fill="#1fa898"/><rect x="840.48" y="1233.32" width="1.27" height="10.48" fill="#e08ff0"/><rect x="843.59" y="1232.16" width="1.27" height="11.64" fill="#f04286"/><rect x="846.70" y="1231.00" width="1.27" height="12.80" fill="#f7be90"/><rect x="856.30" y="1242.60" width="1.16" height="1.20" fill="#b49cf7"/><rect x="859.13" y="1241.44" width="1.16" height="2.36" fill="#f07f2e"/><rect x="861.95" y="1240.28" width="1.16" height="3.52" fill="#4fded0"/><rect x="864.78" y="1239.12" width="1.16" height="4.68" fill="#d04ff0"/><rect x="867.61" y="1237.96" width="1.16" height="5.84" fill="#f0a0cc"/><rect x="870.44" y="1236.80" width="1.16" height="7.00" fill="#7050ee"/><rect x="873.26" y="1235.64" width="1.16" height="8.16" fill="#f0903c"/><rect x="876.09" y="1234.48" width="1.16" height="9.32" fill="#1fa898"/><rect x="878.92" y="1233.32" width="1.16" height="10.48" fill="#e08ff0"/><rect x="881.75" y="1232.16" width="1.16" height="11.64" fill="#f04286"/><rect x="884.57" y="1231.00" width="1.16" height="12.80" fill="#f7be90"/><rect x="887.40" y="1229.84" width="1.16" height="13.96" fill="#22c2b2"/><rect x="897.00" y="1242.60" width="1.19" height="1.20" fill="#b49cf7"/><rect x="899.91" y="1241.44" width="1.19" height="2.36" fill="#f07f2e"/><rect x="902.81" y="1240.28" width="1.19" height="3.52" fill="#4fded0"/><rect x="905.72" y="1239.12" width="1.19" height="4.68" fill="#d04ff0"/><rect x="908.62" y="1237.96" width="1.19" height="5.84" fill="#f0a0cc"/><rect x="911.53" y="1236.80" width="1.19" height="7.00" fill="#7050ee"/><rect x="914.43" y="1235.64" width="1.19" height="8.16" fill="#f0903c"/><rect x="917.34" y="1234.48" width="1.19" height="9.32" fill="#1fa898"/><rect x="920.24" y="1233.32" width="1.19" height="10.48" fill="#e08ff0"/><rect x="923.15" y="1232.16" width="1.19" height="11.64" fill="#f04286"/><rect x="926.05" y="1231.00" width="1.19" height="12.80" fill="#f7be90"/><rect x="928.96" y="1229.84" width="1.19" height="13.96" fill="#22c2b2"/><rect x="931.86" y="1234.30" width="1.19" height="9.50" fill="#22c2b2"/><rect x="934.77" y="1239.80" width="1.19" height="4.00" fill="#7050ee"/><rect x="937.67" y="1238.30" width="1.19" height="5.50" fill="#f0a0cc"/><rect x="940.58" y="1231.30" width="1.19" height="12.50" fill="#f04286"/><rect x="943.48" y="1239.80" width="1.19" height="4.00" fill="#7a5af0"/><rect x="946.39" y="1235.30" width="1.19" height="8.50" fill="#7a5af0"/><rect x="949.29" y="1235.30" width="1.19" height="8.50" fill="#7a5af0"/><rect x="952.20" y="1232.80" width="1.19" height="11.00" fill="#7a5af0"/><rect x="961.80" y="1242.60" width="0.98" height="1.20" fill="#b49cf7"/><rect x="964.20" y="1241.44" width="0.98" height="2.36" fill="#f07f2e"/><rect x="966.60" y="1240.28" width="0.98" height="3.52" fill="#4fded0"/><rect x="969.00" y="1239.12" width="0.98" height="4.68" fill="#d04ff0"/><rect x="971.40" y="1237.96" width="0.98" height="5.84" fill="#f0a0cc"/><rect x="973.80" y="1236.80" width="0.98" height="7.00" fill="#7050ee"/><rect x="976.20" y="1235.64" width="0.98" height="8.16" fill="#f0903c"/><rect x="978.60" y="1234.48" width="0.98" height="9.32" fill="#1fa898"/><rect x="981.00" y="1233.32" width="0.98" height="10.48" fill="#e08ff0"/><rect x="983.40" y="1232.16" width="0.98" height="11.64" fill="#f04286"/><rect x="985.80" y="1231.00" width="0.98" height="12.80" fill="#f7be90"/><rect x="988.20" y="1229.84" width="0.98" height="13.96" fill="#22c2b2"/><rect x="990.60" y="1234.30" width="0.98" height="9.50" fill="#22c2b2"/><rect x="993.00" y="1239.80" width="0.98" height="4.00" fill="#7050ee"/><rect x="995.40" y="1238.30" width="0.98" height="5.50" fill="#f0a0cc"/><rect x="997.80" y="1231.30" width="0.98" height="12.50" fill="#f04286"/><rect x="1000.20" y="1239.80" width="0.98" height="4.00" fill="#7a5af0"/><rect x="1002.60" y="1235.30" width="0.98" height="8.50" fill="#7a5af0"/><rect x="1005.00" y="1235.30" width="0.98" height="8.50" fill="#7a5af0"/><rect x="1007.40" y="1232.80" width="0.98" height="11.00" fill="#7a5af0"/><rect x="1009.80" y="1239.80" width="0.98" height="4.00" fill="#7a5af0"/><rect x="1012.20" y="1236.80" width="0.98" height="7.00" fill="#7a5af0"/><rect x="1014.60" y="1238.30" width="0.98" height="5.50" fill="#7a5af0"/><rect x="1017.00" y="1240.80" width="0.98" height="3.00" fill="#7a5af0"/><rect x="575.30" y="1253.10" width="1.40" height="14.50" fill="#4c4f60"/><rect x="575.30" y="1266.40" width="1.40" height="1.20" fill="#b49cf7"/><rect x="578.72" y="1253.10" width="1.40" height="14.50" fill="#4c4f60"/><rect x="578.72" y="1265.24" width="1.40" height="2.36" fill="#f07f2e"/><rect x="588.32" y="1253.10" width="1.40" height="14.50" fill="#4c4f60"/><rect x="588.32" y="1266.40" width="1.40" height="1.20" fill="#b49cf7"/><rect x="591.74" y="1253.10" width="1.40" height="14.50" fill="#4c4f60"/><rect x="591.74" y="1265.24" width="1.40" height="2.36" fill="#f07f2e"/><rect x="595.16" y="1253.10" width="1.40" height="14.50" fill="#4c4f60"/><rect x="595.16" y="1264.08" width="1.40" height="3.52" fill="#4fded0"/><rect x="604.76" y="1253.10" width="1.40" height="14.50" fill="#4c4f60"/><rect x="604.76" y="1266.40" width="1.40" height="1.20" fill="#b49cf7"/><rect x="608.18" y="1253.10" width="1.40" height="14.50" fill="#4c4f60"/><rect x="608.18" y="1265.24" width="1.40" height="2.36" fill="#f07f2e"/><rect x="611.60" y="1253.10" width="1.40" height="14.50" fill="#4c4f60"/><rect x="611.60" y="1264.08" width="1.40" height="3.52" fill="#4fded0"/><rect x="615.02" y="1253.10" width="1.40" height="14.50" fill="#4c4f60"/><rect x="615.02" y="1262.92" width="1.40" height="4.68" fill="#d04ff0"/><rect x="624.62" y="1253.10" width="1.40" height="14.50" fill="#4c4f60"/><rect x="624.62" y="1266.40" width="1.40" height="1.20" fill="#b49cf7"/><rect x="628.04" y="1253.10" width="1.40" height="14.50" fill="#4c4f60"/><rect x="628.04" y="1265.24" width="1.40" height="2.36" fill="#f07f2e"/><rect x="631.46" y="1253.10" width="1.40" height="14.50" fill="#4c4f60"/><rect x="631.46" y="1264.08" width="1.40" height="3.52" fill="#4fded0"/><rect x="634.88" y="1253.10" width="1.40" height="14.50" fill="#4c4f60"/><rect x="634.88" y="1262.92" width="1.40" height="4.68" fill="#d04ff0"/><rect x="638.30" y="1253.10" width="1.40" height="14.50" fill="#4c4f60"/><rect x="638.30" y="1261.76" width="1.40" height="5.84" fill="#f0a0cc"/><rect x="647.90" y="1253.10" width="1.40" height="14.50" fill="#4c4f60"/><rect x="647.90" y="1266.40" width="1.40" height="1.20" fill="#b49cf7"/><rect x="651.32" y="1253.10" width="1.40" height="14.50" fill="#4c4f60"/><rect x="651.32" y="1265.24" width="1.40" height="2.36" fill="#f07f2e"/><rect x="654.74" y="1253.10" width="1.40" height="14.50" fill="#4c4f60"/><rect x="654.74" y="1264.08" width="1.40" height="3.52" fill="#4fded0"/><rect x="658.16" y="1253.10" width="1.40" height="14.50" fill="#4c4f60"/><rect x="658.16" y="1262.92" width="1.40" height="4.68" fill="#d04ff0"/><rect x="661.58" y="1253.10" width="1.40" height="14.50" fill="#4c4f60"/><rect x="661.58" y="1261.76" width="1.40" height="5.84" fill="#f0a0cc"/><rect x="665.00" y="1253.10" width="1.40" height="14.50" fill="#4c4f60"/><rect x="665.00" y="1260.60" width="1.40" height="7.00" fill="#7050ee"/><rect x="674.60" y="1253.10" width="1.40" height="14.50" fill="#4c4f60"/><rect x="674.60" y="1266.40" width="1.40" height="1.20" fill="#b49cf7"/><rect x="678.02" y="1253.10" width="1.40" height="14.50" fill="#4c4f60"/><rect x="678.02" y="1265.24" width="1.40" height="2.36" fill="#f07f2e"/><rect x="681.44" y="1253.10" width="1.40" height="14.50" fill="#4c4f60"/><rect x="681.44" y="1264.08" width="1.40" height="3.52" fill="#4fded0"/><rect x="684.86" y="1253.10" width="1.40" height="14.50" fill="#4c4f60"/><rect x="684.86" y="1262.92" width="1.40" height="4.68" fill="#d04ff0"/><rect x="688.28" y="1253.10" width="1.40" height="14.50" fill="#4c4f60"/><rect x="688.28" y="1261.76" width="1.40" height="5.84" fill="#f0a0cc"/><rect x="691.70" y="1253.10" width="1.40" height="14.50" fill="#4c4f60"/><rect x="691.70" y="1260.60" width="1.40" height="7.00" fill="#7050ee"/><rect x="695.12" y="1253.10" width="1.40" height="14.50" fill="#4c4f60"/><rect x="695.12" y="1259.44" width="1.40" height="8.16" fill="#f0903c"/><rect x="704.72" y="1253.10" width="1.40" height="14.50" fill="#4c4f60"/><rect x="704.72" y="1266.40" width="1.40" height="1.20" fill="#b49cf7"/><rect x="708.14" y="1253.10" width="1.40" height="14.50" fill="#4c4f60"/><rect x="708.14" y="1265.24" width="1.40" height="2.36" fill="#f07f2e"/><rect x="711.56" y="1253.10" width="1.40" height="14.50" fill="#4c4f60"/><rect x="711.56" y="1264.08" width="1.40" height="3.52" fill="#4fded0"/><rect x="714.98" y="1253.10" width="1.40" height="14.50" fill="#4c4f60"/><rect x="714.98" y="1262.92" width="1.40" height="4.68" fill="#d04ff0"/><rect x="718.40" y="1253.10" width="1.40" height="14.50" fill="#4c4f60"/><rect x="718.40" y="1261.76" width="1.40" height="5.84" fill="#f0a0cc"/><rect x="721.82" y="1253.10" width="1.40" height="14.50" fill="#4c4f60"/><rect x="721.82" y="1260.60" width="1.40" height="7.00" fill="#7050ee"/><rect x="725.24" y="1253.10" width="1.40" height="14.50" fill="#4c4f60"/><rect x="725.24" y="1259.44" width="1.40" height="8.16" fill="#f0903c"/><rect x="728.66" y="1253.10" width="1.40" height="14.50" fill="#4c4f60"/><rect x="728.66" y="1258.28" width="1.40" height="9.32" fill="#1fa898"/><rect x="738.26" y="1253.10" width="1.40" height="14.50" fill="#4c4f60"/><rect x="738.26" y="1266.40" width="1.40" height="1.20" fill="#b49cf7"/><rect x="741.68" y="1253.10" width="1.40" height="14.50" fill="#4c4f60"/><rect x="741.68" y="1265.24" width="1.40" height="2.36" fill="#f07f2e"/><rect x="745.10" y="1253.10" width="1.40" height="14.50" fill="#4c4f60"/><rect x="745.10" y="1264.08" width="1.40" height="3.52" fill="#4fded0"/><rect x="748.52" y="1253.10" width="1.40" height="14.50" fill="#4c4f60"/><rect x="748.52" y="1262.92" width="1.40" height="4.68" fill="#d04ff0"/><rect x="751.94" y="1253.10" width="1.40" height="14.50" fill="#4c4f60"/><rect x="751.94" y="1261.76" width="1.40" height="5.84" fill="#f0a0cc"/><rect x="755.36" y="1253.10" width="1.40" height="14.50" fill="#4c4f60"/><rect x="755.36" y="1260.60" width="1.40" height="7.00" fill="#7050ee"/><rect x="758.78" y="1253.10" width="1.40" height="14.50" fill="#4c4f60"/><rect x="758.78" y="1259.44" width="1.40" height="8.16" fill="#f0903c"/><rect x="762.20" y="1253.10" width="1.40" height="14.50" fill="#4c4f60"/><rect x="762.20" y="1258.28" width="1.40" height="9.32" fill="#1fa898"/><rect x="765.62" y="1253.10" width="1.40" height="14.50" fill="#4c4f60"/><rect x="765.62" y="1257.12" width="1.40" height="10.48" fill="#e08ff0"/><rect x="775.22" y="1253.10" width="1.40" height="14.50" fill="#4c4f60"/><rect x="775.22" y="1266.40" width="1.40" height="1.20" fill="#b49cf7"/><rect x="778.64" y="1253.10" width="1.40" height="14.50" fill="#4c4f60"/><rect x="778.64" y="1265.24" width="1.40" height="2.36" fill="#f07f2e"/><rect x="782.06" y="1253.10" width="1.40" height="14.50" fill="#4c4f60"/><rect x="782.06" y="1264.08" width="1.40" height="3.52" fill="#4fded0"/><rect x="785.48" y="1253.10" width="1.40" height="14.50" fill="#4c4f60"/><rect x="785.48" y="1262.92" width="1.40" height="4.68" fill="#d04ff0"/><rect x="788.90" y="1253.10" width="1.40" height="14.50" fill="#4c4f60"/><rect x="788.90" y="1261.76" width="1.40" height="5.84" fill="#f0a0cc"/><rect x="792.32" y="1253.10" width="1.40" height="14.50" fill="#4c4f60"/><rect x="792.32" y="1260.60" width="1.40" height="7.00" fill="#7050ee"/><rect x="795.74" y="1253.10" width="1.40" height="14.50" fill="#4c4f60"/><rect x="795.74" y="1259.44" width="1.40" height="8.16" fill="#f0903c"/><rect x="799.16" y="1253.10" width="1.40" height="14.50" fill="#4c4f60"/><rect x="799.16" y="1258.28" width="1.40" height="9.32" fill="#1fa898"/><rect x="802.58" y="1253.10" width="1.40" height="14.50" fill="#4c4f60"/><rect x="802.58" y="1257.12" width="1.40" height="10.48" fill="#e08ff0"/><rect x="806.00" y="1253.10" width="1.40" height="14.50" fill="#4c4f60"/><rect x="806.00" y="1255.96" width="1.40" height="11.64" fill="#f04286"/><rect x="815.60" y="1253.10" width="1.27" height="14.50" fill="#4c4f60"/><rect x="815.60" y="1266.40" width="1.27" height="1.20" fill="#b49cf7"/><rect x="818.71" y="1253.10" width="1.27" height="14.50" fill="#4c4f60"/><rect x="818.71" y="1265.24" width="1.27" height="2.36" fill="#f07f2e"/><rect x="821.82" y="1253.10" width="1.27" height="14.50" fill="#4c4f60"/><rect x="821.82" y="1264.08" width="1.27" height="3.52" fill="#4fded0"/><rect x="824.93" y="1253.10" width="1.27" height="14.50" fill="#4c4f60"/><rect x="824.93" y="1262.92" width="1.27" height="4.68" fill="#d04ff0"/><rect x="828.04" y="1253.10" width="1.27" height="14.50" fill="#4c4f60"/><rect x="828.04" y="1261.76" width="1.27" height="5.84" fill="#f0a0cc"/><rect x="831.15" y="1253.10" width="1.27" height="14.50" fill="#4c4f60"/><rect x="831.15" y="1260.60" width="1.27" height="7.00" fill="#7050ee"/><rect x="834.26" y="1253.10" width="1.27" height="14.50" fill="#4c4f60"/><rect x="834.26" y="1259.44" width="1.27" height="8.16" fill="#f0903c"/><rect x="837.37" y="1253.10" width="1.27" height="14.50" fill="#4c4f60"/><rect x="837.37" y="1258.28" width="1.27" height="9.32" fill="#1fa898"/><rect x="840.48" y="1253.10" width="1.27" height="14.50" fill="#4c4f60"/><rect x="840.48" y="1257.12" width="1.27" height="10.48" fill="#e08ff0"/><rect x="843.59" y="1253.10" width="1.27" height="14.50" fill="#4c4f60"/><rect x="843.59" y="1255.96" width="1.27" height="11.64" fill="#f04286"/><rect x="846.70" y="1253.10" width="1.27" height="14.50" fill="#4c4f60"/><rect x="846.70" y="1254.80" width="1.27" height="12.80" fill="#f7be90"/><rect x="856.30" y="1253.10" width="1.16" height="14.50" fill="#4c4f60"/><rect x="856.30" y="1266.40" width="1.16" height="1.20" fill="#b49cf7"/><rect x="859.13" y="1253.10" width="1.16" height="14.50" fill="#4c4f60"/><rect x="859.13" y="1265.24" width="1.16" height="2.36" fill="#f07f2e"/><rect x="861.95" y="1253.10" width="1.16" height="14.50" fill="#4c4f60"/><rect x="861.95" y="1264.08" width="1.16" height="3.52" fill="#4fded0"/><rect x="864.78" y="1253.10" width="1.16" height="14.50" fill="#4c4f60"/><rect x="864.78" y="1262.92" width="1.16" height="4.68" fill="#d04ff0"/><rect x="867.61" y="1253.10" width="1.16" height="14.50" fill="#4c4f60"/><rect x="867.61" y="1261.76" width="1.16" height="5.84" fill="#f0a0cc"/><rect x="870.44" y="1253.10" width="1.16" height="14.50" fill="#4c4f60"/><rect x="870.44" y="1260.60" width="1.16" height="7.00" fill="#7050ee"/><rect x="873.26" y="1253.10" width="1.16" height="14.50" fill="#4c4f60"/><rect x="873.26" y="1259.44" width="1.16" height="8.16" fill="#f0903c"/><rect x="876.09" y="1253.10" width="1.16" height="14.50" fill="#4c4f60"/><rect x="876.09" y="1258.28" width="1.16" height="9.32" fill="#1fa898"/><rect x="878.92" y="1253.10" width="1.16" height="14.50" fill="#4c4f60"/><rect x="878.92" y="1257.12" width="1.16" height="10.48" fill="#e08ff0"/><rect x="881.75" y="1253.10" width="1.16" height="14.50" fill="#4c4f60"/><rect x="881.75" y="1255.96" width="1.16" height="11.64" fill="#f04286"/><rect x="884.57" y="1253.10" width="1.16" height="14.50" fill="#4c4f60"/><rect x="884.57" y="1254.80" width="1.16" height="12.80" fill="#f7be90"/><rect x="887.40" y="1253.10" width="1.16" height="14.50" fill="#4c4f60"/><rect x="887.40" y="1253.64" width="1.16" height="13.96" fill="#22c2b2"/><rect x="575.30" y="1290.20" width="4.30" height="1.20" fill="#b49cf7"/><rect x="580.75" y="1289.04" width="4.30" height="2.36" fill="#f07f2e"/><rect x="591.55" y="1290.20" width="4.30" height="1.20" fill="#b49cf7"/><rect x="597.00" y="1289.04" width="4.30" height="2.36" fill="#f07f2e"/><rect x="602.45" y="1287.88" width="4.30" height="3.52" fill="#4fded0"/><rect x="613.25" y="1290.20" width="4.30" height="1.20" fill="#b49cf7"/><rect x="618.70" y="1289.04" width="4.30" height="2.36" fill="#f07f2e"/><rect x="624.15" y="1287.88" width="4.30" height="3.52" fill="#4fded0"/><rect x="629.60" y="1286.72" width="4.30" height="4.68" fill="#d04ff0"/><rect x="640.40" y="1290.20" width="4.30" height="1.20" fill="#b49cf7"/><rect x="645.85" y="1289.04" width="4.30" height="2.36" fill="#f07f2e"/><rect x="651.30" y="1287.88" width="4.30" height="3.52" fill="#4fded0"/><rect x="656.75" y="1286.72" width="4.30" height="4.68" fill="#d04ff0"/><rect x="662.20" y="1285.56" width="4.30" height="5.84" fill="#f0a0cc"/><rect x="673.00" y="1290.20" width="4.30" height="1.20" fill="#b49cf7"/><rect x="678.45" y="1289.04" width="4.30" height="2.36" fill="#f07f2e"/><rect x="683.90" y="1287.88" width="4.30" height="3.52" fill="#4fded0"/><rect x="689.35" y="1286.72" width="4.30" height="4.68" fill="#d04ff0"/><rect x="694.80" y="1285.56" width="4.30" height="5.84" fill="#f0a0cc"/><rect x="700.25" y="1284.40" width="4.30" height="7.00" fill="#7050ee"/><rect x="711.05" y="1290.20" width="4.30" height="1.20" fill="#b49cf7"/><rect x="716.50" y="1289.04" width="4.30" height="2.36" fill="#f07f2e"/><rect x="721.95" y="1287.88" width="4.30" height="3.52" fill="#4fded0"/><rect x="727.40" y="1286.72" width="4.30" height="4.68" fill="#d04ff0"/><rect x="732.85" y="1285.56" width="4.30" height="5.84" fill="#f0a0cc"/><rect x="738.30" y="1284.40" width="4.30" height="7.00" fill="#7050ee"/><rect x="743.75" y="1283.24" width="4.30" height="8.16" fill="#f0903c"/><rect x="754.55" y="1290.20" width="4.30" height="1.20" fill="#b49cf7"/><rect x="760.00" y="1289.04" width="4.30" height="2.36" fill="#f07f2e"/><rect x="765.45" y="1287.88" width="4.30" height="3.52" fill="#4fded0"/><rect x="770.90" y="1286.72" width="4.30" height="4.68" fill="#d04ff0"/><rect x="776.35" y="1285.56" width="4.30" height="5.84" fill="#f0a0cc"/><rect x="781.80" y="1284.40" width="4.30" height="7.00" fill="#7050ee"/><rect x="787.25" y="1283.24" width="4.30" height="8.16" fill="#f0903c"/><rect x="792.70" y="1282.08" width="4.30" height="9.32" fill="#1fa898"/><rect x="803.50" y="1290.20" width="4.30" height="1.20" fill="#b49cf7"/><rect x="808.95" y="1289.04" width="4.30" height="2.36" fill="#f07f2e"/><rect x="814.40" y="1287.88" width="4.30" height="3.52" fill="#4fded0"/><rect x="819.85" y="1286.72" width="4.30" height="4.68" fill="#d04ff0"/><rect x="825.30" y="1285.56" width="4.30" height="5.84" fill="#f0a0cc"/><rect x="830.75" y="1284.40" width="4.30" height="7.00" fill="#7050ee"/><rect x="836.20" y="1283.24" width="4.30" height="8.16" fill="#f0903c"/><rect x="841.65" y="1282.08" width="4.30" height="9.32" fill="#1fa898"/><rect x="847.10" y="1280.92" width="4.30" height="10.48" fill="#e08ff0"/><rect x="857.90" y="1290.20" width="4.30" height="1.20" fill="#b49cf7"/><rect x="863.35" y="1289.04" width="4.30" height="2.36" fill="#f07f2e"/><rect x="868.80" y="1287.88" width="4.30" height="3.52" fill="#4fded0"/><rect x="874.25" y="1286.72" width="4.30" height="4.68" fill="#d04ff0"/><rect x="879.70" y="1285.56" width="4.30" height="5.84" fill="#f0a0cc"/><rect x="885.15" y="1284.40" width="4.30" height="7.00" fill="#7050ee"/><rect x="890.60" y="1283.24" width="4.30" height="8.16" fill="#f0903c"/><rect x="896.05" y="1282.08" width="4.30" height="9.32" fill="#1fa898"/><rect x="901.50" y="1280.92" width="4.30" height="10.48" fill="#e08ff0"/><rect x="906.95" y="1279.76" width="4.30" height="11.64" fill="#f04286"/><rect x="917.75" y="1290.20" width="3.94" height="1.20" fill="#b49cf7"/><rect x="922.74" y="1289.04" width="3.94" height="2.36" fill="#f07f2e"/><rect x="927.73" y="1287.88" width="3.94" height="3.52" fill="#4fded0"/><rect x="932.72" y="1286.72" width="3.94" height="4.68" fill="#d04ff0"/><rect x="937.71" y="1285.56" width="3.94" height="5.84" fill="#f0a0cc"/><rect x="942.70" y="1284.40" width="3.94" height="7.00" fill="#7050ee"/><rect x="947.69" y="1283.24" width="3.94" height="8.16" fill="#f0903c"/><rect x="952.68" y="1282.08" width="3.94" height="9.32" fill="#1fa898"/><rect x="957.67" y="1280.92" width="3.94" height="10.48" fill="#e08ff0"/><rect x="962.66" y="1279.76" width="3.94" height="11.64" fill="#f04286"/><rect x="967.65" y="1278.60" width="3.94" height="12.80" fill="#f7be90"/><rect x="978.45" y="1290.20" width="3.58" height="1.20" fill="#b49cf7"/><rect x="982.99" y="1289.04" width="3.58" height="2.36" fill="#f07f2e"/><rect x="987.52" y="1287.88" width="3.58" height="3.52" fill="#4fded0"/><rect x="992.06" y="1286.72" width="3.58" height="4.68" fill="#d04ff0"/><rect x="996.60" y="1285.56" width="3.58" height="5.84" fill="#f0a0cc"/><rect x="1001.13" y="1284.40" width="3.58" height="7.00" fill="#7050ee"/><rect x="1005.67" y="1283.24" width="3.58" height="8.16" fill="#f0903c"/><rect x="1010.20" y="1282.08" width="3.58" height="9.32" fill="#1fa898"/><rect x="1014.74" y="1280.92" width="3.58" height="10.48" fill="#e08ff0"/><rect x="1019.28" y="1279.76" width="3.58" height="11.64" fill="#f04286"/><rect x="1023.81" y="1278.60" width="3.58" height="12.80" fill="#f7be90"/><rect x="1028.35" y="1277.44" width="3.58" height="13.96" fill="#22c2b2"/><rect x="1039.15" y="1290.20" width="4.18" height="1.20" fill="#b49cf7"/><rect x="1044.45" y="1289.04" width="4.18" height="2.36" fill="#f07f2e"/><rect x="1049.75" y="1287.88" width="4.18" height="3.52" fill="#4fded0"/><rect x="1055.05" y="1286.72" width="4.18" height="4.68" fill="#d04ff0"/><rect x="1060.35" y="1285.56" width="4.18" height="5.84" fill="#f0a0cc"/><rect x="1065.65" y="1284.40" width="4.18" height="7.00" fill="#7050ee"/><rect x="1070.95" y="1283.24" width="4.18" height="8.16" fill="#f0903c"/><rect x="1076.25" y="1282.08" width="4.18" height="9.32" fill="#1fa898"/><rect x="1081.55" y="1280.92" width="4.18" height="10.48" fill="#e08ff0"/><rect x="1086.85" y="1279.76" width="4.18" height="11.64" fill="#f04286"/><rect x="1092.15" y="1278.60" width="4.18" height="12.80" fill="#f7be90"/><rect x="1097.45" y="1277.44" width="4.18" height="13.96" fill="#22c2b2"/><rect x="1102.75" y="1281.90" width="4.18" height="9.50" fill="#22c2b2"/><rect x="1108.05" y="1287.40" width="4.18" height="4.00" fill="#7050ee"/><rect x="1113.35" y="1285.90" width="4.18" height="5.50" fill="#f0a0cc"/><rect x="1118.65" y="1278.90" width="4.18" height="12.50" fill="#f04286"/><rect x="1123.95" y="1287.40" width="4.18" height="4.00" fill="#7a5af0"/><rect x="1129.25" y="1282.90" width="4.18" height="8.50" fill="#7a5af0"/><rect x="1134.55" y="1282.90" width="4.18" height="8.50" fill="#7a5af0"/><rect x="1139.85" y="1280.40" width="4.18" height="11.00" fill="#7a5af0"/><rect x="575.30" y="1299.40" width="4.30" height="14.50" fill="#4c4f60"/><rect x="575.30" y="1312.70" width="4.30" height="1.20" fill="#b49cf7"/><rect x="580.75" y="1299.40" width="4.30" height="14.50" fill="#4c4f60"/><rect x="580.75" y="1311.54" width="4.30" height="2.36" fill="#f07f2e"/><rect x="591.55" y="1299.40" width="4.30" height="14.50" fill="#4c4f60"/><rect x="591.55" y="1312.70" width="4.30" height="1.20" fill="#b49cf7"/><rect x="597.00" y="1299.40" width="4.30" height="14.50" fill="#4c4f60"/><rect x="597.00" y="1311.54" width="4.30" height="2.36" fill="#f07f2e"/><rect x="602.45" y="1299.40" width="4.30" height="14.50" fill="#4c4f60"/><rect x="602.45" y="1310.38" width="4.30" height="3.52" fill="#4fded0"/><rect x="613.25" y="1299.40" width="4.30" height="14.50" fill="#4c4f60"/><rect x="613.25" y="1312.70" width="4.30" height="1.20" fill="#b49cf7"/><rect x="618.70" y="1299.40" width="4.30" height="14.50" fill="#4c4f60"/><rect x="618.70" y="1311.54" width="4.30" height="2.36" fill="#f07f2e"/><rect x="624.15" y="1299.40" width="4.30" height="14.50" fill="#4c4f60"/><rect x="624.15" y="1310.38" width="4.30" height="3.52" fill="#4fded0"/><rect x="629.60" y="1299.40" width="4.30" height="14.50" fill="#4c4f60"/><rect x="629.60" y="1309.22" width="4.30" height="4.68" fill="#d04ff0"/><rect x="640.40" y="1299.40" width="4.30" height="14.50" fill="#4c4f60"/><rect x="640.40" y="1312.70" width="4.30" height="1.20" fill="#b49cf7"/><rect x="645.85" y="1299.40" width="4.30" height="14.50" fill="#4c4f60"/><rect x="645.85" y="1311.54" width="4.30" height="2.36" fill="#f07f2e"/><rect x="651.30" y="1299.40" width="4.30" height="14.50" fill="#4c4f60"/><rect x="651.30" y="1310.38" width="4.30" height="3.52" fill="#4fded0"/><rect x="656.75" y="1299.40" width="4.30" height="14.50" fill="#4c4f60"/><rect x="656.75" y="1309.22" width="4.30" height="4.68" fill="#d04ff0"/><rect x="662.20" y="1299.40" width="4.30" height="14.50" fill="#4c4f60"/><rect x="662.20" y="1308.06" width="4.30" height="5.84" fill="#f0a0cc"/><rect x="673.00" y="1299.40" width="4.30" height="14.50" fill="#4c4f60"/><rect x="673.00" y="1312.70" width="4.30" height="1.20" fill="#b49cf7"/><rect x="678.45" y="1299.40" width="4.30" height="14.50" fill="#4c4f60"/><rect x="678.45" y="1311.54" width="4.30" height="2.36" fill="#f07f2e"/><rect x="683.90" y="1299.40" width="4.30" height="14.50" fill="#4c4f60"/><rect x="683.90" y="1310.38" width="4.30" height="3.52" fill="#4fded0"/><rect x="689.35" y="1299.40" width="4.30" height="14.50" fill="#4c4f60"/><rect x="689.35" y="1309.22" width="4.30" height="4.68" fill="#d04ff0"/><rect x="694.80" y="1299.40" width="4.30" height="14.50" fill="#4c4f60"/><rect x="694.80" y="1308.06" width="4.30" height="5.84" fill="#f0a0cc"/><rect x="700.25" y="1299.40" width="4.30" height="14.50" fill="#4c4f60"/><rect x="700.25" y="1306.90" width="4.30" height="7.00" fill="#7050ee"/><rect x="711.05" y="1299.40" width="4.30" height="14.50" fill="#4c4f60"/><rect x="711.05" y="1312.70" width="4.30" height="1.20" fill="#b49cf7"/><rect x="716.50" y="1299.40" width="4.30" height="14.50" fill="#4c4f60"/><rect x="716.50" y="1311.54" width="4.30" height="2.36" fill="#f07f2e"/><rect x="721.95" y="1299.40" width="4.30" height="14.50" fill="#4c4f60"/><rect x="721.95" y="1310.38" width="4.30" height="3.52" fill="#4fded0"/><rect x="727.40" y="1299.40" width="4.30" height="14.50" fill="#4c4f60"/><rect x="727.40" y="1309.22" width="4.30" height="4.68" fill="#d04ff0"/><rect x="732.85" y="1299.40" width="4.30" height="14.50" fill="#4c4f60"/><rect x="732.85" y="1308.06" width="4.30" height="5.84" fill="#f0a0cc"/><rect x="738.30" y="1299.40" width="4.30" height="14.50" fill="#4c4f60"/><rect x="738.30" y="1306.90" width="4.30" height="7.00" fill="#7050ee"/><rect x="743.75" y="1299.40" width="4.30" height="14.50" fill="#4c4f60"/><rect x="743.75" y="1305.74" width="4.30" height="8.16" fill="#f0903c"/><rect x="754.55" y="1299.40" width="4.30" height="14.50" fill="#4c4f60"/><rect x="754.55" y="1312.70" width="4.30" height="1.20" fill="#b49cf7"/><rect x="760.00" y="1299.40" width="4.30" height="14.50" fill="#4c4f60"/><rect x="760.00" y="1311.54" width="4.30" height="2.36" fill="#f07f2e"/><rect x="765.45" y="1299.40" width="4.30" height="14.50" fill="#4c4f60"/><rect x="765.45" y="1310.38" width="4.30" height="3.52" fill="#4fded0"/><rect x="770.90" y="1299.40" width="4.30" height="14.50" fill="#4c4f60"/><rect x="770.90" y="1309.22" width="4.30" height="4.68" fill="#d04ff0"/><rect x="776.35" y="1299.40" width="4.30" height="14.50" fill="#4c4f60"/><rect x="776.35" y="1308.06" width="4.30" height="5.84" fill="#f0a0cc"/><rect x="781.80" y="1299.40" width="4.30" height="14.50" fill="#4c4f60"/><rect x="781.80" y="1306.90" width="4.30" height="7.00" fill="#7050ee"/><rect x="787.25" y="1299.40" width="4.30" height="14.50" fill="#4c4f60"/><rect x="787.25" y="1305.74" width="4.30" height="8.16" fill="#f0903c"/><rect x="792.70" y="1299.40" width="4.30" height="14.50" fill="#4c4f60"/><rect x="792.70" y="1304.58" width="4.30" height="9.32" fill="#1fa898"/><rect x="803.50" y="1299.40" width="4.30" height="14.50" fill="#4c4f60"/><rect x="803.50" y="1312.70" width="4.30" height="1.20" fill="#b49cf7"/><rect x="808.95" y="1299.40" width="4.30" height="14.50" fill="#4c4f60"/><rect x="808.95" y="1311.54" width="4.30" height="2.36" fill="#f07f2e"/><rect x="814.40" y="1299.40" width="4.30" height="14.50" fill="#4c4f60"/><rect x="814.40" y="1310.38" width="4.30" height="3.52" fill="#4fded0"/><rect x="819.85" y="1299.40" width="4.30" height="14.50" fill="#4c4f60"/><rect x="819.85" y="1309.22" width="4.30" height="4.68" fill="#d04ff0"/><rect x="825.30" y="1299.40" width="4.30" height="14.50" fill="#4c4f60"/><rect x="825.30" y="1308.06" width="4.30" height="5.84" fill="#f0a0cc"/><rect x="830.75" y="1299.40" width="4.30" height="14.50" fill="#4c4f60"/><rect x="830.75" y="1306.90" width="4.30" height="7.00" fill="#7050ee"/><rect x="836.20" y="1299.40" width="4.30" height="14.50" fill="#4c4f60"/><rect x="836.20" y="1305.74" width="4.30" height="8.16" fill="#f0903c"/><rect x="841.65" y="1299.40" width="4.30" height="14.50" fill="#4c4f60"/><rect x="841.65" y="1304.58" width="4.30" height="9.32" fill="#1fa898"/><rect x="847.10" y="1299.40" width="4.30" height="14.50" fill="#4c4f60"/><rect x="847.10" y="1303.42" width="4.30" height="10.48" fill="#e08ff0"/><rect x="857.90" y="1299.40" width="4.30" height="14.50" fill="#4c4f60"/><rect x="857.90" y="1312.70" width="4.30" height="1.20" fill="#b49cf7"/><rect x="863.35" y="1299.40" width="4.30" height="14.50" fill="#4c4f60"/><rect x="863.35" y="1311.54" width="4.30" height="2.36" fill="#f07f2e"/><rect x="868.80" y="1299.40" width="4.30" height="14.50" fill="#4c4f60"/><rect x="868.80" y="1310.38" width="4.30" height="3.52" fill="#4fded0"/><rect x="874.25" y="1299.40" width="4.30" height="14.50" fill="#4c4f60"/><rect x="874.25" y="1309.22" width="4.30" height="4.68" fill="#d04ff0"/><rect x="879.70" y="1299.40" width="4.30" height="14.50" fill="#4c4f60"/><rect x="879.70" y="1308.06" width="4.30" height="5.84" fill="#f0a0cc"/><rect x="885.15" y="1299.40" width="4.30" height="14.50" fill="#4c4f60"/><rect x="885.15" y="1306.90" width="4.30" height="7.00" fill="#7050ee"/><rect x="890.60" y="1299.40" width="4.30" height="14.50" fill="#4c4f60"/><rect x="890.60" y="1305.74" width="4.30" height="8.16" fill="#f0903c"/><rect x="896.05" y="1299.40" width="4.30" height="14.50" fill="#4c4f60"/><rect x="896.05" y="1304.58" width="4.30" height="9.32" fill="#1fa898"/><rect x="901.50" y="1299.40" width="4.30" height="14.50" fill="#4c4f60"/><rect x="901.50" y="1303.42" width="4.30" height="10.48" fill="#e08ff0"/><rect x="906.95" y="1299.40" width="4.30" height="14.50" fill="#4c4f60"/><rect x="906.95" y="1302.26" width="4.30" height="11.64" fill="#f04286"/><rect x="575.30" y="1334.60" width="4.30" height="1.20" fill="#b49cf7"/><rect x="580.75" y="1333.44" width="4.30" height="2.36" fill="#f07f2e"/><rect x="591.55" y="1334.60" width="4.30" height="1.20" fill="#b49cf7"/><rect x="597.00" y="1333.44" width="4.30" height="2.36" fill="#f07f2e"/><rect x="602.45" y="1332.28" width="4.30" height="3.52" fill="#4fded0"/><rect x="613.25" y="1334.60" width="4.30" height="1.20" fill="#b49cf7"/><rect x="618.70" y="1333.44" width="4.30" height="2.36" fill="#f07f2e"/><rect x="624.15" y="1332.28" width="4.30" height="3.52" fill="#4fded0"/><rect x="629.60" y="1331.12" width="4.30" height="4.68" fill="#d04ff0"/><rect x="640.40" y="1334.60" width="4.30" height="1.20" fill="#b49cf7"/><rect x="645.85" y="1333.44" width="4.30" height="2.36" fill="#f07f2e"/><rect x="651.30" y="1332.28" width="4.30" height="3.52" fill="#4fded0"/><rect x="656.75" y="1331.12" width="4.30" height="4.68" fill="#d04ff0"/><rect x="662.20" y="1329.96" width="4.30" height="5.84" fill="#f0a0cc"/><rect x="673.00" y="1334.60" width="4.30" height="1.20" fill="#b49cf7"/><rect x="678.45" y="1333.44" width="4.30" height="2.36" fill="#f07f2e"/><rect x="683.90" y="1332.28" width="4.30" height="3.52" fill="#4fded0"/><rect x="689.35" y="1331.12" width="4.30" height="4.68" fill="#d04ff0"/><rect x="694.80" y="1329.96" width="4.30" height="5.84" fill="#f0a0cc"/><rect x="700.25" y="1328.80" width="4.30" height="7.00" fill="#7050ee"/><rect x="711.05" y="1334.60" width="4.30" height="1.20" fill="#b49cf7"/><rect x="716.50" y="1333.44" width="4.30" height="2.36" fill="#f07f2e"/><rect x="721.95" y="1332.28" width="4.30" height="3.52" fill="#4fded0"/><rect x="727.40" y="1331.12" width="4.30" height="4.68" fill="#d04ff0"/><rect x="732.85" y="1329.96" width="4.30" height="5.84" fill="#f0a0cc"/><rect x="738.30" y="1328.80" width="4.30" height="7.00" fill="#7050ee"/><rect x="743.75" y="1327.64" width="4.30" height="8.16" fill="#f0903c"/><rect x="754.55" y="1334.60" width="4.30" height="1.20" fill="#b49cf7"/><rect x="760.00" y="1333.44" width="4.30" height="2.36" fill="#f07f2e"/><rect x="765.45" y="1332.28" width="4.30" height="3.52" fill="#4fded0"/><rect x="770.90" y="1331.12" width="4.30" height="4.68" fill="#d04ff0"/><rect x="776.35" y="1329.96" width="4.30" height="5.84" fill="#f0a0cc"/><rect x="781.80" y="1328.80" width="4.30" height="7.00" fill="#7050ee"/><rect x="787.25" y="1327.64" width="4.30" height="8.16" fill="#f0903c"/><rect x="792.70" y="1326.48" width="4.30" height="9.32" fill="#1fa898"/><rect x="803.50" y="1334.60" width="4.30" height="1.20" fill="#b49cf7"/><rect x="808.95" y="1333.44" width="4.30" height="2.36" fill="#f07f2e"/><rect x="814.40" y="1332.28" width="4.30" height="3.52" fill="#4fded0"/><rect x="819.85" y="1331.12" width="4.30" height="4.68" fill="#d04ff0"/><rect x="825.30" y="1329.96" width="4.30" height="5.84" fill="#f0a0cc"/><rect x="830.75" y="1328.80" width="4.30" height="7.00" fill="#7050ee"/><rect x="836.20" y="1327.64" width="4.30" height="8.16" fill="#f0903c"/><rect x="841.65" y="1326.48" width="4.30" height="9.32" fill="#1fa898"/><rect x="847.10" y="1325.32" width="4.30" height="10.48" fill="#e08ff0"/><rect x="857.90" y="1334.60" width="4.30" height="1.20" fill="#b49cf7"/><rect x="863.35" y="1333.44" width="4.30" height="2.36" fill="#f07f2e"/><rect x="868.80" y="1332.28" width="4.30" height="3.52" fill="#4fded0"/><rect x="874.25" y="1331.12" width="4.30" height="4.68" fill="#d04ff0"/><rect x="879.70" y="1329.96" width="4.30" height="5.84" fill="#f0a0cc"/><rect x="885.15" y="1328.80" width="4.30" height="7.00" fill="#7050ee"/><rect x="890.60" y="1327.64" width="4.30" height="8.16" fill="#f0903c"/><rect x="896.05" y="1326.48" width="4.30" height="9.32" fill="#1fa898"/><rect x="901.50" y="1325.32" width="4.30" height="10.48" fill="#e08ff0"/><rect x="906.95" y="1324.16" width="4.30" height="11.64" fill="#f04286"/><rect x="575.30" y="1347.00" width="4.30" height="14.50" fill="#4c4f60"/><rect x="575.30" y="1360.30" width="4.30" height="1.20" fill="#b49cf7"/><rect x="580.75" y="1347.00" width="4.30" height="14.50" fill="#4c4f60"/><rect x="580.75" y="1359.14" width="4.30" height="2.36" fill="#f07f2e"/><rect x="591.55" y="1347.00" width="4.30" height="14.50" fill="#4c4f60"/><rect x="591.55" y="1360.30" width="4.30" height="1.20" fill="#b49cf7"/><rect x="597.00" y="1347.00" width="4.30" height="14.50" fill="#4c4f60"/><rect x="597.00" y="1359.14" width="4.30" height="2.36" fill="#f07f2e"/><rect x="602.45" y="1347.00" width="4.30" height="14.50" fill="#4c4f60"/><rect x="602.45" y="1357.98" width="4.30" height="3.52" fill="#4fded0"/><rect x="613.25" y="1347.00" width="4.30" height="14.50" fill="#4c4f60"/><rect x="613.25" y="1360.30" width="4.30" height="1.20" fill="#b49cf7"/><rect x="618.70" y="1347.00" width="4.30" height="14.50" fill="#4c4f60"/><rect x="618.70" y="1359.14" width="4.30" height="2.36" fill="#f07f2e"/><rect x="624.15" y="1347.00" width="4.30" height="14.50" fill="#4c4f60"/><rect x="624.15" y="1357.98" width="4.30" height="3.52" fill="#4fded0"/><rect x="629.60" y="1347.00" width="4.30" height="14.50" fill="#4c4f60"/><rect x="629.60" y="1356.82" width="4.30" height="4.68" fill="#d04ff0"/><rect x="640.40" y="1347.00" width="4.30" height="14.50" fill="#4c4f60"/><rect x="640.40" y="1360.30" width="4.30" height="1.20" fill="#b49cf7"/><rect x="645.85" y="1347.00" width="4.30" height="14.50" fill="#4c4f60"/><rect x="645.85" y="1359.14" width="4.30" height="2.36" fill="#f07f2e"/><rect x="651.30" y="1347.00" width="4.30" height="14.50" fill="#4c4f60"/><rect x="651.30" y="1357.98" width="4.30" height="3.52" fill="#4fded0"/><rect x="656.75" y="1347.00" width="4.30" height="14.50" fill="#4c4f60"/><rect x="656.75" y="1356.82" width="4.30" height="4.68" fill="#d04ff0"/><rect x="662.20" y="1347.00" width="4.30" height="14.50" fill="#4c4f60"/><rect x="662.20" y="1355.66" width="4.30" height="5.84" fill="#f0a0cc"/><rect x="673.00" y="1347.00" width="4.30" height="14.50" fill="#4c4f60"/><rect x="673.00" y="1360.30" width="4.30" height="1.20" fill="#b49cf7"/><rect x="678.45" y="1347.00" width="4.30" height="14.50" fill="#4c4f60"/><rect x="678.45" y="1359.14" width="4.30" height="2.36" fill="#f07f2e"/><rect x="683.90" y="1347.00" width="4.30" height="14.50" fill="#4c4f60"/><rect x="683.90" y="1357.98" width="4.30" height="3.52" fill="#4fded0"/><rect x="689.35" y="1347.00" width="4.30" height="14.50" fill="#4c4f60"/><rect x="689.35" y="1356.82" width="4.30" height="4.68" fill="#d04ff0"/><rect x="694.80" y="1347.00" width="4.30" height="14.50" fill="#4c4f60"/><rect x="694.80" y="1355.66" width="4.30" height="5.84" fill="#f0a0cc"/><rect x="700.25" y="1347.00" width="4.30" height="14.50" fill="#4c4f60"/><rect x="700.25" y="1354.50" width="4.30" height="7.00" fill="#7050ee"/><rect x="711.05" y="1347.00" width="4.30" height="14.50" fill="#4c4f60"/><rect x="711.05" y="1360.30" width="4.30" height="1.20" fill="#b49cf7"/><rect x="716.50" y="1347.00" width="4.30" height="14.50" fill="#4c4f60"/><rect x="716.50" y="1359.14" width="4.30" height="2.36" fill="#f07f2e"/><rect x="721.95" y="1347.00" width="4.30" height="14.50" fill="#4c4f60"/><rect x="721.95" y="1357.98" width="4.30" height="3.52" fill="#4fded0"/><rect x="727.40" y="1347.00" width="4.30" height="14.50" fill="#4c4f60"/><rect x="727.40" y="1356.82" width="4.30" height="4.68" fill="#d04ff0"/><rect x="732.85" y="1347.00" width="4.30" height="14.50" fill="#4c4f60"/><rect x="732.85" y="1355.66" width="4.30" height="5.84" fill="#f0a0cc"/><rect x="738.30" y="1347.00" width="4.30" height="14.50" fill="#4c4f60"/><rect x="738.30" y="1354.50" width="4.30" height="7.00" fill="#7050ee"/><rect x="743.75" y="1347.00" width="4.30" height="14.50" fill="#4c4f60"/><rect x="743.75" y="1353.34" width="4.30" height="8.16" fill="#f0903c"/><rect x="754.55" y="1347.00" width="4.30" height="14.50" fill="#4c4f60"/><rect x="754.55" y="1360.30" width="4.30" height="1.20" fill="#b49cf7"/><rect x="760.00" y="1347.00" width="4.30" height="14.50" fill="#4c4f60"/><rect x="760.00" y="1359.14" width="4.30" height="2.36" fill="#f07f2e"/><rect x="765.45" y="1347.00" width="4.30" height="14.50" fill="#4c4f60"/><rect x="765.45" y="1357.98" width="4.30" height="3.52" fill="#4fded0"/><rect x="770.90" y="1347.00" width="4.30" height="14.50" fill="#4c4f60"/><rect x="770.90" y="1356.82" width="4.30" height="4.68" fill="#d04ff0"/><rect x="776.35" y="1347.00" width="4.30" height="14.50" fill="#4c4f60"/><rect x="776.35" y="1355.66" width="4.30" height="5.84" fill="#f0a0cc"/><rect x="781.80" y="1347.00" width="4.30" height="14.50" fill="#4c4f60"/><rect x="781.80" y="1354.50" width="4.30" height="7.00" fill="#7050ee"/><rect x="787.25" y="1347.00" width="4.30" height="14.50" fill="#4c4f60"/><rect x="787.25" y="1353.34" width="4.30" height="8.16" fill="#f0903c"/><rect x="792.70" y="1347.00" width="4.30" height="14.50" fill="#4c4f60"/><rect x="792.70" y="1352.18" width="4.30" height="9.32" fill="#1fa898"/><rect x="803.50" y="1347.00" width="4.30" height="14.50" fill="#4c4f60"/><rect x="803.50" y="1360.30" width="4.30" height="1.20" fill="#b49cf7"/><rect x="808.95" y="1347.00" width="4.30" height="14.50" fill="#4c4f60"/><rect x="808.95" y="1359.14" width="4.30" height="2.36" fill="#f07f2e"/><rect x="814.40" y="1347.00" width="4.30" height="14.50" fill="#4c4f60"/><rect x="814.40" y="1357.98" width="4.30" height="3.52" fill="#4fded0"/><rect x="819.85" y="1347.00" width="4.30" height="14.50" fill="#4c4f60"/><rect x="819.85" y="1356.82" width="4.30" height="4.68" fill="#d04ff0"/><rect x="825.30" y="1347.00" width="4.30" height="14.50" fill="#4c4f60"/><rect x="825.30" y="1355.66" width="4.30" height="5.84" fill="#f0a0cc"/><rect x="830.75" y="1347.00" width="4.30" height="14.50" fill="#4c4f60"/><rect x="830.75" y="1354.50" width="4.30" height="7.00" fill="#7050ee"/><rect x="836.20" y="1347.00" width="4.30" height="14.50" fill="#4c4f60"/><rect x="836.20" y="1353.34" width="4.30" height="8.16" fill="#f0903c"/><rect x="841.65" y="1347.00" width="4.30" height="14.50" fill="#4c4f60"/><rect x="841.65" y="1352.18" width="4.30" height="9.32" fill="#1fa898"/><rect x="847.10" y="1347.00" width="4.30" height="14.50" fill="#4c4f60"/><rect x="847.10" y="1351.02" width="4.30" height="10.48" fill="#e08ff0"/><rect x="857.90" y="1347.00" width="4.30" height="14.50" fill="#4c4f60"/><rect x="857.90" y="1360.30" width="4.30" height="1.20" fill="#b49cf7"/><rect x="863.35" y="1347.00" width="4.30" height="14.50" fill="#4c4f60"/><rect x="863.35" y="1359.14" width="4.30" height="2.36" fill="#f07f2e"/><rect x="868.80" y="1347.00" width="4.30" height="14.50" fill="#4c4f60"/><rect x="868.80" y="1357.98" width="4.30" height="3.52" fill="#4fded0"/><rect x="874.25" y="1347.00" width="4.30" height="14.50" fill="#4c4f60"/><rect x="874.25" y="1356.82" width="4.30" height="4.68" fill="#d04ff0"/><rect x="879.70" y="1347.00" width="4.30" height="14.50" fill="#4c4f60"/><rect x="879.70" y="1355.66" width="4.30" height="5.84" fill="#f0a0cc"/><rect x="885.15" y="1347.00" width="4.30" height="14.50" fill="#4c4f60"/><rect x="885.15" y="1354.50" width="4.30" height="7.00" fill="#7050ee"/><rect x="890.60" y="1347.00" width="4.30" height="14.50" fill="#4c4f60"/><rect x="890.60" y="1353.34" width="4.30" height="8.16" fill="#f0903c"/><rect x="896.05" y="1347.00" width="4.30" height="14.50" fill="#4c4f60"/><rect x="896.05" y="1352.18" width="4.30" height="9.32" fill="#1fa898"/><rect x="901.50" y="1347.00" width="4.30" height="14.50" fill="#4c4f60"/><rect x="901.50" y="1351.02" width="4.30" height="10.48" fill="#e08ff0"/><rect x="906.95" y="1347.00" width="4.30" height="14.50" fill="#4c4f60"/><rect x="906.95" y="1349.86" width="4.30" height="11.64" fill="#f04286"/><rect x="575.30" y="1391.20" width="8.60" height="1.20" fill="#b49cf7"/><rect x="586.05" y="1390.04" width="8.60" height="2.36" fill="#f07f2e"/><rect x="603.85" y="1391.20" width="8.60" height="1.20" fill="#b49cf7"/><rect x="614.60" y="1390.04" width="8.60" height="2.36" fill="#f07f2e"/><rect x="625.35" y="1388.88" width="8.60" height="3.52" fill="#4fded0"/><rect x="643.15" y="1391.20" width="8.60" height="1.20" fill="#b49cf7"/><rect x="653.90" y="1390.04" width="8.60" height="2.36" fill="#f07f2e"/><rect x="664.65" y="1388.88" width="8.60" height="3.52" fill="#4fded0"/><rect x="675.40" y="1387.72" width="8.60" height="4.68" fill="#d04ff0"/><rect x="693.20" y="1391.20" width="8.60" height="1.20" fill="#b49cf7"/><rect x="703.95" y="1390.04" width="8.60" height="2.36" fill="#f07f2e"/><rect x="714.70" y="1388.88" width="8.60" height="3.52" fill="#4fded0"/><rect x="725.45" y="1387.72" width="8.60" height="4.68" fill="#d04ff0"/><rect x="736.20" y="1386.56" width="8.60" height="5.84" fill="#f0a0cc"/><rect x="754.00" y="1391.20" width="8.60" height="1.20" fill="#b49cf7"/><rect x="764.75" y="1390.04" width="8.60" height="2.36" fill="#f07f2e"/><rect x="775.50" y="1388.88" width="8.60" height="3.52" fill="#4fded0"/><rect x="786.25" y="1387.72" width="8.60" height="4.68" fill="#d04ff0"/><rect x="797.00" y="1386.56" width="8.60" height="5.84" fill="#f0a0cc"/><rect x="807.75" y="1385.40" width="8.60" height="7.00" fill="#7050ee"/><rect x="825.55" y="1391.20" width="8.60" height="1.20" fill="#b49cf7"/><rect x="836.30" y="1390.04" width="8.60" height="2.36" fill="#f07f2e"/><rect x="847.05" y="1388.88" width="8.60" height="3.52" fill="#4fded0"/><rect x="857.80" y="1387.72" width="8.60" height="4.68" fill="#d04ff0"/><rect x="868.55" y="1386.56" width="8.60" height="5.84" fill="#f0a0cc"/><rect x="879.30" y="1385.40" width="8.60" height="7.00" fill="#7050ee"/><rect x="890.05" y="1384.24" width="8.60" height="8.16" fill="#f0903c"/><rect x="907.85" y="1391.20" width="8.60" height="1.20" fill="#b49cf7"/><rect x="918.60" y="1390.04" width="8.60" height="2.36" fill="#f07f2e"/><rect x="929.35" y="1388.88" width="8.60" height="3.52" fill="#4fded0"/><rect x="940.10" y="1387.72" width="8.60" height="4.68" fill="#d04ff0"/><rect x="950.85" y="1386.56" width="8.60" height="5.84" fill="#f0a0cc"/><rect x="961.60" y="1385.40" width="8.60" height="7.00" fill="#7050ee"/><rect x="972.35" y="1384.24" width="8.60" height="8.16" fill="#f0903c"/><rect x="983.10" y="1383.08" width="8.60" height="9.32" fill="#1fa898"/><rect x="1000.90" y="1391.20" width="8.60" height="1.20" fill="#b49cf7"/><rect x="1011.65" y="1390.04" width="8.60" height="2.36" fill="#f07f2e"/><rect x="1022.40" y="1388.88" width="8.60" height="3.52" fill="#4fded0"/><rect x="1033.15" y="1387.72" width="8.60" height="4.68" fill="#d04ff0"/><rect x="1043.90" y="1386.56" width="8.60" height="5.84" fill="#f0a0cc"/><rect x="1054.65" y="1385.40" width="8.60" height="7.00" fill="#7050ee"/><rect x="1065.40" y="1384.24" width="8.60" height="8.16" fill="#f0903c"/><rect x="1076.15" y="1383.08" width="8.60" height="9.32" fill="#1fa898"/><rect x="1086.90" y="1381.92" width="8.60" height="10.48" fill="#e08ff0"/><rect x="1104.70" y="1391.20" width="8.60" height="1.20" fill="#b49cf7"/><rect x="1115.45" y="1390.04" width="8.60" height="2.36" fill="#f07f2e"/><rect x="1126.20" y="1388.88" width="8.60" height="3.52" fill="#4fded0"/><rect x="1136.95" y="1387.72" width="8.60" height="4.68" fill="#d04ff0"/><rect x="1147.70" y="1386.56" width="8.60" height="5.84" fill="#f0a0cc"/><rect x="1158.45" y="1385.40" width="8.60" height="7.00" fill="#7050ee"/><rect x="1169.20" y="1384.24" width="8.60" height="8.16" fill="#f0903c"/><rect x="1179.95" y="1383.08" width="8.60" height="9.32" fill="#1fa898"/><rect x="1190.70" y="1381.92" width="8.60" height="10.48" fill="#e08ff0"/><rect x="1201.45" y="1380.76" width="8.60" height="11.64" fill="#f04286"/><rect x="1219.25" y="1391.20" width="8.60" height="1.20" fill="#b49cf7"/><rect x="1230.00" y="1390.04" width="8.60" height="2.36" fill="#f07f2e"/><rect x="1240.75" y="1388.88" width="8.60" height="3.52" fill="#4fded0"/><rect x="1251.50" y="1387.72" width="8.60" height="4.68" fill="#d04ff0"/><rect x="1262.25" y="1386.56" width="8.60" height="5.84" fill="#f0a0cc"/><rect x="1273.00" y="1385.40" width="8.60" height="7.00" fill="#7050ee"/><rect x="1283.75" y="1384.24" width="8.60" height="8.16" fill="#f0903c"/><rect x="1294.50" y="1383.08" width="8.60" height="9.32" fill="#1fa898"/><rect x="1305.25" y="1381.92" width="8.60" height="10.48" fill="#e08ff0"/><rect x="1316.00" y="1380.76" width="8.60" height="11.64" fill="#f04286"/><rect x="1326.75" y="1379.60" width="8.60" height="12.80" fill="#f7be90"/><rect x="1344.55" y="1391.20" width="8.60" height="1.20" fill="#b49cf7"/><rect x="1355.30" y="1390.04" width="8.60" height="2.36" fill="#f07f2e"/><rect x="1366.05" y="1388.88" width="8.60" height="3.52" fill="#4fded0"/><rect x="1376.80" y="1387.72" width="8.60" height="4.68" fill="#d04ff0"/><rect x="1387.55" y="1386.56" width="8.60" height="5.84" fill="#f0a0cc"/><rect x="1398.30" y="1385.40" width="8.60" height="7.00" fill="#7050ee"/><rect x="1409.05" y="1384.24" width="8.60" height="8.16" fill="#f0903c"/><rect x="1419.80" y="1383.08" width="8.60" height="9.32" fill="#1fa898"/><rect x="1430.55" y="1381.92" width="8.60" height="10.48" fill="#e08ff0"/><rect x="1441.30" y="1380.76" width="8.60" height="11.64" fill="#f04286"/><rect x="1452.05" y="1379.60" width="8.60" height="12.80" fill="#f7be90"/><rect x="1462.80" y="1378.44" width="8.60" height="13.96" fill="#22c2b2"/><rect x="575.30" y="1402.50" width="8.60" height="14.50" fill="#4c4f60"/><rect x="575.30" y="1415.80" width="8.60" height="1.20" fill="#b49cf7"/><rect x="586.05" y="1402.50" width="8.60" height="14.50" fill="#4c4f60"/><rect x="586.05" y="1414.64" width="8.60" height="2.36" fill="#f07f2e"/><rect x="603.85" y="1402.50" width="8.60" height="14.50" fill="#4c4f60"/><rect x="603.85" y="1415.80" width="8.60" height="1.20" fill="#b49cf7"/><rect x="614.60" y="1402.50" width="8.60" height="14.50" fill="#4c4f60"/><rect x="614.60" y="1414.64" width="8.60" height="2.36" fill="#f07f2e"/><rect x="625.35" y="1402.50" width="8.60" height="14.50" fill="#4c4f60"/><rect x="625.35" y="1413.48" width="8.60" height="3.52" fill="#4fded0"/><rect x="643.15" y="1402.50" width="8.60" height="14.50" fill="#4c4f60"/><rect x="643.15" y="1415.80" width="8.60" height="1.20" fill="#b49cf7"/><rect x="653.90" y="1402.50" width="8.60" height="14.50" fill="#4c4f60"/><rect x="653.90" y="1414.64" width="8.60" height="2.36" fill="#f07f2e"/><rect x="664.65" y="1402.50" width="8.60" height="14.50" fill="#4c4f60"/><rect x="664.65" y="1413.48" width="8.60" height="3.52" fill="#4fded0"/><rect x="675.40" y="1402.50" width="8.60" height="14.50" fill="#4c4f60"/><rect x="675.40" y="1412.32" width="8.60" height="4.68" fill="#d04ff0"/><rect x="693.20" y="1402.50" width="8.60" height="14.50" fill="#4c4f60"/><rect x="693.20" y="1415.80" width="8.60" height="1.20" fill="#b49cf7"/><rect x="703.95" y="1402.50" width="8.60" height="14.50" fill="#4c4f60"/><rect x="703.95" y="1414.64" width="8.60" height="2.36" fill="#f07f2e"/><rect x="714.70" y="1402.50" width="8.60" height="14.50" fill="#4c4f60"/><rect x="714.70" y="1413.48" width="8.60" height="3.52" fill="#4fded0"/><rect x="725.45" y="1402.50" width="8.60" height="14.50" fill="#4c4f60"/><rect x="725.45" y="1412.32" width="8.60" height="4.68" fill="#d04ff0"/><rect x="736.20" y="1402.50" width="8.60" height="14.50" fill="#4c4f60"/><rect x="736.20" y="1411.16" width="8.60" height="5.84" fill="#f0a0cc"/><rect x="754.00" y="1402.50" width="8.60" height="14.50" fill="#4c4f60"/><rect x="754.00" y="1415.80" width="8.60" height="1.20" fill="#b49cf7"/><rect x="764.75" y="1402.50" width="8.60" height="14.50" fill="#4c4f60"/><rect x="764.75" y="1414.64" width="8.60" height="2.36" fill="#f07f2e"/><rect x="775.50" y="1402.50" width="8.60" height="14.50" fill="#4c4f60"/><rect x="775.50" y="1413.48" width="8.60" height="3.52" fill="#4fded0"/><rect x="786.25" y="1402.50" width="8.60" height="14.50" fill="#4c4f60"/><rect x="786.25" y="1412.32" width="8.60" height="4.68" fill="#d04ff0"/><rect x="797.00" y="1402.50" width="8.60" height="14.50" fill="#4c4f60"/><rect x="797.00" y="1411.16" width="8.60" height="5.84" fill="#f0a0cc"/><rect x="807.75" y="1402.50" width="8.60" height="14.50" fill="#4c4f60"/><rect x="807.75" y="1410.00" width="8.60" height="7.00" fill="#7050ee"/><rect x="825.55" y="1402.50" width="8.60" height="14.50" fill="#4c4f60"/><rect x="825.55" y="1415.80" width="8.60" height="1.20" fill="#b49cf7"/><rect x="836.30" y="1402.50" width="8.60" height="14.50" fill="#4c4f60"/><rect x="836.30" y="1414.64" width="8.60" height="2.36" fill="#f07f2e"/><rect x="847.05" y="1402.50" width="8.60" height="14.50" fill="#4c4f60"/><rect x="847.05" y="1413.48" width="8.60" height="3.52" fill="#4fded0"/><rect x="857.80" y="1402.50" width="8.60" height="14.50" fill="#4c4f60"/><rect x="857.80" y="1412.32" width="8.60" height="4.68" fill="#d04ff0"/><rect x="868.55" y="1402.50" width="8.60" height="14.50" fill="#4c4f60"/><rect x="868.55" y="1411.16" width="8.60" height="5.84" fill="#f0a0cc"/><rect x="879.30" y="1402.50" width="8.60" height="14.50" fill="#4c4f60"/><rect x="879.30" y="1410.00" width="8.60" height="7.00" fill="#7050ee"/><rect x="890.05" y="1402.50" width="8.60" height="14.50" fill="#4c4f60"/><rect x="890.05" y="1408.84" width="8.60" height="8.16" fill="#f0903c"/><rect x="907.85" y="1402.50" width="8.60" height="14.50" fill="#4c4f60"/><rect x="907.85" y="1415.80" width="8.60" height="1.20" fill="#b49cf7"/><rect x="918.60" y="1402.50" width="8.60" height="14.50" fill="#4c4f60"/><rect x="918.60" y="1414.64" width="8.60" height="2.36" fill="#f07f2e"/><rect x="929.35" y="1402.50" width="8.60" height="14.50" fill="#4c4f60"/><rect x="929.35" y="1413.48" width="8.60" height="3.52" fill="#4fded0"/><rect x="940.10" y="1402.50" width="8.60" height="14.50" fill="#4c4f60"/><rect x="940.10" y="1412.32" width="8.60" height="4.68" fill="#d04ff0"/><rect x="950.85" y="1402.50" width="8.60" height="14.50" fill="#4c4f60"/><rect x="950.85" y="1411.16" width="8.60" height="5.84" fill="#f0a0cc"/><rect x="961.60" y="1402.50" width="8.60" height="14.50" fill="#4c4f60"/><rect x="961.60" y="1410.00" width="8.60" height="7.00" fill="#7050ee"/><rect x="972.35" y="1402.50" width="8.60" height="14.50" fill="#4c4f60"/><rect x="972.35" y="1408.84" width="8.60" height="8.16" fill="#f0903c"/><rect x="983.10" y="1402.50" width="8.60" height="14.50" fill="#4c4f60"/><rect x="983.10" y="1407.68" width="8.60" height="9.32" fill="#1fa898"/><rect x="1000.90" y="1402.50" width="8.60" height="14.50" fill="#4c4f60"/><rect x="1000.90" y="1415.80" width="8.60" height="1.20" fill="#b49cf7"/><rect x="1011.65" y="1402.50" width="8.60" height="14.50" fill="#4c4f60"/><rect x="1011.65" y="1414.64" width="8.60" height="2.36" fill="#f07f2e"/><rect x="1022.40" y="1402.50" width="8.60" height="14.50" fill="#4c4f60"/><rect x="1022.40" y="1413.48" width="8.60" height="3.52" fill="#4fded0"/><rect x="1033.15" y="1402.50" width="8.60" height="14.50" fill="#4c4f60"/><rect x="1033.15" y="1412.32" width="8.60" height="4.68" fill="#d04ff0"/><rect x="1043.90" y="1402.50" width="8.60" height="14.50" fill="#4c4f60"/><rect x="1043.90" y="1411.16" width="8.60" height="5.84" fill="#f0a0cc"/><rect x="1054.65" y="1402.50" width="8.60" height="14.50" fill="#4c4f60"/><rect x="1054.65" y="1410.00" width="8.60" height="7.00" fill="#7050ee"/><rect x="1065.40" y="1402.50" width="8.60" height="14.50" fill="#4c4f60"/><rect x="1065.40" y="1408.84" width="8.60" height="8.16" fill="#f0903c"/><rect x="1076.15" y="1402.50" width="8.60" height="14.50" fill="#4c4f60"/><rect x="1076.15" y="1407.68" width="8.60" height="9.32" fill="#1fa898"/><rect x="1086.90" y="1402.50" width="8.60" height="14.50" fill="#4c4f60"/><rect x="1086.90" y="1406.52" width="8.60" height="10.48" fill="#e08ff0"/><rect x="1104.70" y="1402.50" width="8.60" height="14.50" fill="#4c4f60"/><rect x="1104.70" y="1415.80" width="8.60" height="1.20" fill="#b49cf7"/><rect x="1115.45" y="1402.50" width="8.60" height="14.50" fill="#4c4f60"/><rect x="1115.45" y="1414.64" width="8.60" height="2.36" fill="#f07f2e"/><rect x="1126.20" y="1402.50" width="8.60" height="14.50" fill="#4c4f60"/><rect x="1126.20" y="1413.48" width="8.60" height="3.52" fill="#4fded0"/><rect x="1136.95" y="1402.50" width="8.60" height="14.50" fill="#4c4f60"/><rect x="1136.95" y="1412.32" width="8.60" height="4.68" fill="#d04ff0"/><rect x="1147.70" y="1402.50" width="8.60" height="14.50" fill="#4c4f60"/><rect x="1147.70" y="1411.16" width="8.60" height="5.84" fill="#f0a0cc"/><rect x="1158.45" y="1402.50" width="8.60" height="14.50" fill="#4c4f60"/><rect x="1158.45" y="1410.00" width="8.60" height="7.00" fill="#7050ee"/><rect x="1169.20" y="1402.50" width="8.60" height="14.50" fill="#4c4f60"/><rect x="1169.20" y="1408.84" width="8.60" height="8.16" fill="#f0903c"/><rect x="1179.95" y="1402.50" width="8.60" height="14.50" fill="#4c4f60"/><rect x="1179.95" y="1407.68" width="8.60" height="9.32" fill="#1fa898"/><rect x="1190.70" y="1402.50" width="8.60" height="14.50" fill="#4c4f60"/><rect x="1190.70" y="1406.52" width="8.60" height="10.48" fill="#e08ff0"/><rect x="1201.45" y="1402.50" width="8.60" height="14.50" fill="#4c4f60"/><rect x="1201.45" y="1405.36" width="8.60" height="11.64" fill="#f04286"/><rect x="1219.25" y="1402.50" width="8.60" height="14.50" fill="#4c4f60"/><rect x="1219.25" y="1415.80" width="8.60" height="1.20" fill="#b49cf7"/><rect x="1230.00" y="1402.50" width="8.60" height="14.50" fill="#4c4f60"/><rect x="1230.00" y="1414.64" width="8.60" height="2.36" fill="#f07f2e"/><rect x="1240.75" y="1402.50" width="8.60" height="14.50" fill="#4c4f60"/><rect x="1240.75" y="1413.48" width="8.60" height="3.52" fill="#4fded0"/><rect x="1251.50" y="1402.50" width="8.60" height="14.50" fill="#4c4f60"/><rect x="1251.50" y="1412.32" width="8.60" height="4.68" fill="#d04ff0"/><rect x="1262.25" y="1402.50" width="8.60" height="14.50" fill="#4c4f60"/><rect x="1262.25" y="1411.16" width="8.60" height="5.84" fill="#f0a0cc"/><rect x="1273.00" y="1402.50" width="8.60" height="14.50" fill="#4c4f60"/><rect x="1273.00" y="1410.00" width="8.60" height="7.00" fill="#7050ee"/><rect x="1283.75" y="1402.50" width="8.60" height="14.50" fill="#4c4f60"/><rect x="1283.75" y="1408.84" width="8.60" height="8.16" fill="#f0903c"/><rect x="1294.50" y="1402.50" width="8.60" height="14.50" fill="#4c4f60"/><rect x="1294.50" y="1407.68" width="8.60" height="9.32" fill="#1fa898"/><rect x="1305.25" y="1402.50" width="8.60" height="14.50" fill="#4c4f60"/><rect x="1305.25" y="1406.52" width="8.60" height="10.48" fill="#e08ff0"/><rect x="1316.00" y="1402.50" width="8.60" height="14.50" fill="#4c4f60"/><rect x="1316.00" y="1405.36" width="8.60" height="11.64" fill="#f04286"/><rect x="1326.75" y="1402.50" width="8.60" height="14.50" fill="#4c4f60"/><rect x="1326.75" y="1404.20" width="8.60" height="12.80" fill="#f7be90"/><rect x="1344.55" y="1402.50" width="8.60" height="14.50" fill="#4c4f60"/><rect x="1344.55" y="1415.80" width="8.60" height="1.20" fill="#b49cf7"/><rect x="1355.30" y="1402.50" width="8.60" height="14.50" fill="#4c4f60"/><rect x="1355.30" y="1414.64" width="8.60" height="2.36" fill="#f07f2e"/><rect x="1366.05" y="1402.50" width="8.60" height="14.50" fill="#4c4f60"/><rect x="1366.05" y="1413.48" width="8.60" height="3.52" fill="#4fded0"/><rect x="1376.80" y="1402.50" width="8.60" height="14.50" fill="#4c4f60"/><rect x="1376.80" y="1412.32" width="8.60" height="4.68" fill="#d04ff0"/><rect x="1387.55" y="1402.50" width="8.60" height="14.50" fill="#4c4f60"/><rect x="1387.55" y="1411.16" width="8.60" height="5.84" fill="#f0a0cc"/><rect x="1398.30" y="1402.50" width="8.60" height="14.50" fill="#4c4f60"/><rect x="1398.30" y="1410.00" width="8.60" height="7.00" fill="#7050ee"/><rect x="1409.05" y="1402.50" width="8.60" height="14.50" fill="#4c4f60"/><rect x="1409.05" y="1408.84" width="8.60" height="8.16" fill="#f0903c"/><rect x="1419.80" y="1402.50" width="8.60" height="14.50" fill="#4c4f60"/><rect x="1419.80" y="1407.68" width="8.60" height="9.32" fill="#1fa898"/><rect x="1430.55" y="1402.50" width="8.60" height="14.50" fill="#4c4f60"/><rect x="1430.55" y="1406.52" width="8.60" height="10.48" fill="#e08ff0"/><rect x="1441.30" y="1402.50" width="8.60" height="14.50" fill="#4c4f60"/><rect x="1441.30" y="1405.36" width="8.60" height="11.64" fill="#f04286"/><rect x="1452.05" y="1402.50" width="8.60" height="14.50" fill="#4c4f60"/><rect x="1452.05" y="1404.20" width="8.60" height="12.80" fill="#f7be90"/><rect x="1462.80" y="1402.50" width="8.60" height="14.50" fill="#4c4f60"/><rect x="1462.80" y="1403.04" width="8.60" height="13.96" fill="#22c2b2"/><rect x="575.30" y="1440.40" width="8.60" height="1.20" fill="#b49cf7"/><rect x="586.05" y="1439.24" width="8.60" height="2.36" fill="#f07f2e"/><rect x="603.85" y="1440.40" width="8.60" height="1.20" fill="#b49cf7"/><rect x="614.60" y="1439.24" width="8.60" height="2.36" fill="#f07f2e"/><rect x="625.35" y="1438.08" width="8.60" height="3.52" fill="#4fded0"/><rect x="643.15" y="1440.40" width="8.60" height="1.20" fill="#b49cf7"/><rect x="653.90" y="1439.24" width="8.60" height="2.36" fill="#f07f2e"/><rect x="664.65" y="1438.08" width="8.60" height="3.52" fill="#4fded0"/><rect x="675.40" y="1436.92" width="8.60" height="4.68" fill="#d04ff0"/><rect x="693.20" y="1440.40" width="8.60" height="1.20" fill="#b49cf7"/><rect x="703.95" y="1439.24" width="8.60" height="2.36" fill="#f07f2e"/><rect x="714.70" y="1438.08" width="8.60" height="3.52" fill="#4fded0"/><rect x="725.45" y="1436.92" width="8.60" height="4.68" fill="#d04ff0"/><rect x="736.20" y="1435.76" width="8.60" height="5.84" fill="#f0a0cc"/><rect x="754.00" y="1440.40" width="8.60" height="1.20" fill="#b49cf7"/><rect x="764.75" y="1439.24" width="8.60" height="2.36" fill="#f07f2e"/><rect x="775.50" y="1438.08" width="8.60" height="3.52" fill="#4fded0"/><rect x="786.25" y="1436.92" width="8.60" height="4.68" fill="#d04ff0"/><rect x="797.00" y="1435.76" width="8.60" height="5.84" fill="#f0a0cc"/><rect x="807.75" y="1434.60" width="8.60" height="7.00" fill="#7050ee"/><rect x="825.55" y="1440.40" width="8.60" height="1.20" fill="#b49cf7"/><rect x="836.30" y="1439.24" width="8.60" height="2.36" fill="#f07f2e"/><rect x="847.05" y="1438.08" width="8.60" height="3.52" fill="#4fded0"/><rect x="857.80" y="1436.92" width="8.60" height="4.68" fill="#d04ff0"/><rect x="868.55" y="1435.76" width="8.60" height="5.84" fill="#f0a0cc"/><rect x="879.30" y="1434.60" width="8.60" height="7.00" fill="#7050ee"/><rect x="890.05" y="1433.44" width="8.60" height="8.16" fill="#f0903c"/><rect x="907.85" y="1440.40" width="8.60" height="1.20" fill="#b49cf7"/><rect x="918.60" y="1439.24" width="8.60" height="2.36" fill="#f07f2e"/><rect x="929.35" y="1438.08" width="8.60" height="3.52" fill="#4fded0"/><rect x="940.10" y="1436.92" width="8.60" height="4.68" fill="#d04ff0"/><rect x="950.85" y="1435.76" width="8.60" height="5.84" fill="#f0a0cc"/><rect x="961.60" y="1434.60" width="8.60" height="7.00" fill="#7050ee"/><rect x="972.35" y="1433.44" width="8.60" height="8.16" fill="#f0903c"/><rect x="983.10" y="1432.28" width="8.60" height="9.32" fill="#1fa898"/><rect x="1000.90" y="1440.40" width="8.60" height="1.20" fill="#b49cf7"/><rect x="1011.65" y="1439.24" width="8.60" height="2.36" fill="#f07f2e"/><rect x="1022.40" y="1438.08" width="8.60" height="3.52" fill="#4fded0"/><rect x="1033.15" y="1436.92" width="8.60" height="4.68" fill="#d04ff0"/><rect x="1043.90" y="1435.76" width="8.60" height="5.84" fill="#f0a0cc"/><rect x="1054.65" y="1434.60" width="8.60" height="7.00" fill="#7050ee"/><rect x="1065.40" y="1433.44" width="8.60" height="8.16" fill="#f0903c"/><rect x="1076.15" y="1432.28" width="8.60" height="9.32" fill="#1fa898"/><rect x="1086.90" y="1431.12" width="8.60" height="10.48" fill="#e08ff0"/><rect x="1104.70" y="1440.40" width="8.60" height="1.20" fill="#b49cf7"/><rect x="1115.45" y="1439.24" width="8.60" height="2.36" fill="#f07f2e"/><rect x="1126.20" y="1438.08" width="8.60" height="3.52" fill="#4fded0"/><rect x="1136.95" y="1436.92" width="8.60" height="4.68" fill="#d04ff0"/><rect x="1147.70" y="1435.76" width="8.60" height="5.84" fill="#f0a0cc"/><rect x="1158.45" y="1434.60" width="8.60" height="7.00" fill="#7050ee"/><rect x="1169.20" y="1433.44" width="8.60" height="8.16" fill="#f0903c"/><rect x="1179.95" y="1432.28" width="8.60" height="9.32" fill="#1fa898"/><rect x="1190.70" y="1431.12" width="8.60" height="10.48" fill="#e08ff0"/><rect x="1201.45" y="1429.96" width="8.60" height="11.64" fill="#f04286"/><rect x="1219.25" y="1440.40" width="8.60" height="1.20" fill="#b49cf7"/><rect x="1230.00" y="1439.24" width="8.60" height="2.36" fill="#f07f2e"/><rect x="1240.75" y="1438.08" width="8.60" height="3.52" fill="#4fded0"/><rect x="1251.50" y="1436.92" width="8.60" height="4.68" fill="#d04ff0"/><rect x="1262.25" y="1435.76" width="8.60" height="5.84" fill="#f0a0cc"/><rect x="1273.00" y="1434.60" width="8.60" height="7.00" fill="#7050ee"/><rect x="1283.75" y="1433.44" width="8.60" height="8.16" fill="#f0903c"/><rect x="1294.50" y="1432.28" width="8.60" height="9.32" fill="#1fa898"/><rect x="1305.25" y="1431.12" width="8.60" height="10.48" fill="#e08ff0"/><rect x="1316.00" y="1429.96" width="8.60" height="11.64" fill="#f04286"/><rect x="1326.75" y="1428.80" width="8.60" height="12.80" fill="#f7be90"/><rect x="1344.55" y="1440.40" width="8.60" height="1.20" fill="#b49cf7"/><rect x="1355.30" y="1439.24" width="8.60" height="2.36" fill="#f07f2e"/><rect x="1366.05" y="1438.08" width="8.60" height="3.52" fill="#4fded0"/><rect x="1376.80" y="1436.92" width="8.60" height="4.68" fill="#d04ff0"/><rect x="1387.55" y="1435.76" width="8.60" height="5.84" fill="#f0a0cc"/><rect x="1398.30" y="1434.60" width="8.60" height="7.00" fill="#7050ee"/><rect x="1409.05" y="1433.44" width="8.60" height="8.16" fill="#f0903c"/><rect x="1419.80" y="1432.28" width="8.60" height="9.32" fill="#1fa898"/><rect x="1430.55" y="1431.12" width="8.60" height="10.48" fill="#e08ff0"/><rect x="1441.30" y="1429.96" width="8.60" height="11.64" fill="#f04286"/><rect x="1452.05" y="1428.80" width="8.60" height="12.80" fill="#f7be90"/><rect x="1462.80" y="1427.64" width="8.60" height="13.96" fill="#22c2b2"/><rect x="575.30" y="1451.50" width="8.60" height="14.50" fill="#4c4f60"/><rect x="575.30" y="1464.80" width="8.60" height="1.20" fill="#b49cf7"/><rect x="586.05" y="1451.50" width="8.60" height="14.50" fill="#4c4f60"/><rect x="586.05" y="1463.64" width="8.60" height="2.36" fill="#f07f2e"/><rect x="603.85" y="1451.50" width="8.60" height="14.50" fill="#4c4f60"/><rect x="603.85" y="1464.80" width="8.60" height="1.20" fill="#b49cf7"/><rect x="614.60" y="1451.50" width="8.60" height="14.50" fill="#4c4f60"/><rect x="614.60" y="1463.64" width="8.60" height="2.36" fill="#f07f2e"/><rect x="625.35" y="1451.50" width="8.60" height="14.50" fill="#4c4f60"/><rect x="625.35" y="1462.48" width="8.60" height="3.52" fill="#4fded0"/><rect x="643.15" y="1451.50" width="8.60" height="14.50" fill="#4c4f60"/><rect x="643.15" y="1464.80" width="8.60" height="1.20" fill="#b49cf7"/><rect x="653.90" y="1451.50" width="8.60" height="14.50" fill="#4c4f60"/><rect x="653.90" y="1463.64" width="8.60" height="2.36" fill="#f07f2e"/><rect x="664.65" y="1451.50" width="8.60" height="14.50" fill="#4c4f60"/><rect x="664.65" y="1462.48" width="8.60" height="3.52" fill="#4fded0"/><rect x="675.40" y="1451.50" width="8.60" height="14.50" fill="#4c4f60"/><rect x="675.40" y="1461.32" width="8.60" height="4.68" fill="#d04ff0"/><rect x="693.20" y="1451.50" width="8.60" height="14.50" fill="#4c4f60"/><rect x="693.20" y="1464.80" width="8.60" height="1.20" fill="#b49cf7"/><rect x="703.95" y="1451.50" width="8.60" height="14.50" fill="#4c4f60"/><rect x="703.95" y="1463.64" width="8.60" height="2.36" fill="#f07f2e"/><rect x="714.70" y="1451.50" width="8.60" height="14.50" fill="#4c4f60"/><rect x="714.70" y="1462.48" width="8.60" height="3.52" fill="#4fded0"/><rect x="725.45" y="1451.50" width="8.60" height="14.50" fill="#4c4f60"/><rect x="725.45" y="1461.32" width="8.60" height="4.68" fill="#d04ff0"/><rect x="736.20" y="1451.50" width="8.60" height="14.50" fill="#4c4f60"/><rect x="736.20" y="1460.16" width="8.60" height="5.84" fill="#f0a0cc"/><rect x="754.00" y="1451.50" width="8.60" height="14.50" fill="#4c4f60"/><rect x="754.00" y="1464.80" width="8.60" height="1.20" fill="#b49cf7"/><rect x="764.75" y="1451.50" width="8.60" height="14.50" fill="#4c4f60"/><rect x="764.75" y="1463.64" width="8.60" height="2.36" fill="#f07f2e"/><rect x="775.50" y="1451.50" width="8.60" height="14.50" fill="#4c4f60"/><rect x="775.50" y="1462.48" width="8.60" height="3.52" fill="#4fded0"/><rect x="786.25" y="1451.50" width="8.60" height="14.50" fill="#4c4f60"/><rect x="786.25" y="1461.32" width="8.60" height="4.68" fill="#d04ff0"/><rect x="797.00" y="1451.50" width="8.60" height="14.50" fill="#4c4f60"/><rect x="797.00" y="1460.16" width="8.60" height="5.84" fill="#f0a0cc"/><rect x="807.75" y="1451.50" width="8.60" height="14.50" fill="#4c4f60"/><rect x="807.75" y="1459.00" width="8.60" height="7.00" fill="#7050ee"/><rect x="825.55" y="1451.50" width="8.60" height="14.50" fill="#4c4f60"/><rect x="825.55" y="1464.80" width="8.60" height="1.20" fill="#b49cf7"/><rect x="836.30" y="1451.50" width="8.60" height="14.50" fill="#4c4f60"/><rect x="836.30" y="1463.64" width="8.60" height="2.36" fill="#f07f2e"/><rect x="847.05" y="1451.50" width="8.60" height="14.50" fill="#4c4f60"/><rect x="847.05" y="1462.48" width="8.60" height="3.52" fill="#4fded0"/><rect x="857.80" y="1451.50" width="8.60" height="14.50" fill="#4c4f60"/><rect x="857.80" y="1461.32" width="8.60" height="4.68" fill="#d04ff0"/><rect x="868.55" y="1451.50" width="8.60" height="14.50" fill="#4c4f60"/><rect x="868.55" y="1460.16" width="8.60" height="5.84" fill="#f0a0cc"/><rect x="879.30" y="1451.50" width="8.60" height="14.50" fill="#4c4f60"/><rect x="879.30" y="1459.00" width="8.60" height="7.00" fill="#7050ee"/><rect x="890.05" y="1451.50" width="8.60" height="14.50" fill="#4c4f60"/><rect x="890.05" y="1457.84" width="8.60" height="8.16" fill="#f0903c"/><rect x="907.85" y="1451.50" width="8.60" height="14.50" fill="#4c4f60"/><rect x="907.85" y="1464.80" width="8.60" height="1.20" fill="#b49cf7"/><rect x="918.60" y="1451.50" width="8.60" height="14.50" fill="#4c4f60"/><rect x="918.60" y="1463.64" width="8.60" height="2.36" fill="#f07f2e"/><rect x="929.35" y="1451.50" width="8.60" height="14.50" fill="#4c4f60"/><rect x="929.35" y="1462.48" width="8.60" height="3.52" fill="#4fded0"/><rect x="940.10" y="1451.50" width="8.60" height="14.50" fill="#4c4f60"/><rect x="940.10" y="1461.32" width="8.60" height="4.68" fill="#d04ff0"/><rect x="950.85" y="1451.50" width="8.60" height="14.50" fill="#4c4f60"/><rect x="950.85" y="1460.16" width="8.60" height="5.84" fill="#f0a0cc"/><rect x="961.60" y="1451.50" width="8.60" height="14.50" fill="#4c4f60"/><rect x="961.60" y="1459.00" width="8.60" height="7.00" fill="#7050ee"/><rect x="972.35" y="1451.50" width="8.60" height="14.50" fill="#4c4f60"/><rect x="972.35" y="1457.84" width="8.60" height="8.16" fill="#f0903c"/><rect x="983.10" y="1451.50" width="8.60" height="14.50" fill="#4c4f60"/><rect x="983.10" y="1456.68" width="8.60" height="9.32" fill="#1fa898"/><rect x="1000.90" y="1451.50" width="8.60" height="14.50" fill="#4c4f60"/><rect x="1000.90" y="1464.80" width="8.60" height="1.20" fill="#b49cf7"/><rect x="1011.65" y="1451.50" width="8.60" height="14.50" fill="#4c4f60"/><rect x="1011.65" y="1463.64" width="8.60" height="2.36" fill="#f07f2e"/><rect x="1022.40" y="1451.50" width="8.60" height="14.50" fill="#4c4f60"/><rect x="1022.40" y="1462.48" width="8.60" height="3.52" fill="#4fded0"/><rect x="1033.15" y="1451.50" width="8.60" height="14.50" fill="#4c4f60"/><rect x="1033.15" y="1461.32" width="8.60" height="4.68" fill="#d04ff0"/><rect x="1043.90" y="1451.50" width="8.60" height="14.50" fill="#4c4f60"/><rect x="1043.90" y="1460.16" width="8.60" height="5.84" fill="#f0a0cc"/><rect x="1054.65" y="1451.50" width="8.60" height="14.50" fill="#4c4f60"/><rect x="1054.65" y="1459.00" width="8.60" height="7.00" fill="#7050ee"/><rect x="1065.40" y="1451.50" width="8.60" height="14.50" fill="#4c4f60"/><rect x="1065.40" y="1457.84" width="8.60" height="8.16" fill="#f0903c"/><rect x="1076.15" y="1451.50" width="8.60" height="14.50" fill="#4c4f60"/><rect x="1076.15" y="1456.68" width="8.60" height="9.32" fill="#1fa898"/><rect x="1086.90" y="1451.50" width="8.60" height="14.50" fill="#4c4f60"/><rect x="1086.90" y="1455.52" width="8.60" height="10.48" fill="#e08ff0"/><rect x="1104.70" y="1451.50" width="8.60" height="14.50" fill="#4c4f60"/><rect x="1104.70" y="1464.80" width="8.60" height="1.20" fill="#b49cf7"/><rect x="1115.45" y="1451.50" width="8.60" height="14.50" fill="#4c4f60"/><rect x="1115.45" y="1463.64" width="8.60" height="2.36" fill="#f07f2e"/><rect x="1126.20" y="1451.50" width="8.60" height="14.50" fill="#4c4f60"/><rect x="1126.20" y="1462.48" width="8.60" height="3.52" fill="#4fded0"/><rect x="1136.95" y="1451.50" width="8.60" height="14.50" fill="#4c4f60"/><rect x="1136.95" y="1461.32" width="8.60" height="4.68" fill="#d04ff0"/><rect x="1147.70" y="1451.50" width="8.60" height="14.50" fill="#4c4f60"/><rect x="1147.70" y="1460.16" width="8.60" height="5.84" fill="#f0a0cc"/><rect x="1158.45" y="1451.50" width="8.60" height="14.50" fill="#4c4f60"/><rect x="1158.45" y="1459.00" width="8.60" height="7.00" fill="#7050ee"/><rect x="1169.20" y="1451.50" width="8.60" height="14.50" fill="#4c4f60"/><rect x="1169.20" y="1457.84" width="8.60" height="8.16" fill="#f0903c"/><rect x="1179.95" y="1451.50" width="8.60" height="14.50" fill="#4c4f60"/><rect x="1179.95" y="1456.68" width="8.60" height="9.32" fill="#1fa898"/><rect x="1190.70" y="1451.50" width="8.60" height="14.50" fill="#4c4f60"/><rect x="1190.70" y="1455.52" width="8.60" height="10.48" fill="#e08ff0"/><rect x="1201.45" y="1451.50" width="8.60" height="14.50" fill="#4c4f60"/><rect x="1201.45" y="1454.36" width="8.60" height="11.64" fill="#f04286"/><rect x="1219.25" y="1451.50" width="8.60" height="14.50" fill="#4c4f60"/><rect x="1219.25" y="1464.80" width="8.60" height="1.20" fill="#b49cf7"/><rect x="1230.00" y="1451.50" width="8.60" height="14.50" fill="#4c4f60"/><rect x="1230.00" y="1463.64" width="8.60" height="2.36" fill="#f07f2e"/><rect x="1240.75" y="1451.50" width="8.60" height="14.50" fill="#4c4f60"/><rect x="1240.75" y="1462.48" width="8.60" height="3.52" fill="#4fded0"/><rect x="1251.50" y="1451.50" width="8.60" height="14.50" fill="#4c4f60"/><rect x="1251.50" y="1461.32" width="8.60" height="4.68" fill="#d04ff0"/><rect x="1262.25" y="1451.50" width="8.60" height="14.50" fill="#4c4f60"/><rect x="1262.25" y="1460.16" width="8.60" height="5.84" fill="#f0a0cc"/><rect x="1273.00" y="1451.50" width="8.60" height="14.50" fill="#4c4f60"/><rect x="1273.00" y="1459.00" width="8.60" height="7.00" fill="#7050ee"/><rect x="1283.75" y="1451.50" width="8.60" height="14.50" fill="#4c4f60"/><rect x="1283.75" y="1457.84" width="8.60" height="8.16" fill="#f0903c"/><rect x="1294.50" y="1451.50" width="8.60" height="14.50" fill="#4c4f60"/><rect x="1294.50" y="1456.68" width="8.60" height="9.32" fill="#1fa898"/><rect x="1305.25" y="1451.50" width="8.60" height="14.50" fill="#4c4f60"/><rect x="1305.25" y="1455.52" width="8.60" height="10.48" fill="#e08ff0"/><rect x="1316.00" y="1451.50" width="8.60" height="14.50" fill="#4c4f60"/><rect x="1316.00" y="1454.36" width="8.60" height="11.64" fill="#f04286"/><rect x="1326.75" y="1451.50" width="8.60" height="14.50" fill="#4c4f60"/><rect x="1326.75" y="1453.20" width="8.60" height="12.80" fill="#f7be90"/><rect x="1344.55" y="1451.50" width="8.60" height="14.50" fill="#4c4f60"/><rect x="1344.55" y="1464.80" width="8.60" height="1.20" fill="#b49cf7"/><rect x="1355.30" y="1451.50" width="8.60" height="14.50" fill="#4c4f60"/><rect x="1355.30" y="1463.64" width="8.60" height="2.36" fill="#f07f2e"/><rect x="1366.05" y="1451.50" width="8.60" height="14.50" fill="#4c4f60"/><rect x="1366.05" y="1462.48" width="8.60" height="3.52" fill="#4fded0"/><rect x="1376.80" y="1451.50" width="8.60" height="14.50" fill="#4c4f60"/><rect x="1376.80" y="1461.32" width="8.60" height="4.68" fill="#d04ff0"/><rect x="1387.55" y="1451.50" width="8.60" height="14.50" fill="#4c4f60"/><rect x="1387.55" y="1460.16" width="8.60" height="5.84" fill="#f0a0cc"/><rect x="1398.30" y="1451.50" width="8.60" height="14.50" fill="#4c4f60"/><rect x="1398.30" y="1459.00" width="8.60" height="7.00" fill="#7050ee"/><rect x="1409.05" y="1451.50" width="8.60" height="14.50" fill="#4c4f60"/><rect x="1409.05" y="1457.84" width="8.60" height="8.16" fill="#f0903c"/><rect x="1419.80" y="1451.50" width="8.60" height="14.50" fill="#4c4f60"/><rect x="1419.80" y="1456.68" width="8.60" height="9.32" fill="#1fa898"/><rect x="1430.55" y="1451.50" width="8.60" height="14.50" fill="#4c4f60"/><rect x="1430.55" y="1455.52" width="8.60" height="10.48" fill="#e08ff0"/><rect x="1441.30" y="1451.50" width="8.60" height="14.50" fill="#4c4f60"/><rect x="1441.30" y="1454.36" width="8.60" height="11.64" fill="#f04286"/><rect x="1452.05" y="1451.50" width="8.60" height="14.50" fill="#4c4f60"/><rect x="1452.05" y="1453.20" width="8.60" height="12.80" fill="#f7be90"/><rect x="1462.80" y="1451.50" width="8.60" height="14.50" fill="#4c4f60"/><rect x="1462.80" y="1452.04" width="8.60" height="13.96" fill="#22c2b2"/></svg>
<div class="t" style="left:530px;top:1192.6px;font-size:2.6px;line-height:3px;color:#e0e0e8;font-weight:700">Width: small - Stacked:<br>stacked: false</div>
<div class="t" style="left:530px;top:1218.5px;font-size:2.6px;line-height:3px;color:#e0e0e8;font-weight:700">stacked: true</div>
<div class="t" style="left:530px;top:1240.8px;font-size:2.6px;line-height:3px;color:#e0e0e8;font-weight:700">Width: large<br>stacked: false</div>
<div class="t" style="left:530px;top:1266.1px;font-size:2.6px;line-height:3px;color:#e0e0e8;font-weight:700">stacked: true</div>
<div class="t" style="left:530px;top:1286.9px;font-size:2.6px;line-height:3px;color:#e0e0e8;font-weight:700">Width: medium<br>stacked: false<br>embed number: false</div>
<div class="t" style="left:530px;top:1310.9px;font-size:2.6px;line-height:3px;color:#e0e0e8;font-weight:700">stacked: true<br>embed number: false</div>
<div class="t" style="left:530px;top:1332.8px;font-size:2.6px;line-height:3px;color:#e0e0e8;font-weight:700">stacked: false<br>embed number: true</div>
<div class="t" style="left:530px;top:1358.5px;font-size:2.6px;line-height:3px;color:#e0e0e8;font-weight:700">stacked: true<br>embed number: true</div>
<div class="t" style="left:530px;top:1387.9px;font-size:2.6px;line-height:3px;color:#e0e0e8;font-weight:700">Width: large<br>stacked: false<br>embed number: false</div>
<div class="t" style="left:530px;top:1414.0px;font-size:2.6px;line-height:3px;color:#e0e0e8;font-weight:700">stacked: true<br>embed number: false</div>
<div class="t" style="left:530px;top:1438.6px;font-size:2.6px;line-height:3px;color:#e0e0e8;font-weight:700">stacked: false<br>embed number: true</div>
<div class="t" style="left:530px;top:1463.0px;font-size:2.6px;line-height:3px;color:#e0e0e8;font-weight:700">stacked: true<br>embed number: true</div>
<div class="r" style="left:514px;top:400.5px;width:994.5px;height:372.5px;background:transparent;border:4.5px solid #0d99ff;box-sizing:border-box"></div>
<div class="r" style="left:1520px;top:195px;width:278px;height:582px;background:#ffffff;border-radius:4px"></div>
<div class="r" style="left:1520px;top:195px;width:278px;height:94px;background:#1b1e2b;border-radius:4px 4px 0 0"></div>
<svg class="r" style="left:1530px;top:208.5px;overflow:visible" width="5" height="5" viewBox="0 0 5 5"><circle cx="2.5" cy="2.5" r="1.8" fill="none" stroke="#5b6cf5" stroke-width="1"/></svg>
<div class="t" style="left:1538.5px;top:207.6px;font-size:4.5px;line-height:6px;color:#e6e6ee;font-weight:400;">Pernod Ricard <b>Design system</b></div>
<div class="t" style="left:1532px;top:233.7px;font-size:11.8px;line-height:16px;color:#f0e8f0;font-weight:400;">Usage</div>
<div class="t" style="white-space:normal;left:1532px;top:251.5px;width:256px;font-size:5.6px;line-height:8.8px;color:#9b9cad">Bar charts provide a visual presentation of categorical data. Categorical data is a grouping of data into discrete groups, such as months of the year, age group, shoe sizes, and animals. These categories are usually qualitative. Bars on the chart may be arranged in any order.</div>
<div class="r" style="left:1532px;top:300.3px;width:254px;height:0.6px;background:#e6e6ea;"></div>
<div class="r" style="left:1532px;top:311.3px;width:254px;height:0.6px;background:#e6e6ea;"></div>
<div class="r" style="left:1532px;top:331.2px;width:254px;height:0.6px;background:#e6e6ea;"></div>
<div class="t" style="left:1532px;top:303.0px;font-size:5.6px;line-height:7px;color:#1e1e2e;font-weight:400;"><b>Family</b></div>
<div class="t" style="left:1621px;top:302.5px;font-size:6.1px;line-height:8px;color:#1e1e2e;font-weight:400;">Chart</div>
<div class="t" style="left:1532px;top:318.0px;font-size:5.8px;line-height:8px;color:#1e1e2e;font-weight:400;"><b>Function</b></div>
<div class="t" style="left:1621px;top:313.5px;font-size:6.1px;line-height:8px;color:#1e1e2e;font-weight:400;">Comparison</div>
<div class="t" style="left:1621px;top:322.0px;font-size:6.15px;line-height:8px;color:#1e1e2e;font-weight:400;">Trend overt time</div>
<div class="t" style="left:1532px;top:337.0px;font-size:7.6px;line-height:10px;color:#1e1e2e;font-weight:400;">Vertical simple bar chart</div>
<div class="t" style="left:1532px;top:348.0px;font-size:4.6px;line-height:6px;color:#1e1e2e;font-weight:400;"><b>Recommended for</b></div>
<div class="r" style="left:1532px;top:355.5px;width:23px;height:6.6px;background:#3d4ef0;border-radius:4px"></div><div class="t" style="left:1532px;top:355.5px;width:23px;height:6.6px;font-size:3.2px;line-height:6.6px;color:#e8ebff;text-align:center">Comparison</div><div class="r" style="left:1559px;top:355.5px;width:32px;height:6.6px;background:#3d4ef0;border-radius:4px"></div><div class="t" style="left:1559px;top:355.5px;width:32px;height:6.6px;font-size:3.2px;line-height:6.6px;color:#e8ebff;text-align:center">Change over time</div><div class="r" style="left:1595px;top:355.5px;width:25px;height:6.6px;background:#3d4ef0;border-radius:4px"></div><div class="t" style="left:1595px;top:355.5px;width:25px;height:6.6px;font-size:3.2px;line-height:6.6px;color:#e8ebff;text-align:center">Distributions</div>
<div class="r" style="left:1532px;top:368px;width:254px;height:86.60000000000002px;background:#dfe6f8;border-radius:3px"></div><svg class="r" style="left:1603px;top:377px;overflow:visible" width="112" height="69" viewBox="0 0 112 69"><rect x="0.00" y="0.00" width="112.00" height="69.00" fill="#a3a8f6"/><rect x="8.62" y="0.00" width="0.90" height="69.00" fill="#b9bcf8"/><rect x="17.23" y="0.00" width="0.90" height="69.00" fill="#b9bcf8"/><rect x="25.85" y="0.00" width="0.90" height="69.00" fill="#b9bcf8"/><rect x="34.46" y="0.00" width="0.90" height="69.00" fill="#b9bcf8"/><rect x="43.08" y="0.00" width="0.90" height="69.00" fill="#b9bcf8"/><rect x="51.69" y="0.00" width="0.90" height="69.00" fill="#b9bcf8"/><rect x="60.31" y="0.00" width="0.90" height="69.00" fill="#b9bcf8"/><rect x="68.92" y="0.00" width="0.90" height="69.00" fill="#b9bcf8"/><rect x="77.54" y="0.00" width="0.90" height="69.00" fill="#b9bcf8"/><rect x="86.15" y="0.00" width="0.90" height="69.00" fill="#b9bcf8"/><rect x="94.77" y="0.00" width="0.90" height="69.00" fill="#b9bcf8"/><rect x="103.38" y="0.00" width="0.90" height="69.00" fill="#b9bcf8"/><rect x="0.00" y="8.62" width="112.00" height="0.80" fill="#b9bcf8"/><rect x="0.00" y="17.25" width="112.00" height="0.80" fill="#b9bcf8"/><rect x="0.00" y="25.88" width="112.00" height="0.80" fill="#b9bcf8"/><rect x="0.00" y="34.50" width="112.00" height="0.80" fill="#b9bcf8"/><rect x="0.00" y="43.12" width="112.00" height="0.80" fill="#b9bcf8"/><rect x="0.00" y="51.75" width="112.00" height="0.80" fill="#b9bcf8"/><rect x="0.00" y="60.38" width="112.00" height="0.80" fill="#b9bcf8"/><rect x="8.96" y="8.28" width="94.08" height="3.45" fill="#8b90e8"/><rect x="8.96" y="13.80" width="94.08" height="2.07" fill="#9297ec"/><rect x="14.56" y="46.23" width="4.48" height="4.14" fill="#3b3ff0"/><rect x="23.52" y="44.30" width="4.48" height="6.07" fill="#9a3f6a"/><rect x="32.48" y="42.37" width="4.48" height="8.00" fill="#127f9a"/><rect x="41.44" y="40.43" width="4.48" height="9.94" fill="#7a22c8"/><rect x="50.40" y="38.50" width="4.48" height="11.87" fill="#b83fb8"/><rect x="59.36" y="36.57" width="4.48" height="13.80" fill="#2a1fd0"/><rect x="68.32" y="34.64" width="4.48" height="15.73" fill="#b0604f"/><rect x="77.28" y="32.71" width="4.48" height="17.66" fill="#0f5a8a"/><rect x="86.24" y="30.77" width="4.48" height="19.60" fill="#8a1a78"/><rect x="95.20" y="28.84" width="4.48" height="21.53" fill="#9b32e8"/></svg>
<div class="t" style="left:1532px;top:461.0px;font-size:4.75px;line-height:6px;color:#1e1e2e;font-weight:400;"><b>Categorical data</b></div>
<div class="t" style="white-space:normal;left:1532px;top:467.5px;width:256px;font-size:4.8px;line-height:7px;color:#333">Bar charts provide a visual presentation of categorical data. Categorical data in a grouping of data into discrete groups, such as months of the year, countries, and brands.</div>
<div class="t" style="left:1532px;top:487.0px;font-size:7.6px;line-height:10px;color:#1e1e2e;font-weight:400;">Stacked bar chart</div>
<div class="t" style="left:1532px;top:498.0px;font-size:4.6px;line-height:6px;color:#1e1e2e;font-weight:400;"><b>Recommended for</b></div>
<div class="r" style="left:1532px;top:505.4px;width:23px;height:6.6px;background:#3d4ef0;border-radius:4px"></div><div class="t" style="left:1532px;top:505.4px;width:23px;height:6.6px;font-size:3.2px;line-height:6.6px;color:#e8ebff;text-align:center">Comparison</div><div class="r" style="left:1559px;top:505.4px;width:32px;height:6.6px;background:#3d4ef0;border-radius:4px"></div><div class="t" style="left:1559px;top:505.4px;width:32px;height:6.6px;font-size:3.2px;line-height:6.6px;color:#e8ebff;text-align:center">Change over time</div><div class="r" style="left:1595px;top:505.4px;width:25px;height:6.6px;background:#3d4ef0;border-radius:4px"></div><div class="t" style="left:1595px;top:505.4px;width:25px;height:6.6px;font-size:3.2px;line-height:6.6px;color:#e8ebff;text-align:center">Part of whole</div><div class="r" style="left:1624px;top:505.4px;width:25px;height:6.6px;background:#3d4ef0;border-radius:4px"></div><div class="t" style="left:1624px;top:505.4px;width:25px;height:6.6px;font-size:3.2px;line-height:6.6px;color:#e8ebff;text-align:center">Distributions</div>
<div class="r" style="left:1532px;top:518px;width:254px;height:86.60000000000002px;background:#dfe6f8;border-radius:3px"></div><svg class="r" style="left:1603px;top:527px;overflow:visible" width="112" height="69" viewBox="0 0 112 69"><rect x="0.00" y="0.00" width="112.00" height="69.00" fill="#a3a8f6"/><rect x="8.62" y="0.00" width="0.90" height="69.00" fill="#b9bcf8"/><rect x="17.23" y="0.00" width="0.90" height="69.00" fill="#b9bcf8"/><rect x="25.85" y="0.00" width="0.90" height="69.00" fill="#b9bcf8"/><rect x="34.46" y="0.00" width="0.90" height="69.00" fill="#b9bcf8"/><rect x="43.08" y="0.00" width="0.90" height="69.00" fill="#b9bcf8"/><rect x="51.69" y="0.00" width="0.90" height="69.00" fill="#b9bcf8"/><rect x="60.31" y="0.00" width="0.90" height="69.00" fill="#b9bcf8"/><rect x="68.92" y="0.00" width="0.90" height="69.00" fill="#b9bcf8"/><rect x="77.54" y="0.00" width="0.90" height="69.00" fill="#b9bcf8"/><rect x="86.15" y="0.00" width="0.90" height="69.00" fill="#b9bcf8"/><rect x="94.77" y="0.00" width="0.90" height="69.00" fill="#b9bcf8"/><rect x="103.38" y="0.00" width="0.90" height="69.00" fill="#b9bcf8"/><rect x="0.00" y="8.62" width="112.00" height="0.80" fill="#b9bcf8"/><rect x="0.00" y="17.25" width="112.00" height="0.80" fill="#b9bcf8"/><rect x="0.00" y="25.88" width="112.00" height="0.80" fill="#b9bcf8"/><rect x="0.00" y="34.50" width="112.00" height="0.80" fill="#b9bcf8"/><rect x="0.00" y="43.12" width="112.00" height="0.80" fill="#b9bcf8"/><rect x="0.00" y="51.75" width="112.00" height="0.80" fill="#b9bcf8"/><rect x="0.00" y="60.38" width="112.00" height="0.80" fill="#b9bcf8"/><rect x="8.96" y="8.28" width="94.08" height="3.45" fill="#8b90e8"/><rect x="8.96" y="13.80" width="94.08" height="2.07" fill="#9297ec"/><rect x="14.56" y="47.61" width="4.48" height="2.76" fill="#3b3ff0"/><rect x="23.52" y="45.19" width="4.48" height="5.18" fill="#9a3f6a"/><rect x="32.48" y="42.78" width="4.48" height="7.59" fill="#127f9a"/><rect x="41.44" y="40.36" width="4.48" height="10.01" fill="#7a22c8"/><rect x="50.40" y="37.95" width="4.48" height="12.42" fill="#b83fb8"/><rect x="59.36" y="35.53" width="4.48" height="14.84" fill="#2a1fd0"/><rect x="68.32" y="33.12" width="4.48" height="17.25" fill="#b0604f"/><rect x="77.28" y="30.70" width="4.48" height="19.67" fill="#0f5a8a"/><rect x="86.24" y="28.29" width="4.48" height="22.08" fill="#8a1a78"/><rect x="95.20" y="25.87" width="4.48" height="24.50" fill="#9b32e8"/></svg>
<div class="t" style="left:1532px;top:611.0px;font-size:4.75px;line-height:6px;color:#1e1e2e;font-weight:400;"><b>Stacked bar chart with embed-number</b></div>
<div class="t" style="white-space:normal;left:1532px;top:617.5px;width:256px;font-size:4.8px;line-height:7px;color:#333">Stacked Bar Chart is multiple datasets on top of each other in order to show how the larger category is divided into the smaller categories and their relations to the total amount.</div>
<div class="t" style="left:1532px;top:637.0px;font-size:7.65px;line-height:10px;color:#1e1e2e;font-weight:400;">Tooltips on bar chart</div>
<div class="r" style="left:1532px;top:651.8px;width:254px;height:86.20000000000005px;background:#dfe6f8;border-radius:3px"></div><svg class="r" style="left:1597px;top:658px;overflow:visible" width="124" height="75" viewBox="0 0 124 75"><rect x="0.00" y="0.00" width="124.00" height="75.00" fill="#a3a8f6"/><rect x="9.54" y="0.00" width="0.90" height="75.00" fill="#b9bcf8"/><rect x="19.08" y="0.00" width="0.90" height="75.00" fill="#b9bcf8"/><rect x="28.62" y="0.00" width="0.90" height="75.00" fill="#b9bcf8"/><rect x="38.15" y="0.00" width="0.90" height="75.00" fill="#b9bcf8"/><rect x="47.69" y="0.00" width="0.90" height="75.00" fill="#b9bcf8"/><rect x="57.23" y="0.00" width="0.90" height="75.00" fill="#b9bcf8"/><rect x="66.77" y="0.00" width="0.90" height="75.00" fill="#b9bcf8"/><rect x="76.31" y="0.00" width="0.90" height="75.00" fill="#b9bcf8"/><rect x="85.85" y="0.00" width="0.90" height="75.00" fill="#b9bcf8"/><rect x="95.38" y="0.00" width="0.90" height="75.00" fill="#b9bcf8"/><rect x="104.92" y="0.00" width="0.90" height="75.00" fill="#b9bcf8"/><rect x="114.46" y="0.00" width="0.90" height="75.00" fill="#b9bcf8"/><rect x="0.00" y="9.38" width="124.00" height="0.80" fill="#b9bcf8"/><rect x="0.00" y="18.75" width="124.00" height="0.80" fill="#b9bcf8"/><rect x="0.00" y="28.12" width="124.00" height="0.80" fill="#b9bcf8"/><rect x="0.00" y="37.50" width="124.00" height="0.80" fill="#b9bcf8"/><rect x="0.00" y="46.88" width="124.00" height="0.80" fill="#b9bcf8"/><rect x="0.00" y="56.25" width="124.00" height="0.80" fill="#b9bcf8"/><rect x="0.00" y="65.62" width="124.00" height="0.80" fill="#b9bcf8"/><rect x="9.92" y="9.00" width="104.16" height="3.75" fill="#8b90e8"/><rect x="9.92" y="15.00" width="104.16" height="2.25" fill="#9297ec"/><rect x="28.52" y="37.50" width="11.16" height="6.75" fill="#2d2f8a"/><rect x="18.60" y="48.00" width="6.20" height="1.50" fill="#5b3fd0"/><rect x="31.00" y="48.00" width="6.20" height="2.25" fill="#a33a3a"/><rect x="53.32" y="48.00" width="6.20" height="1.50" fill="#5b3fd0"/><rect x="65.72" y="48.00" width="6.20" height="2.25" fill="#a33a3a"/><rect x="9.92" y="61.50" width="104.16" height="7.50" fill="#9297e6"/></svg>
<div class="t" style="left:1532px;top:745.0px;font-size:4.65px;line-height:6px;color:#1e1e2e;font-weight:400;"><b>Placement</b></div>
<div class="t" style="white-space:normal;left:1532px;top:751.5px;width:256px;font-size:4.95px;line-height:7px;color:#333">Bar charts are used in cards, they can have a tooltip that appears in position absolute once the user hovers over an element.</div>
<div class="r" style="left:1812px;top:196px;width:278px;height:144px;background:#ffffff;border-radius:4px"></div>
<div class="r" style="left:1812px;top:196px;width:278px;height:64px;background:#1b1e2b;border-radius:4px 4px 0 0"></div>
<svg class="r" style="left:1822px;top:208.5px;overflow:visible" width="5" height="5" viewBox="0 0 5 5"><circle cx="2.5" cy="2.5" r="1.8" fill="none" stroke="#5b6cf5" stroke-width="1"/></svg>
<div class="t" style="left:1830.5px;top:207.6px;font-size:4.5px;line-height:6px;color:#e6e6ee;font-weight:400;">Pernod Ricard <b>Design system</b></div>
<div class="t" style="left:1824px;top:233.5px;font-size:12.3px;line-height:17px;color:#f0e8f0;font-weight:400;">How to use instances</div>
<svg class="r" style="left:1824px;top:274px;overflow:visible" width="31" height="21" viewBox="0 0 31 21"><rect x="2.00" y="0.00" width="28.00" height="17.70" fill="#e3e3e5"/><rect x="2.00" y="0.00" width="0.60" height="17.70" fill="#d2d2d5"/><rect x="4.00" y="0.00" width="0.60" height="17.70" fill="#d2d2d5"/><rect x="6.00" y="0.00" width="0.60" height="17.70" fill="#d2d2d5"/><rect x="8.00" y="0.00" width="0.60" height="17.70" fill="#d2d2d5"/><rect x="10.00" y="0.00" width="0.60" height="17.70" fill="#d2d2d5"/><rect x="12.00" y="0.00" width="0.60" height="17.70" fill="#d2d2d5"/><rect x="14.00" y="0.00" width="0.60" height="17.70" fill="#d2d2d5"/><rect x="16.00" y="0.00" width="0.60" height="17.70" fill="#d2d2d5"/><rect x="18.00" y="0.00" width="0.60" height="17.70" fill="#d2d2d5"/><rect x="20.00" y="0.00" width="0.60" height="17.70" fill="#d2d2d5"/><rect x="22.00" y="0.00" width="0.60" height="17.70" fill="#d2d2d5"/><rect x="24.00" y="0.00" width="0.60" height="17.70" fill="#d2d2d5"/><rect x="26.00" y="0.00" width="0.60" height="17.70" fill="#d2d2d5"/><rect x="28.00" y="0.00" width="0.60" height="17.70" fill="#d2d2d5"/><rect x="30.00" y="0.00" width="0.60" height="17.70" fill="#d2d2d5"/><rect x="2.50" y="0.00" width="0.40" height="17.70" fill="#aaa"/><rect x="2.50" y="17.70" width="28.00" height="0.40" fill="#aaa"/><rect x="3.90" y="8.00" width="1.50" height="9.70" fill="#1f222b"/><rect x="8.40" y="6.90" width="1.50" height="10.80" fill="#1f222b"/><rect x="13.00" y="4.60" width="1.50" height="13.10" fill="#1f222b"/><rect x="17.50" y="8.60" width="1.50" height="9.10" fill="#1f222b"/><rect x="22.60" y="6.90" width="1.50" height="10.80" fill="#1f222b"/><rect x="27.10" y="12.00" width="1.50" height="5.70" fill="#1f222b"/></svg>
<svg class="r" style="left:1951px;top:274px;overflow:visible" width="31" height="21" viewBox="0 0 31 21"><rect x="0.00" y="0.00" width="5.00" height="17.70" fill="#d6d6d9"/><rect x="4.00" y="17.70" width="26.00" height="2.50" fill="#dedee0"/><rect x="2.50" y="0.00" width="0.40" height="17.70" fill="#aaa"/><rect x="2.50" y="17.70" width="28.00" height="0.40" fill="#aaa"/><rect x="3.90" y="8.00" width="1.50" height="9.70" fill="#1f222b"/><rect x="8.40" y="6.90" width="1.50" height="10.80" fill="#1f222b"/><rect x="13.00" y="4.60" width="1.50" height="13.10" fill="#1f222b"/><rect x="17.50" y="8.60" width="1.50" height="9.10" fill="#1f222b"/><rect x="22.60" y="6.90" width="1.50" height="10.80" fill="#1f222b"/><rect x="27.10" y="12.00" width="1.50" height="5.70" fill="#1f222b"/></svg>
<svg class="r" style="left:1824px;top:303px;overflow:visible" width="31" height="21" viewBox="0 0 31 21"><rect x="2.50" y="0.00" width="0.40" height="17.70" fill="#aaa"/><rect x="2.50" y="17.70" width="28.00" height="0.40" fill="#aaa"/><rect x="4.00" y="8.00" width="1.30" height="1.00" fill="#777"/><rect x="4.00" y="10.00" width="1.30" height="1.00" fill="#777"/><rect x="4.00" y="12.00" width="1.30" height="1.00" fill="#777"/><rect x="4.00" y="14.00" width="1.30" height="1.00" fill="#777"/><rect x="4.00" y="16.00" width="1.30" height="1.00" fill="#777"/><rect x="8.50" y="6.00" width="1.30" height="1.00" fill="#777"/><rect x="8.50" y="8.00" width="1.30" height="1.00" fill="#777"/><rect x="8.50" y="10.00" width="1.30" height="1.00" fill="#777"/><rect x="8.50" y="12.00" width="1.30" height="1.00" fill="#777"/><rect x="8.50" y="14.00" width="1.30" height="1.00" fill="#777"/><rect x="8.50" y="16.00" width="1.30" height="1.00" fill="#777"/><rect x="13.10" y="4.00" width="1.30" height="1.00" fill="#777"/><rect x="13.10" y="6.00" width="1.30" height="1.00" fill="#777"/><rect x="13.10" y="8.00" width="1.30" height="1.00" fill="#777"/><rect x="13.10" y="10.00" width="1.30" height="1.00" fill="#777"/><rect x="13.10" y="12.00" width="1.30" height="1.00" fill="#777"/><rect x="13.10" y="14.00" width="1.30" height="1.00" fill="#777"/><rect x="13.10" y="16.00" width="1.30" height="1.00" fill="#777"/><rect x="17.60" y="8.00" width="1.30" height="1.00" fill="#777"/><rect x="17.60" y="10.00" width="1.30" height="1.00" fill="#777"/><rect x="17.60" y="12.00" width="1.30" height="1.00" fill="#777"/><rect x="17.60" y="14.00" width="1.30" height="1.00" fill="#777"/><rect x="17.60" y="16.00" width="1.30" height="1.00" fill="#777"/><rect x="22.70" y="6.00" width="1.30" height="1.00" fill="#777"/><rect x="22.70" y="8.00" width="1.30" height="1.00" fill="#777"/><rect x="22.70" y="10.00" width="1.30" height="1.00" fill="#777"/><rect x="22.70" y="12.00" width="1.30" height="1.00" fill="#777"/><rect x="22.70" y="14.00" width="1.30" height="1.00" fill="#777"/><rect x="22.70" y="16.00" width="1.30" height="1.00" fill="#777"/><rect x="27.20" y="12.00" width="1.30" height="1.00" fill="#777"/><rect x="27.20" y="14.00" width="1.30" height="1.00" fill="#777"/><rect x="27.20" y="16.00" width="1.30" height="1.00" fill="#777"/></svg>
<div class="t" style="left:1862px;top:272.0px;font-size:5.85px;line-height:8px;color:#333;font-weight:400;"><b>Edit the number of data</b></div>
<div class="t" style="left:1862px;top:284.0px;font-size:2.6px;line-height:3px;color:#555;font-weight:400;">1. Click on the instance</div>
<div class="t" style="left:1862px;top:290.3px;font-size:2.6px;line-height:3px;color:#555;font-weight:400;">2. Adjust the "Count" in properties panel</div>
<div class="t" style="left:1989px;top:272.0px;font-size:5.85px;line-height:8px;color:#333;font-weight:400;"><b>Edit axis</b></div>
<div class="t" style="left:1989px;top:284.0px;font-size:2.6px;line-height:3px;color:#555;font-weight:400;">1. Click on the instance</div>
<div class="t" style="left:1989px;top:290.3px;font-size:2.6px;line-height:3px;color:#555;font-weight:400;">2. Adjust the "Count" properties to fit the properties panel for properties panel</div>
<div class="t" style="left:1862px;top:301.7px;font-size:5.85px;line-height:8px;color:#333;font-weight:400;"><b>Edit bars value/options</b></div>
<div class="t" style="left:1862px;top:313.3px;font-size:2.6px;line-height:3px;color:#555;font-weight:400;">1. Click on the instance</div>
<div class="t" style="left:1862px;top:319.5px;font-size:2.6px;line-height:3px;color:#555;font-weight:400;">2. Select the selected layer, then select "Set Value" in the layer panel</div>
<div class="t" style="left:1862px;top:325.5px;font-size:2.6px;line-height:3px;color:#555;font-weight:400;">3. Adjust the "Value" in properties panel</div>
<div class="r" style="left:2105px;top:195.5px;width:277px;height:211px;background:#ffffff;border-radius:4px"></div>
<div class="r" style="left:2105px;top:195.5px;width:277px;height:64.5px;background:#1b1e2b;border-radius:4px 4px 0 0"></div>
<svg class="r" style="left:2114px;top:208.5px;overflow:visible" width="5" height="5" viewBox="0 0 5 5"><circle cx="2.5" cy="2.5" r="1.8" fill="none" stroke="#5b6cf5" stroke-width="1"/></svg>
<div class="t" style="left:2122px;top:207.6px;font-size:4.5px;line-height:6px;color:#e6e6ee;font-weight:400;">Pernod Ricard <b>Design system</b></div>
<div class="t" style="left:2116px;top:233.5px;font-size:12.2px;line-height:17px;color:#f0e8f0;font-weight:400;">Variants &amp; Anatomy</div>
<div class="t" style="left:2116px;top:272.0px;font-size:4.6px;line-height:6px;color:#1e1e2e;font-weight:400;"><b>Background</b></div>
<div class="t" style="left:2116px;top:280.0px;font-size:4.85px;line-height:6px;color:#777;font-weight:400;">The background color where the</div>
<div class="t" style="left:2116px;top:287.0px;font-size:4.85px;line-height:6px;color:#777;font-weight:400;">component is located.</div>
<div class="t" style="left:2197px;top:272.0px;font-size:4.6px;line-height:6px;color:#333;font-weight:400;">&bull;&nbsp; Dark</div>
<div class="t" style="left:2197px;top:279.6px;font-size:4.6px;line-height:6px;color:#333;font-weight:400;">&bull;&nbsp; Light</div>
<div class="t" style="left:2116px;top:306.0px;font-size:4.6px;line-height:6px;color:#1e1e2e;font-weight:400;"><b>Count</b></div>
<div class="t" style="left:2116px;top:314.0px;font-size:4.85px;line-height:6px;color:#777;font-weight:400;">Description of the specification.</div>
<div class="t" style="left:2197px;top:306.0px;font-size:4.6px;line-height:6px;color:#333;font-weight:400;">&bull;&nbsp; 1 to 10</div>
<div class="t" style="left:2116px;top:333.0px;font-size:4.6px;line-height:6px;color:#1e1e2e;font-weight:400;"><b>Size</b></div>
<div class="t" style="left:2116px;top:341.0px;font-size:4.85px;line-height:6px;color:#777;font-weight:400;">Responsive size available to fit the</div>
<div class="t" style="left:2116px;top:348.0px;font-size:4.85px;line-height:6px;color:#777;font-weight:400;">holder (Extra small and Small</div>
<div class="t" style="left:2116px;top:355.0px;font-size:4.85px;line-height:6px;color:#777;font-weight:400;">mainly used for mobile or tablet).</div>
<div class="t" style="left:2197px;top:333.0px;font-size:4.6px;line-height:6px;color:#333;font-weight:400;">&bull;&nbsp; Small</div>
<div class="t" style="left:2197px;top:340.6px;font-size:4.6px;line-height:6px;color:#333;font-weight:400;">&bull;&nbsp; Xsmall</div>
<div class="t" style="left:2197px;top:348.2px;font-size:4.6px;line-height:6px;color:#333;font-weight:400;">&bull;&nbsp; Medium</div>
<div class="t" style="left:2197px;top:355.8px;font-size:4.6px;line-height:6px;color:#333;font-weight:400;">&bull;&nbsp; Large</div>
<div class="t" style="left:2116px;top:374.0px;font-size:4.6px;line-height:6px;color:#1e1e2e;font-weight:400;"><b>Type</b></div>
<div class="t" style="left:2116px;top:382.0px;font-size:4.85px;line-height:6px;color:#777;font-weight:400;">Main component variant</div>
<div class="t" style="left:2197px;top:374.0px;font-size:4.6px;line-height:6px;color:#333;font-weight:400;">&bull;&nbsp; Stacked</div>
<div class="t" style="left:2197px;top:381.6px;font-size:4.6px;line-height:6px;color:#333;font-weight:400;">&bull;&nbsp; Embed numbers</div>
<div class="r" style="left:2116px;top:299.6px;width:255px;height:0.5px;background:#ececf0;"></div>
<div class="r" style="left:2116px;top:326.4px;width:255px;height:0.5px;background:#ececf0;"></div>
<div class="r" style="left:2116px;top:367.6px;width:255px;height:0.5px;background:#ececf0;"></div>
<div class="r" style="left:2116px;top:394.5px;width:255px;height:0.5px;background:#ececf0;"></div>
<div class="r" style="left:0px;top:166px;width:476px;height:1628px;background:#fff;"></div>
<div class="r" style="left:476px;top:166px;width:1px;height:1628px;background:#e6e6e6;"></div>
<svg class="r" style="left:32px;top:193px;overflow:visible" width="24" height="24" viewBox="0 0 24 24"><circle cx="9.5" cy="9.5" r="8" fill="none" stroke="#999" stroke-width="1.8"/><path d="M15.5 15.5 L22 22" stroke="#999" stroke-width="2"/></svg>
<div class="t" style="left:76px;top:191.0px;font-size:22px;line-height:30px;color:#1e1e1e;font-weight:700;">Layers</div>
<div class="t" style="left:178px;top:191.0px;font-size:22px;line-height:30px;color:#8d8d8d;font-weight:700;">Assets</div>
<svg class="r" style="left:253px;top:194px;overflow:visible" width="8" height="8" viewBox="0 0 8 8"><circle cx="4" cy="4" r="3.8" fill="#1e1e1e"/></svg>
<svg class="r" style="left:313px;top:193.5px;overflow:visible" width="23" height="23" viewBox="0 0 23 23"><rect x="0" y="0" width="23" height="23" rx="5.0" fill="#20c120"/><rect x="1.5" y="1.2" width="20.0" height="3.2" rx="1.6" fill="#5fdc5f" opacity="0.8"/><path d="M3.9 10.8 L6.6 10.3 L9.7 14.9 L17.4 3.4 L19.6 3.4 L10.4 18.9 L9.1 18.9 Z" fill="#fff"/></svg>
<div class="t" style="left:344px;top:191.0px;font-size:22px;line-height:30px;color:#1e1e1e;font-weight:400;">Bar C...</div>
<svg class="r" style="left:429px;top:202px" width="14" height="8" viewBox="0 0 14 8"><path d="M1 7 L7.0 1 L13 7" fill="none" stroke="#b3b3b3" stroke-width="1.6"/></svg>
<div class="r" style="left:0px;top:246px;width:476px;height:2px;background:#e6e6e6;"></div>
<div class="t" style="left:29px;top:271.0px;font-size:22px;line-height:30px;color:#1e1e1e;font-weight:700;">Pages</div>
<svg class="r" style="left:417px;top:275px;overflow:visible" width="22" height="22" viewBox="0 0 22 22"><path d="M11 0 V22 M0 11 H22" stroke="#1e1e1e" stroke-width="2"/></svg>
<div class="r" style="left:0px;top:327px;width:476px;height:2px;background:#e6e6e6;"></div>
<svg class="r" style="left:76px;top:432.5px;overflow:visible" width="23" height="23" viewBox="0 0 23 23"><path d="M4.5 1.5 L22 19 L18 23 L0.5 5.5 Z" fill="#c3d3e6"/><path d="M2.5 3.5 L20 21 L18 23 L0.5 5.5 Z" fill="#9db0c8"/></svg>
<div class="t" style="left:105px;top:428.0px;font-size:23px;line-height:32px;color:#1e1e1e;font-weight:400;">Anatomy</div>
<svg class="r" style="left:76px;top:496.5px;overflow:visible" width="23" height="23" viewBox="0 0 23 23"><path d="M4.5 1.5 L22 19 L18 23 L0.5 5.5 Z" fill="#c3d3e6"/><path d="M2.5 3.5 L20 21 L18 23 L0.5 5.5 Z" fill="#9db0c8"/></svg>
<div class="t" style="left:105px;top:492.0px;font-size:23px;line-height:32px;color:#1e1e1e;font-weight:400;">Axis</div>
<svg class="r" style="left:76px;top:559.5px;overflow:visible" width="23" height="23" viewBox="0 0 23 23"><rect x="0" y="0" width="23" height="23" rx="5.0" fill="#20c120"/><rect x="1.5" y="1.2" width="20.0" height="3.2" rx="1.6" fill="#5fdc5f" opacity="0.8"/><path d="M3.9 10.8 L6.6 10.3 L9.7 14.9 L17.4 3.4 L19.6 3.4 L10.4 18.9 L9.1 18.9 Z" fill="#fff"/></svg>
<div class="t" style="left:105px;top:556.0px;font-size:23px;line-height:32px;color:#1e1e1e;font-weight:400;">Legend</div>
<svg class="r" style="left:76px;top:623.5px;overflow:visible" width="23" height="23" viewBox="0 0 23 23"><rect x="0" y="0" width="23" height="23" rx="5.0" fill="#20c120"/><rect x="1.5" y="1.2" width="20.0" height="3.2" rx="1.6" fill="#5fdc5f" opacity="0.8"/><path d="M3.9 10.8 L6.6 10.3 L9.7 14.9 L17.4 3.4 L19.6 3.4 L10.4 18.9 L9.1 18.9 Z" fill="#fff"/></svg>
<div class="t" style="left:105px;top:620.0px;font-size:23px;line-height:32px;color:#1e1e1e;font-weight:400;">Area</div>
<svg class="r" style="left:76px;top:687.5px;overflow:visible" width="23" height="23" viewBox="0 0 23 23"><rect x="0" y="0" width="23" height="23" rx="5.0" fill="#20c120"/><rect x="1.5" y="1.2" width="20.0" height="3.2" rx="1.6" fill="#5fdc5f" opacity="0.8"/><path d="M3.9 10.8 L6.6 10.3 L9.7 14.9 L17.4 3.4 L19.6 3.4 L10.4 18.9 L9.1 18.9 Z" fill="#fff"/></svg>
<div class="t" style="left:105px;top:684.0px;font-size:23px;line-height:32px;color:#1e1e1e;font-weight:400;">Bar Chart Horizontal</div>
<svg class="r" style="left:76px;top:751.5px;overflow:visible" width="23" height="23" viewBox="0 0 23 23"><rect x="0" y="0" width="23" height="23" rx="5.0" fill="#20c120"/><rect x="1.5" y="1.2" width="20.0" height="3.2" rx="1.6" fill="#5fdc5f" opacity="0.8"/><path d="M3.9 10.8 L6.6 10.3 L9.7 14.9 L17.4 3.4 L19.6 3.4 L10.4 18.9 L9.1 18.9 Z" fill="#fff"/></svg>
<div class="t" style="left:105px;top:748.0px;font-size:23px;line-height:32px;color:#1e1e1e;font-weight:700;letter-spacing:-0.45px">Bar Chart Vertical</div>
<svg class="r" style="left:31px;top:756px;overflow:visible" width="18" height="14" viewBox="0 0 18 14"><path d="M1.5 7 L6.5 12 L16.5 2" fill="none" stroke="#1e1e1e" stroke-width="2.6"/></svg>
<svg class="r" style="left:76px;top:816.5px;overflow:visible" width="23" height="23" viewBox="0 0 23 23"><rect x="0" y="0" width="23" height="23" rx="4" fill="#7d97b5"/><rect x="6.8999999999999995" y="5.75" width="2.99" height="11.5" fill="#fff"/><rect x="13.11" y="5.75" width="2.99" height="11.5" fill="#fff"/></svg>
<div class="t" style="left:105px;top:812.0px;font-size:23px;line-height:32px;color:#1e1e1e;font-weight:400;">Boxplot</div>
<svg class="r" style="left:76px;top:879.5px;overflow:visible" width="23" height="23" viewBox="0 0 23 23"><rect x="0" y="0" width="23" height="23" rx="5.0" fill="#20c120"/><rect x="1.5" y="1.2" width="20.0" height="3.2" rx="1.6" fill="#5fdc5f" opacity="0.8"/><path d="M3.9 10.8 L6.6 10.3 L9.7 14.9 L17.4 3.4 L19.6 3.4 L10.4 18.9 L9.1 18.9 Z" fill="#fff"/></svg>
<div class="t" style="left:105px;top:876.0px;font-size:23px;line-height:32px;color:#1e1e1e;font-weight:400;">Bubble Chart</div>
<svg class="r" style="left:76px;top:943.5px;overflow:visible" width="23" height="23" viewBox="0 0 23 23"><rect x="0" y="0" width="23" height="23" rx="5.0" fill="#20c120"/><rect x="1.5" y="1.2" width="20.0" height="3.2" rx="1.6" fill="#5fdc5f" opacity="0.8"/><path d="M3.9 10.8 L6.6 10.3 L9.7 14.9 L17.4 3.4 L19.6 3.4 L10.4 18.9 L9.1 18.9 Z" fill="#fff"/></svg>
<div class="t" style="left:105px;top:940.0px;font-size:23px;line-height:32px;color:#1e1e1e;font-weight:400;">Donut</div>
<svg class="r" style="left:76px;top:1007.5px;overflow:visible" width="23" height="23" viewBox="0 0 23 23"><rect x="0" y="0" width="23" height="23" rx="5.0" fill="#20c120"/><rect x="1.5" y="1.2" width="20.0" height="3.2" rx="1.6" fill="#5fdc5f" opacity="0.8"/><path d="M3.9 10.8 L6.6 10.3 L9.7 14.9 L17.4 3.4 L19.6 3.4 L10.4 18.9 L9.1 18.9 Z" fill="#fff"/></svg>
<div class="t" style="left:105px;top:1004.0px;font-size:23px;line-height:32px;color:#1e1e1e;font-weight:400;">Flat Gauge</div>
<svg class="r" style="left:76px;top:1071.5px;overflow:visible" width="23" height="23" viewBox="0 0 23 23"><rect x="0" y="0" width="23" height="23" rx="5.0" fill="#20c120"/><rect x="1.5" y="1.2" width="20.0" height="3.2" rx="1.6" fill="#5fdc5f" opacity="0.8"/><path d="M3.9 10.8 L6.6 10.3 L9.7 14.9 L17.4 3.4 L19.6 3.4 L10.4 18.9 L9.1 18.9 Z" fill="#fff"/></svg>
<div class="t" style="left:105px;top:1068.0px;font-size:23px;line-height:32px;color:#1e1e1e;font-weight:400;">Line</div>
<svg class="r" style="left:76px;top:1135.5px;overflow:visible" width="23" height="23" viewBox="0 0 23 23"><rect x="0" y="0" width="23" height="23" rx="5.0" fill="#20c120"/><rect x="1.5" y="1.2" width="20.0" height="3.2" rx="1.6" fill="#5fdc5f" opacity="0.8"/><path d="M3.9 10.8 L6.6 10.3 L9.7 14.9 L17.4 3.4 L19.6 3.4 L10.4 18.9 L9.1 18.9 Z" fill="#fff"/></svg>
<div class="t" style="left:105px;top:1132.0px;font-size:23px;line-height:32px;color:#1e1e1e;font-weight:400;">Heat Map</div>
<svg class="r" style="left:76px;top:1199.5px;overflow:visible" width="23" height="23" viewBox="0 0 23 23"><rect x="0" y="0" width="23" height="23" rx="5.0" fill="#20c120"/><rect x="1.5" y="1.2" width="20.0" height="3.2" rx="1.6" fill="#5fdc5f" opacity="0.8"/><path d="M3.9 10.8 L6.6 10.3 L9.7 14.9 L17.4 3.4 L19.6 3.4 L10.4 18.9 L9.1 18.9 Z" fill="#fff"/></svg>
<div class="t" style="left:105px;top:1196.0px;font-size:23px;line-height:32px;color:#1e1e1e;font-weight:400;">Pie chart</div>
<svg class="r" style="left:76px;top:1263.5px;overflow:visible" width="23" height="23" viewBox="0 0 23 23"><rect x="0" y="0" width="23" height="23" rx="5.0" fill="#20c120"/><rect x="1.5" y="1.2" width="20.0" height="3.2" rx="1.6" fill="#5fdc5f" opacity="0.8"/><path d="M3.9 10.8 L6.6 10.3 L9.7 14.9 L17.4 3.4 L19.6 3.4 L10.4 18.9 L9.1 18.9 Z" fill="#fff"/></svg>
<div class="t" style="left:105px;top:1260.0px;font-size:23px;line-height:32px;color:#1e1e1e;font-weight:400;">Scatter</div>
<svg class="r" style="left:76px;top:1327.5px;overflow:visible" width="23" height="23" viewBox="0 0 23 23"><rect x="0" y="0" width="23" height="23" rx="5.0" fill="#20c120"/><rect x="1.5" y="1.2" width="20.0" height="3.2" rx="1.6" fill="#5fdc5f" opacity="0.8"/><path d="M3.9 10.8 L6.6 10.3 L9.7 14.9 L17.4 3.4 L19.6 3.4 L10.4 18.9 L9.1 18.9 Z" fill="#fff"/></svg>
<div class="t" style="left:105px;top:1324.0px;font-size:23px;line-height:32px;color:#1e1e1e;font-weight:400;">Simple informer</div>
<svg class="r" style="left:76px;top:1392.5px;overflow:visible" width="23" height="23" viewBox="0 0 23 23"><path d="M11.5 1 C14 6 19 9 19 15 C19 19.5 15.5 22.5 11.5 22.5 C7.5 22.5 4 19.5 4 15 C4 11 7 9 8 6 C9 8 10 9 10.5 10 C11.5 7 12 4 11.5 1Z" fill="#f57c1f"/><path d="M11.5 10 C13 13 15.5 15 15.5 17.5 C15.5 20 13.5 22 11.5 22 C9.5 22 7.5 20 7.5 17.5 C7.5 15.5 10 13.5 11.5 10Z" fill="#ffc93c"/></svg>
<div class="t" style="left:105px;top:1388.0px;font-size:23px;line-height:32px;color:#1e1e1e;font-weight:400;">Treemap</div>
<div class="t" style="left:76px;top:1452.0px;font-size:23px;line-height:32px;color:#1e1e1e;font-weight:400;">_deprecated</div>
<div class="r" style="left:0px;top:1497px;width:476px;height:2px;background:#e6e6e6;"></div>
<svg class="r" style="left:31px;top:1519px;overflow:visible" width="26" height="26" viewBox="0 0 26 26"><path d="M13 2 L24 13 L13 24 L2 13 Z" fill="none" stroke="#c5a6f5" stroke-width="1.8"/></svg>
<div class="t" style="left:76px;top:1516.0px;font-size:23px;line-height:32px;color:#8b3ff0;font-weight:400;letter-spacing:0.3px">Documentation/Variants&amp;Anatomy</div>
<svg class="r" style="left:34px;top:1586px;overflow:visible" width="20" height="20" viewBox="0 0 20 20"><rect x="0" y="0" width="20" height="3.5" fill="#1e1e1e"/><rect x="0" y="8" width="20" height="3.5" fill="#1e1e1e"/><rect x="4" y="16" width="12" height="3.5" fill="#1e1e1e"/></svg>
<div class="t" style="left:76px;top:1580.0px;font-size:23px;line-height:32px;color:#1e1e1e;font-weight:700;">Documentation/Usage</div>
<svg class="r" style="left:79px;top:1647px;overflow:visible" width="26" height="26" viewBox="0 0 26 26"><path d="M13 2 L24 13 L13 24 L2 13 Z" fill="none" stroke="#c5a6f5" stroke-width="1.8"/></svg>
<div class="t" style="left:124px;top:1644.0px;font-size:23px;line-height:32px;color:#8b3ff0;font-weight:400;">Header</div>
<svg class="r" style="left:82px;top:1714px;overflow:visible" width="20" height="20" viewBox="0 0 20 20"><rect x="0" y="0" width="16" height="3" fill="#b3b3b3"/><rect x="0" y="8" width="20" height="3" fill="#b3b3b3"/><rect x="0" y="16" width="12" height="3" fill="#b3b3b3"/></svg>
<div class="t" style="left:124px;top:1708.0px;font-size:23px;line-height:32px;color:#1e1e1e;font-weight:400;">Block/Usage</div>
<svg class="r" style="left:130px;top:1777px;overflow:visible" width="20" height="20" viewBox="0 0 20 20"><rect x="0" y="0" width="20" height="3" fill="#b3b3b3"/><rect x="0" y="8" width="20" height="3" fill="#b3b3b3"/></svg>
<div class="t" style="left:172px;top:1772.0px;font-size:23px;line-height:32px;color:#1e1e1e;font-weight:400;">Frame 2738</div>
<div class="r" style="left:2394px;top:166px;width:482px;height:1628px;background:#fff;"></div>
<div class="r" style="left:2394px;top:166px;width:1px;height:1628px;background:#e6e6e6;"></div>
<div class="t" style="left:2428px;top:191.0px;font-size:22px;line-height:30px;color:#1e1e1e;font-weight:700;">Design</div>
<div class="t" style="left:2533px;top:189.5px;font-size:24px;line-height:33px;color:#8d8d8d;font-weight:400;">Prototype</div>
<div class="t" style="left:2669px;top:189.5px;font-size:24px;line-height:33px;color:#8d8d8d;font-weight:400;">Inspect</div>
<div class="r" style="left:2395px;top:246px;width:481px;height:2px;background:#e6e6e6;"></div>
<div class="t" style="left:2428px;top:281.0px;font-size:22px;line-height:30px;color:#1e1e1e;font-weight:700;">Background</div>
<div class="r" style="left:2428px;top:344px;width:32px;height:32px;background:#353844;border-radius:2px"></div>
<div class="t" style="left:2477px;top:345.0px;font-size:22px;line-height:30px;color:#1e1e1e;font-weight:400;letter-spacing:1.2px">353844</div>
<div class="t" style="left:2622px;top:345.0px;font-size:22px;line-height:30px;color:#1e1e1e;font-weight:400;">100%</div>
<svg class="r" style="left:2814px;top:349px;overflow:visible" width="28" height="22" viewBox="0 0 28 22"><path d="M1.5 11 C6 3 22 3 26.5 11 C22 19 6 19 1.5 11 Z" fill="none" stroke="#1e1e1e" stroke-width="2"/><circle cx="14" cy="11" r="4" fill="#1e1e1e"/></svg>
<div class="r" style="left:2395px;top:408px;width:481px;height:2px;background:#e6e6e6;"></div>
<div class="t" style="left:2428px;top:442.0px;font-size:22px;line-height:30px;color:#1e1e1e;font-weight:700;">Text styles</div>
<svg class="r" style="left:2441px;top:513px;overflow:visible" width="10" height="14" viewBox="0 0 10 14"><path d="M1 1 L9 7 L1 13 Z" fill="#999"/></svg>
<div class="t" style="left:2478px;top:505.0px;font-size:22px;line-height:30px;color:#1e1e1e;font-weight:400;letter-spacing:0.6px">datavisualization</div>
<div class="r" style="left:2395px;top:570px;width:481px;height:2px;background:#e6e6e6;"></div>
<div class="t" style="left:2428px;top:606.0px;font-size:22px;line-height:30px;color:#8d8d8d;font-weight:700;">Export</div>
<svg class="r" style="left:2816px;top:609px;overflow:visible" width="24" height="24" viewBox="0 0 24 24"><path d="M12 0 V24 M0 12 H24" stroke="#333" stroke-width="1.8"/></svg>
<div class="r" style="left:2395px;top:668px;width:481px;height:2px;background:#e6e6e6;"></div>
<svg class="r" style="left:2756px;top:1674px;overflow:visible" width="72" height="72" viewBox="0 0 72 72"><circle cx="36" cy="36" r="36" fill="#1e1e1e"/><path d="M28 29 A8 8 0 1 1 40 35 C37 38 36 40 36 43" fill="none" stroke="#fff" stroke-width="1.8"/><circle cx="36" cy="49" r="1.6" fill="#fff"/></svg>
<div class="r" style="left:0px;top:0px;width:2876px;height:70px;background:#000;"></div>
<svg class="r" style="left:22px;top:20px;overflow:visible" width="24" height="24" viewBox="0 0 24 24"><circle cx="12" cy="12" r="11" fill="none" stroke="#4a4a4a" stroke-width="1.6"/></svg>
<svg class="r" style="left:102px;top:20px;overflow:visible" width="24" height="24" viewBox="0 0 24 24"><circle cx="12" cy="12" r="11" fill="none" stroke="#4a4a4a" stroke-width="1.6"/></svg>
<div class="r" style="left:152px;top:0px;width:2px;height:70px;background:#333;"></div>
<div class="r" style="left:234px;top:0px;width:2px;height:70px;background:#333;"></div>
<svg class="r" style="left:181px;top:18px;overflow:visible" width="26" height="28" viewBox="0 0 26 28"><path d="M13 0 L25 10 L25 28 L17 28 L17 18 L9 18 L9 28 L1 28 L1 10 Z" fill="#b3b3b3"/></svg>
<div class="r" style="left:262px;top:18px;width:28px;height:28px;background:#0c3b63;border-radius:4px"></div>
<svg class="r" style="left:262px;top:18px;overflow:visible" width="28" height="28" viewBox="0 0 28 28"><g transform="translate(4.6 4.6) scale(0.56)"><path d="M1.1 1.3 C8 3.5 17 5 21 7.5 C26 10.5 28 15 26.4 20.2 L31.6 25.3 L25.5 31.4 L20.6 26.6 C15 27.5 10 26 8 21.4 C5.5 15.5 3.5 8 1.1 1.3 Z M1.1 1.3 L17 17" fill="none" stroke="#8a8a8a" stroke-width="3" stroke-linejoin="round"/><circle cx="17" cy="17" r="2.6" fill="#8a8a8a"/></g></svg>
<div class="t" style="left:308px;top:17.0px;font-size:23px;line-height:32px;color:#b3b3b3;font-weight:400;letter-spacing:-0.4px">REX (Copy)</div>
<div class="r" style="left:500px;top:0px;width:438px;height:70px;background:#2c2c2c;"></div>
<div class="r" style="left:528px;top:18px;width:28px;height:28px;background:#7a7a7a;border-radius:4px"></div>
<svg class="r" style="left:528px;top:18px;overflow:visible" width="28" height="28" viewBox="0 0 28 28"><g transform="translate(4.6 4.6) scale(0.56)"><path d="M1.1 1.3 C8 3.5 17 5 21 7.5 C26 10.5 28 15 26.4 20.2 L31.6 25.3 L25.5 31.4 L20.6 26.6 C15 27.5 10 26 8 21.4 C5.5 15.5 3.5 8 1.1 1.3 Z M1.1 1.3 L17 17" fill="none" stroke="#fff" stroke-width="3" stroke-linejoin="round"/><circle cx="17" cy="17" r="2.6" fill="#fff"/></g></svg>
<div class="t" style="left:574px;top:17.0px;font-size:23.5px;line-height:32px;color:#fff;font-weight:700;letter-spacing:-0.6px">4. Data visualization Design</div>
<svg class="r" style="left:890px;top:24px;overflow:visible" width="17" height="17" viewBox="0 0 17 17"><path d="M1.5 1.5 L15.5 15.5 M15.5 1.5 L1.5 15.5" stroke="#b3b3b3" stroke-width="2.6"/></svg>
<svg class="r" style="left:962px;top:22px;overflow:visible" width="20" height="20" viewBox="0 0 20 20"><path d="M10 1 V19 M1 10 H19" stroke="#fff" stroke-width="2.2"/></svg>
<div class="r" style="left:2778px;top:0px;width:2px;height:70px;background:#333;"></div>
<svg class="r" style="left:2812px;top:28px;overflow:visible" width="8" height="8" viewBox="0 0 8 8"><circle cx="4" cy="4" r="3" fill="#b3b3b3"/></svg>
<svg class="r" style="left:2824px;top:28px;overflow:visible" width="8" height="8" viewBox="0 0 8 8"><circle cx="4" cy="4" r="3" fill="#b3b3b3"/></svg>
<svg class="r" style="left:2836px;top:28px;overflow:visible" width="8" height="8" viewBox="0 0 8 8"><circle cx="4" cy="4" r="3" fill="#b3b3b3"/></svg>
<div class="r" style="left:0px;top:70px;width:2876px;height:96px;background:#2c2c2c;"></div>
<svg class="r" style="left:25px;top:102px;overflow:visible" width="22" height="32" viewBox="0 0 22 32"><g fill="none" stroke="#fff" stroke-width="1.9"><path d="M11 0.95 H6 A5.05 5.05 0 0 0 6 11 H11 Z"/><path d="M11 0.95 H16 A5.05 5.05 0 0 1 16 11 H11 Z"/><path d="M11 11 H6 A5.05 5.05 0 0 0 6 21.05 H11 Z"/><circle cx="16" cy="16.05" r="5.05"/><path d="M11 21.05 H6 A5.05 5.05 0 1 0 11 26.1 Z"/></g></svg>
<svg class="r" style="left:61px;top:114px" width="14" height="8" viewBox="0 0 14 8"><path d="M1 1 L7.0 7 L13 1" fill="none" stroke="#fff" stroke-width="2"/></svg>
<div class="r" style="left:100px;top:70px;width:96px;height:96px;background:#0d99ff;"></div>
<svg class="r" style="left:128px;top:102px;overflow:visible" width="28" height="32" viewBox="0 0 28 32"><path d="M2 2 L26 15 L15 17.5 L7.5 28 Z" fill="none" stroke="#fff" stroke-width="1.8" stroke-linejoin="miter"/></svg>
<svg class="r" style="left:171px;top:115px" width="14" height="8" viewBox="0 0 14 8"><path d="M1 1 L7.0 7 L13 1" fill="none" stroke="#fff" stroke-width="2"/></svg>
<svg class="r" style="left:223px;top:101px;overflow:visible" width="34" height="34" viewBox="0 0 34 34"><path d="M8 1 V33 M26 1 V33 M1 8 H33 M1 26 H33" stroke="#fff" stroke-width="1.8"/></svg>
<svg class="r" style="left:267px;top:115px" width="14" height="8" viewBox="0 0 14 8"><path d="M1 1 L7.0 7 L13 1" fill="none" stroke="#fff" stroke-width="2"/></svg>
<svg class="r" style="left:317px;top:101px;overflow:visible" width="34" height="34" viewBox="0 0 34 34"><rect x="1.5" y="1.5" width="31" height="31" fill="none" stroke="#fff" stroke-width="2"/></svg>
<svg class="r" style="left:363px;top:115px" width="14" height="8" viewBox="0 0 14 8"><path d="M1 1 L7.0 7 L13 1" fill="none" stroke="#fff" stroke-width="2"/></svg>
<svg class="r" style="left:413px;top:101px;overflow:visible" width="34" height="34" viewBox="0 0 34 34"><path d="M1.1 1.3 C8 3.5 17 5 21 7.5 C26 10.5 28 15 26.4 20.2 L31.6 25.3 L25.5 31.4 L20.6 26.6 C15 27.5 10 26 8 21.4 C5.5 15.5 3.5 8 1.1 1.3 Z M1.1 1.3 L17 17" fill="none" stroke="#fff" stroke-width="2" stroke-linejoin="round"/><circle cx="17" cy="17" r="2.9" fill="#fff"/></svg>
<svg class="r" style="left:459px;top:115px" width="14" height="8" viewBox="0 0 14 8"><path d="M1 1 L7.0 7 L13 1" fill="none" stroke="#fff" stroke-width="2"/></svg>
<svg class="r" style="left:509px;top:101px;overflow:visible" width="28" height="34" viewBox="0 0 28 34"><path d="M2 9 V2 H26 V9 M14 2 V32 M8 32 H20" fill="none" stroke="#fff" stroke-width="2"/></svg>
<svg class="r" style="left:587px;top:101px;overflow:visible" width="34" height="34" viewBox="0 0 34 34"><rect x="3.9" y="1.9" width="10.3" height="10.3" fill="none" stroke="#fff" stroke-width="2"/><path d="M26.85 0.8 V13.2 M20.6 7 H33.1" stroke="#fff" stroke-width="2"/><path d="M9 17.9 L16.1 25 L9 32.1 L1.9 25 Z" fill="none" stroke="#fff" stroke-width="2"/><rect x="21.6" y="19.6" width="10.8" height="11" fill="none" stroke="#fff" stroke-width="2"/></svg>
<svg class="r" style="left:664px;top:97px;overflow:visible" width="38" height="42" viewBox="0 0 38 42"><path d="M9 22 V8 A3 3 0 0 1 15 8 V18 V5 A3 3 0 0 1 21 5 V18 V7 A3 3 0 0 1 27 7 V19 V12 A3 3 0 0 1 33 12 V28 C33 36 27 41 20 41 C14 41 11 38 7 33 L2 26 A3 3 0 0 1 7 22 L9 24" fill="none" stroke="#fff" stroke-width="1.8" stroke-linejoin="round"/></svg>
<svg class="r" style="left:743px;top:101px;overflow:visible" width="40" height="36" viewBox="0 0 40 36"><path d="M21 1.2 A15.8 15.8 0 0 0 8.1 23 L1.8 32.4 L14.6 30.9 A15.8 15.8 0 0 0 36.8 17" fill="none" stroke="#fff" stroke-width="1.9" stroke-linejoin="miter"/></svg>
<svg class="r" style="left:772px;top:96px;overflow:visible" width="16" height="16" viewBox="0 0 16 16"><circle cx="8" cy="8" r="8" fill="#f24822"/></svg>
<svg class="r" style="left:1155px;top:93px;overflow:visible" width="50" height="50" viewBox="0 0 50 50"><circle cx="25" cy="25" r="23.5" fill="#8a8a8a" stroke="#b8b8b8" stroke-width="2"/></svg>
<div class="t" style="left:1172px;top:102.5px;font-size:24px;line-height:33px;color:#fff;font-weight:400;">P</div>
<div class="t" style="left:1233px;top:98.5px;font-size:28px;line-height:39px;color:#b3b3b3;font-weight:400;">2. Design</div>
<svg class="r" style="left:1363px;top:104px;overflow:visible" width="28" height="26" viewBox="0 0 28 26"><path d="M14 1 C22 1 27 6 27 12 C27 17 23 16 20 16 C17 16 17 19 18 21 C19 24 16 25 13 25 C6 25 1 20 1 13 C1 6 6 1 14 1Z" fill="#d9a251"/><circle cx="7" cy="10" r="2.5" fill="#3bb6e8"/><circle cx="12" cy="5.5" r="2.3" fill="#4ac24a"/><circle cx="19" cy="6" r="2.3" fill="#e8d23b"/><circle cx="7" cy="17" r="2.5" fill="#8a4ad9"/><circle cx="23" cy="12" r="2" fill="#e84a4a"/><circle cx="14" cy="14" r="2" fill="#333"/></svg>
<svg class="r" style="left:1403px;top:101px;overflow:visible" width="16" height="34" viewBox="0 0 16 34"><path d="M14 1 L2 33" stroke="#666" stroke-width="1.8"/></svg>
<div class="t" style="left:1434px;top:98.5px;font-size:28px;line-height:39px;color:#fff;font-weight:400;letter-spacing:0.6px">4. Data visualization Design</div>
<svg class="r" style="left:1818px;top:115px" width="14" height="8" viewBox="0 0 14 8"><path d="M1 1 L7.0 7 L13 1" fill="none" stroke="#fff" stroke-width="2"/></svg>
<svg class="r" style="left:2385px;top:99px;overflow:visible" width="38" height="36" viewBox="0 0 38 36"><path d="M3 26 V18 A16 16 0 0 1 35 18 V26" fill="none" stroke="#fff" stroke-width="1.8"/><rect x="1.5" y="20" width="8" height="14" rx="3" fill="none" stroke="#fff" stroke-width="1.8"/><rect x="28.5" y="20" width="8" height="14" rx="3" fill="none" stroke="#fff" stroke-width="1.8"/></svg>
<svg class="r" style="left:2456px;top:94px;overflow:visible" width="48" height="48" viewBox="0 0 48 48"><defs><clipPath id="av"><circle cx="24" cy="24" r="24"/></clipPath><filter id="avb" x="-10%" y="-10%" width="120%" height="120%"><feGaussianBlur stdDeviation="0.8"/></filter><linearGradient id="avbg" x1="0" y1="0" x2="0" y2="1"><stop offset="0" stop-color="#8e969c"/><stop offset="1" stop-color="#aaa39f"/></linearGradient></defs><g clip-path="url(#av)"><g filter="url(#avb)"><rect x="-4" y="-4" width="56" height="56" fill="url(#avbg)"/><rect x="40.7" y="-4" width="12" height="56" fill="#7e9ab6"/><rect x="37.8" y="-4" width="2.9" height="56" fill="#d6c7b3"/><path d="M18 33 L30 33 L31 40.4 L17 40.4 Z" fill="#6e5247"/><path d="M17.7 16.7 L31 13.4 L34 18.2 L34 29.3 L33.3 34.9 L27.3 35.3 L21.4 33 L17 29.3 L13.6 22.7 Z" fill="#8c6a5c"/><path d="M22 31 L33.5 30 L33.3 34.9 L27.3 35.3 L21.4 33 Z" fill="#3d2c28"/><path d="M11 14.5 L13.3 6.7 L19.9 3.4 L27.3 4.5 L32.9 8.2 L33.3 13.8 L27.3 13.4 L20.7 16.7 L17.7 21.9 L14 21.9 L11.4 16.7 Z" fill="#2b211e"/><path d="M13.3 6.7 L19.9 3.4 L27.3 4.5 L24 6 L17 7.5 Z" fill="#a0786a"/><path d="M-2 50 L8.8 43.4 L15.5 39.7 L24.4 42.7 L31.8 39 L40.3 41.6 L50 50 Z" fill="#262a33"/></g></g></svg>
<div class="r" style="left:2534px;top:86px;width:108px;height:64px;background:#0d99ff;border-radius:12px"></div>
<div class="t" style="left:2557px;top:103.0px;font-size:22px;line-height:30px;color:#fff;font-weight:700;">Share</div>
<svg class="r" style="left:2693px;top:106px;overflow:visible" width="22" height="26" viewBox="0 0 22 26"><path d="M1.8 1.8 L19.2 12.3 L1.8 22.8 Z" fill="none" stroke="#fff" stroke-width="2" stroke-linejoin="miter"/></svg>
<div class="t" style="left:2785px;top:103.0px;font-size:22px;line-height:30px;color:#fff;font-weight:400;letter-spacing:-1.5px">7%</div>
<svg class="r" style="left:2826px;top:115px" width="14" height="8" viewBox="0 0 14 8"><path d="M1 1 L7.0 7 L13 1" fill="none" stroke="#fff" stroke-width="2"/></svg>
</body></html>
